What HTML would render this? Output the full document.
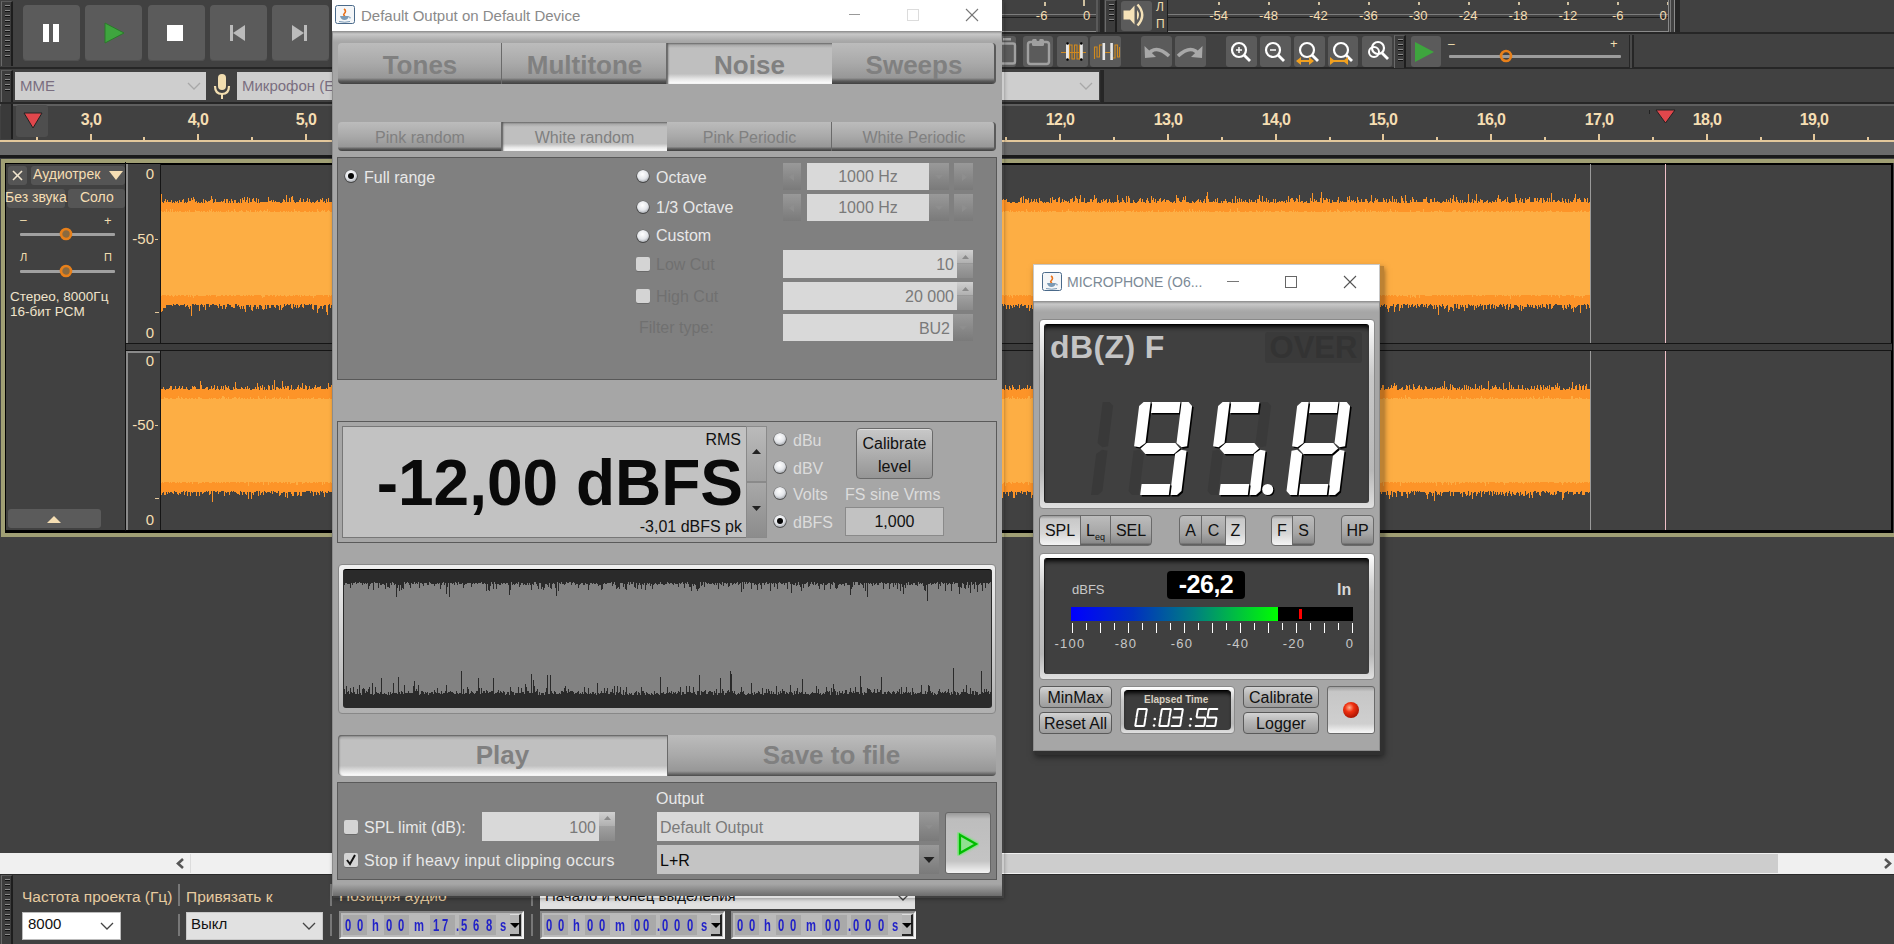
<!DOCTYPE html><html><head><meta charset="utf-8"><style>
html,body{margin:0;padding:0;width:1894px;height:944px;overflow:hidden;background:#414141;font-family:"Liberation Sans", sans-serif;}
div{box-sizing:border-box;}
svg{position:absolute;}
</style></head><body>
<div style="position:absolute;left:0px;top:67px;width:1894px;height:2px;background:#262626;"></div>
<div style="position:absolute;left:0px;top:102px;width:1894px;height:2px;background:#262626;"></div>
<div style="position:absolute;left:1000px;top:32px;width:894px;height:2px;background:#262626;"></div>
<div style="position:absolute;left:1px;top:1px;width:12px;height:65px;background:#3c3c3c;border-left:1px solid #6a6a6a;border-top:1px solid #5a5a5a;border-right:2px solid #1e1e1e;"></div>
<div style="position:absolute;left:5px;top:5px;width:5px;height:1px;background:#8a8a8a;"></div>
<div style="position:absolute;left:5px;top:6px;width:5px;height:1px;background:#111;"></div>
<div style="position:absolute;left:5px;top:10px;width:5px;height:1px;background:#8a8a8a;"></div>
<div style="position:absolute;left:5px;top:11px;width:5px;height:1px;background:#111;"></div>
<div style="position:absolute;left:5px;top:15px;width:5px;height:1px;background:#8a8a8a;"></div>
<div style="position:absolute;left:5px;top:16px;width:5px;height:1px;background:#111;"></div>
<div style="position:absolute;left:5px;top:20px;width:5px;height:1px;background:#8a8a8a;"></div>
<div style="position:absolute;left:5px;top:21px;width:5px;height:1px;background:#111;"></div>
<div style="position:absolute;left:5px;top:25px;width:5px;height:1px;background:#8a8a8a;"></div>
<div style="position:absolute;left:5px;top:26px;width:5px;height:1px;background:#111;"></div>
<div style="position:absolute;left:5px;top:30px;width:5px;height:1px;background:#8a8a8a;"></div>
<div style="position:absolute;left:5px;top:31px;width:5px;height:1px;background:#111;"></div>
<div style="position:absolute;left:5px;top:35px;width:5px;height:1px;background:#8a8a8a;"></div>
<div style="position:absolute;left:5px;top:36px;width:5px;height:1px;background:#111;"></div>
<div style="position:absolute;left:5px;top:40px;width:5px;height:1px;background:#8a8a8a;"></div>
<div style="position:absolute;left:5px;top:41px;width:5px;height:1px;background:#111;"></div>
<div style="position:absolute;left:5px;top:45px;width:5px;height:1px;background:#8a8a8a;"></div>
<div style="position:absolute;left:5px;top:46px;width:5px;height:1px;background:#111;"></div>
<div style="position:absolute;left:5px;top:50px;width:5px;height:1px;background:#8a8a8a;"></div>
<div style="position:absolute;left:5px;top:51px;width:5px;height:1px;background:#111;"></div>
<div style="position:absolute;left:5px;top:55px;width:5px;height:1px;background:#8a8a8a;"></div>
<div style="position:absolute;left:5px;top:56px;width:5px;height:1px;background:#111;"></div>
<div style="position:absolute;left:23.0px;top:5px;width:57px;height:56px;background:#5b5b5b;border-radius:4px;box-shadow:inset 0 -1px 0 #505050;"></div>
<div style="position:absolute;left:85.3px;top:5px;width:57px;height:56px;background:#5b5b5b;border-radius:4px;box-shadow:inset 0 -1px 0 #505050;"></div>
<div style="position:absolute;left:147.6px;top:5px;width:57px;height:56px;background:#5b5b5b;border-radius:4px;box-shadow:inset 0 -1px 0 #505050;"></div>
<div style="position:absolute;left:209.89999999999998px;top:5px;width:57px;height:56px;background:#5b5b5b;border-radius:4px;box-shadow:inset 0 -1px 0 #505050;"></div>
<div style="position:absolute;left:272.2px;top:5px;width:57px;height:56px;background:#5b5b5b;border-radius:4px;box-shadow:inset 0 -1px 0 #505050;"></div>
<div style="position:absolute;left:43px;top:24px;width:6px;height:18px;background:#fff;"></div>
<div style="position:absolute;left:53px;top:24px;width:6px;height:18px;background:#fff;"></div>
<svg style="left:104px;top:22px" width="22" height="22"><polygon points="1,1 20,11 1,21" fill="#3ea53e" stroke="#2a7a2a" stroke-width="1"/></svg>
<div style="position:absolute;left:167px;top:25px;width:16px;height:16px;background:#fff;"></div>
<svg style="left:228px;top:24px" width="20" height="20"><rect x="2" y="1" width="3" height="16" fill="#bbb"/><polygon points="17,1 5,9 17,17" fill="#bbb"/></svg>
<svg style="left:290px;top:24px" width="20" height="20"><rect x="14" y="1" width="3" height="16" fill="#bbb"/><polygon points="2,1 14,9 2,17" fill="#bbb"/></svg>
<div style="position:absolute;left:1px;top:70px;width:12px;height:32px;background:#3c3c3c;border-left:1px solid #6a6a6a;border-top:1px solid #5a5a5a;border-right:2px solid #1e1e1e;"></div>
<div style="position:absolute;left:5px;top:74px;width:5px;height:1px;background:#8a8a8a;"></div>
<div style="position:absolute;left:5px;top:75px;width:5px;height:1px;background:#111;"></div>
<div style="position:absolute;left:5px;top:79px;width:5px;height:1px;background:#8a8a8a;"></div>
<div style="position:absolute;left:5px;top:80px;width:5px;height:1px;background:#111;"></div>
<div style="position:absolute;left:5px;top:84px;width:5px;height:1px;background:#8a8a8a;"></div>
<div style="position:absolute;left:5px;top:85px;width:5px;height:1px;background:#111;"></div>
<div style="position:absolute;left:5px;top:89px;width:5px;height:1px;background:#8a8a8a;"></div>
<div style="position:absolute;left:5px;top:90px;width:5px;height:1px;background:#111;"></div>
<div style="position:absolute;left:15px;top:72px;width:191px;height:28px;background:#cecece;"></div>
<div style="position:absolute;left:20px;top:77px;white-space:nowrap;font-size:15px;color:#7a6e80;">MME</div>
<svg style="left:187px;top:82px" width="14" height="9"><polyline points="1,1 7,7 13,1" fill="none" stroke="#a8a8a8" stroke-width="1.3"/></svg>
<svg style="left:212px;top:73px" width="20" height="28"><rect x="6" y="1" width="8" height="16" rx="4" fill="#f2deb0"/><path d="M3,13 Q3,21 10,21 Q17,21 17,13" fill="none" stroke="#f2deb0" stroke-width="2.2"/><rect x="9" y="21" width="2" height="5" fill="#f2deb0"/></svg>
<div style="position:absolute;left:237px;top:72px;width:862px;height:28px;background:#cecece;"></div>
<div style="position:absolute;left:242px;top:77px;white-space:nowrap;font-size:15px;color:#7a6e80;">Микрофон (E</div>
<svg style="left:1079px;top:82px" width="14" height="9"><polyline points="1,1 7,7 13,1" fill="none" stroke="#a8a8a8" stroke-width="1.3"/></svg>
<div style="position:absolute;left:1100px;top:70px;width:4px;height:33px;background:#262626;border-left:1px solid #2a2a2a;"></div>
<div style="position:absolute;left:1002px;top:0px;width:98px;height:32px;background:#414141;"></div>
<div style="position:absolute;left:1002px;top:14px;width:96px;height:1px;background:#7c7c7c;"></div>
<div style="position:absolute;left:1002px;top:17px;width:96px;height:1px;background:#1e1e1e;"></div>
<div style="position:absolute;left:1002px;top:31px;width:96px;height:1px;background:#8a8a8a;"></div>
<div style="position:absolute;left:1031.6px;top:8px;white-space:nowrap;font-size:13px;color:#f5deb3;width:20px;text-align:center;">-6</div>
<div style="position:absolute;left:1076.7px;top:8px;white-space:nowrap;font-size:13px;color:#f5deb3;width:20px;text-align:center;">0</div>
<div style="position:absolute;left:1083px;top:0px;width:2px;height:6px;background:#cfc0a0;"></div>
<div style="position:absolute;left:1044px;top:2px;width:2px;height:4px;background:#cfc0a0;"></div>
<div style="position:absolute;left:1096px;top:0px;width:2px;height:32px;background:#5a5a5a;"></div>
<div style="position:absolute;left:1100px;top:0px;width:4px;height:32px;background:#262626;"></div>
<div style="position:absolute;left:1105px;top:0px;width:12px;height:32px;background:#3c3c3c;border-left:1px solid #6a6a6a;border-top:1px solid #5a5a5a;border-right:2px solid #1e1e1e;"></div>
<div style="position:absolute;left:1109px;top:4px;width:5px;height:1px;background:#8a8a8a;"></div>
<div style="position:absolute;left:1109px;top:5px;width:5px;height:1px;background:#111;"></div>
<div style="position:absolute;left:1109px;top:9px;width:5px;height:1px;background:#8a8a8a;"></div>
<div style="position:absolute;left:1109px;top:10px;width:5px;height:1px;background:#111;"></div>
<div style="position:absolute;left:1109px;top:14px;width:5px;height:1px;background:#8a8a8a;"></div>
<div style="position:absolute;left:1109px;top:15px;width:5px;height:1px;background:#111;"></div>
<div style="position:absolute;left:1109px;top:19px;width:5px;height:1px;background:#8a8a8a;"></div>
<div style="position:absolute;left:1109px;top:20px;width:5px;height:1px;background:#111;"></div>
<div style="position:absolute;left:1121px;top:1px;width:31px;height:30px;background:#5b5b5b;border-radius:3px;"></div>
<svg style="left:1121px;top:2px" width="30" height="28"><polygon points="2.5,8.5 9,8.5 13.5,3.5 13.5,22.5 9,17.5 2.5,17.5" fill="#f5e2b8"/><path d="M16,8 Q20,13 16,18 Z" fill="#f5e2b8"/><path d="M16.5,2.5 Q26,13 16.5,23.5" fill="none" stroke="#f5e2b8" stroke-width="2.4"/></svg>
<div style="position:absolute;left:1156px;top:0px;white-space:nowrap;font-size:12px;color:#f2deb0;">Л</div>
<div style="position:absolute;left:1156px;top:17px;white-space:nowrap;font-size:12px;color:#f2deb0;">П</div>
<div style="position:absolute;left:1167px;top:0px;width:1px;height:32px;background:#1e1e1e;"></div>
<div style="position:absolute;left:1168px;top:14px;width:500px;height:1px;background:#7c7c7c;"></div>
<div style="position:absolute;left:1168px;top:17px;width:500px;height:1px;background:#1e1e1e;"></div>
<div style="position:absolute;left:1168px;top:31px;width:501px;height:1px;background:#8a8a8a;"></div>
<div style="position:absolute;left:1204.6px;top:8px;white-space:nowrap;font-size:13px;color:#f5deb3;width:28px;text-align:center;">-54</div>
<div style="position:absolute;left:1254.5px;top:8px;white-space:nowrap;font-size:13px;color:#f5deb3;width:28px;text-align:center;">-48</div>
<div style="position:absolute;left:1304.3999999999999px;top:8px;white-space:nowrap;font-size:13px;color:#f5deb3;width:28px;text-align:center;">-42</div>
<div style="position:absolute;left:1354.3px;top:8px;white-space:nowrap;font-size:13px;color:#f5deb3;width:28px;text-align:center;">-36</div>
<div style="position:absolute;left:1404.1999999999998px;top:8px;white-space:nowrap;font-size:13px;color:#f5deb3;width:28px;text-align:center;">-30</div>
<div style="position:absolute;left:1454.1px;top:8px;white-space:nowrap;font-size:13px;color:#f5deb3;width:28px;text-align:center;">-24</div>
<div style="position:absolute;left:1504.0px;top:8px;white-space:nowrap;font-size:13px;color:#f5deb3;width:28px;text-align:center;">-18</div>
<div style="position:absolute;left:1553.8999999999999px;top:8px;white-space:nowrap;font-size:13px;color:#f5deb3;width:28px;text-align:center;">-12</div>
<div style="position:absolute;left:1603.8px;top:8px;white-space:nowrap;font-size:13px;color:#f5deb3;width:28px;text-align:center;">-6</div>
<div style="position:absolute;left:1649px;top:8px;white-space:nowrap;font-size:13px;color:#f5deb3;width:28px;text-align:center;">0</div>
<div style="position:absolute;left:1218px;top:2px;width:2px;height:3px;background:#cfc0a0;"></div>
<div style="position:absolute;left:1268px;top:2px;width:2px;height:3px;background:#cfc0a0;"></div>
<div style="position:absolute;left:1318px;top:2px;width:2px;height:3px;background:#cfc0a0;"></div>
<div style="position:absolute;left:1368px;top:2px;width:2px;height:3px;background:#cfc0a0;"></div>
<div style="position:absolute;left:1418px;top:2px;width:2px;height:3px;background:#cfc0a0;"></div>
<div style="position:absolute;left:1468px;top:2px;width:2px;height:3px;background:#cfc0a0;"></div>
<div style="position:absolute;left:1518px;top:2px;width:2px;height:3px;background:#cfc0a0;"></div>
<div style="position:absolute;left:1567px;top:2px;width:2px;height:3px;background:#cfc0a0;"></div>
<div style="position:absolute;left:1617px;top:2px;width:2px;height:3px;background:#cfc0a0;"></div>
<div style="position:absolute;left:1667px;top:2px;width:2px;height:3px;background:#cfc0a0;"></div>
<div style="position:absolute;left:1668px;top:0px;width:1px;height:32px;background:#8a8a8a;"></div>
<div style="position:absolute;left:1670px;top:0px;width:1px;height:32px;background:#7a7a7a;"></div>
<div style="position:absolute;left:1674px;top:0px;width:1px;height:32px;background:#8a8a8a;"></div>
<div style="position:absolute;left:1675px;top:0px;width:5px;height:33px;background:#262626;"></div>
<div style="position:absolute;left:1022.6px;top:36px;width:30.5px;height:31px;background:#5b5b5b;border-radius:3px;"></div>
<div style="position:absolute;left:1057px;top:36px;width:30.5px;height:31px;background:#5b5b5b;border-radius:3px;"></div>
<div style="position:absolute;left:1090.3px;top:36px;width:30.5px;height:31px;background:#5b5b5b;border-radius:3px;"></div>
<div style="position:absolute;left:1141.4px;top:36px;width:30.5px;height:31px;background:#5b5b5b;border-radius:3px;"></div>
<div style="position:absolute;left:1175.3px;top:36px;width:30.5px;height:31px;background:#5b5b5b;border-radius:3px;"></div>
<div style="position:absolute;left:1226px;top:36px;width:30.5px;height:31px;background:#5b5b5b;border-radius:3px;"></div>
<div style="position:absolute;left:1260px;top:36px;width:30.5px;height:31px;background:#5b5b5b;border-radius:3px;"></div>
<div style="position:absolute;left:1294px;top:36px;width:30.5px;height:31px;background:#5b5b5b;border-radius:3px;"></div>
<div style="position:absolute;left:1327.9px;top:36px;width:30.5px;height:31px;background:#5b5b5b;border-radius:3px;"></div>
<div style="position:absolute;left:1361.6px;top:36px;width:30.5px;height:31px;background:#5b5b5b;border-radius:3px;"></div>
<div style="position:absolute;left:1410.5px;top:36px;width:30.5px;height:31px;background:#5b5b5b;border-radius:3px;"></div>
<div style="position:absolute;left:1002px;top:36px;width:14px;height:31px;background:#5b5b5b;border-radius:0 3px 3px 0;"></div>
<svg style="left:1002px;top:36px" width="17" height="31"><rect x="-5" y="7.5" width="18" height="20" rx="2" fill="none" stroke="#a0a0a0" stroke-width="2.4"/><rect x="1" y="2" width="8" height="2.5" fill="#a0a0a0"/></svg>
<svg style="left:1023px;top:36px" width="30" height="31"><rect x="5" y="6" width="21" height="22" rx="2.5" fill="none" stroke="#a0a0a0" stroke-width="2.4"/><rect x="9" y="3" width="12" height="7" rx="1.5" fill="#a0a0a0"/><circle cx="15" cy="3.5" r="1.6" fill="#5b5b5b"/></svg>
<svg style="left:1057px;top:36px" width="30" height="31"><line x1="4" y1="16.5" x2="29" y2="16.5" stroke="#d08a20" stroke-width="1"/><rect x="9" y="7.5" width="3.3" height="16" fill="#e6e6e6"/><rect x="22.8" y="7.5" width="3" height="16" fill="#e6e6e6"/><path d="M12.5,23 V9 H15 V23 H17.5 V9 H20 V23 H22.5 V9" fill="none" stroke="#d08a20" stroke-width="1.1"/><circle cx="10.5" cy="7.5" r="1.3" fill="#000"/><circle cx="24.3" cy="7.5" r="1.3" fill="#000"/><circle cx="10.5" cy="23.5" r="1.3" fill="#000"/><circle cx="24.3" cy="23.5" r="1.3" fill="#000"/></svg>
<svg style="left:1090px;top:36px" width="31" height="31"><path d="M4.5,23 V11 H7 V21 H9.5 V9 H12" fill="none" stroke="#d08a20" stroke-width="1.1"/><rect x="12.5" y="7" width="2.6" height="17" fill="#e6e6e6"/><rect x="20.3" y="7" width="2.6" height="17" fill="#e6e6e6"/><line x1="15" y1="16.5" x2="20.3" y2="16.5" stroke="#d08a20" stroke-width="1"/><path d="M23,22 H25 V9 H27.5 V21 H29.5 V11" fill="none" stroke="#d08a20" stroke-width="1.1"/></svg>
<svg style="left:1142px;top:36px" width="30" height="31"><path d="M5,20 Q13,7 27,20" fill="none" stroke="#a8a8a8" stroke-width="3.6"/><polygon points="2.5,10 3,22 14,21" fill="#a8a8a8"/></svg>
<svg style="left:1175px;top:36px" width="30" height="31"><path d="M25,20 Q17,7 3,20" fill="none" stroke="#a8a8a8" stroke-width="3.6"/><polygon points="27.5,10 27,22 16,21" fill="#a8a8a8"/></svg>
<svg style="left:1226px;top:36px" width="31" height="31"><circle cx="13" cy="14" r="7" fill="none" stroke="#fff" stroke-width="2.2"/><line x1="18" y1="19" x2="24" y2="25" stroke="#fff" stroke-width="2.8"/><line x1="10" y1="14" x2="16" y2="14" stroke="#fff" stroke-width="1.5"/><line x1="13" y1="11" x2="13" y2="17" stroke="#fff" stroke-width="1.5"/></svg>
<svg style="left:1260px;top:36px" width="31" height="31"><circle cx="13" cy="14" r="7" fill="none" stroke="#fff" stroke-width="2.2"/><line x1="18" y1="19" x2="24" y2="25" stroke="#fff" stroke-width="2.8"/><line x1="10" y1="14" x2="16" y2="14" stroke="#fff" stroke-width="1.5"/></svg>
<svg style="left:1294px;top:36px" width="31" height="31"><circle cx="13" cy="14" r="7" fill="none" stroke="#fff" stroke-width="2.2"/><line x1="18" y1="19" x2="24" y2="25" stroke="#fff" stroke-width="2.8"/><line x1="3" y1="25" x2="19" y2="25" stroke="#f0a020" stroke-width="2"/><polygon points="2,25 7,21 7,29" fill="#f0a020"/><polygon points="20,25 15,21 15,29" fill="#f0a020"/></svg>
<svg style="left:1328px;top:36px" width="31" height="31"><circle cx="13" cy="14" r="7" fill="none" stroke="#fff" stroke-width="2.2"/><line x1="18" y1="19" x2="24" y2="25" stroke="#fff" stroke-width="2.8"/><line x1="3" y1="25" x2="19" y2="25" stroke="#f0a020" stroke-width="2"/><polygon points="2,21 7,25 2,29" fill="#f0a020"/><polygon points="20,21 15,25 20,29" fill="#f0a020"/></svg>
<svg style="left:1362px;top:36px" width="31" height="31"><circle cx="12" cy="16" r="5" fill="none" stroke="#fff" stroke-width="2"/><circle cx="16" cy="12" r="6" fill="none" stroke="#fff" stroke-width="2.2"/><line x1="20" y1="17" x2="26" y2="23" stroke="#fff" stroke-width="2.8"/></svg>
<div style="position:absolute;left:1394px;top:35px;width:12px;height:33px;background:#3c3c3c;border-left:1px solid #6a6a6a;border-top:1px solid #5a5a5a;border-right:2px solid #1e1e1e;"></div>
<div style="position:absolute;left:1398px;top:39px;width:5px;height:1px;background:#8a8a8a;"></div>
<div style="position:absolute;left:1398px;top:40px;width:5px;height:1px;background:#111;"></div>
<div style="position:absolute;left:1398px;top:44px;width:5px;height:1px;background:#8a8a8a;"></div>
<div style="position:absolute;left:1398px;top:45px;width:5px;height:1px;background:#111;"></div>
<div style="position:absolute;left:1398px;top:49px;width:5px;height:1px;background:#8a8a8a;"></div>
<div style="position:absolute;left:1398px;top:50px;width:5px;height:1px;background:#111;"></div>
<div style="position:absolute;left:1398px;top:54px;width:5px;height:1px;background:#8a8a8a;"></div>
<div style="position:absolute;left:1398px;top:55px;width:5px;height:1px;background:#111;"></div>
<div style="position:absolute;left:1398px;top:59px;width:5px;height:1px;background:#8a8a8a;"></div>
<div style="position:absolute;left:1398px;top:60px;width:5px;height:1px;background:#111;"></div>
<svg style="left:1414px;top:41px" width="22" height="22"><polygon points="1,1 20,11 1,21" fill="#3ea53e"/></svg>
<div style="position:absolute;left:1448px;top:37px;white-space:nowrap;font-size:12px;color:#f2deb0;">–</div>
<div style="position:absolute;left:1610px;top:36px;white-space:nowrap;font-size:13px;color:#f2deb0;">+</div>
<div style="position:absolute;left:1449px;top:55px;width:172px;height:3px;background:#9c9c9c;border-radius:1px;"></div>
<svg style="left:1499px;top:49px" width="14" height="14"><circle cx="7" cy="7" r="5" fill="none" stroke="#e8801a" stroke-width="2.6"/></svg>
<div style="position:absolute;left:1629px;top:35px;width:1px;height:33px;background:#262626;"></div>
<div style="position:absolute;left:1630px;top:35px;width:2px;height:33px;background:#4a4a4a;"></div>
<div style="position:absolute;left:1632px;top:35px;width:2px;height:33px;background:#262626;"></div>
<div style="position:absolute;left:0px;top:104px;width:1894px;height:2px;background:#5f5f5f;"></div>
<div style="position:absolute;left:0px;top:106px;width:1894px;height:35px;background:#414141;"></div>
<div style="position:absolute;left:1px;top:104px;width:12px;height:35px;background:#3a3a3a;border-right:2px solid #1e1e1e;"></div>
<div style="position:absolute;left:16px;top:105px;width:32px;height:32px;background:#4e4e4e;border-radius:3px;"></div>
<svg style="left:22px;top:111px" width="22" height="20"><polygon points="2,2 20,2 11,17" fill="#e0474c" stroke="#222" stroke-width="1"/></svg>
<div style="position:absolute;left:0px;top:140px;width:1894px;height:2px;background:#e4c89c;"></div>
<div style="position:absolute;left:0px;top:142px;width:1894px;height:13px;background:#6a6a6a;"></div>
<div style="position:absolute;left:0px;top:155px;width:1894px;height:3px;background:#1a1a1a;"></div>
<div style="position:absolute;left:36px;top:137px;width:2px;height:3px;background:#e4c89c;"></div>
<div style="position:absolute;left:90px;top:134px;width:2px;height:6px;background:#e4c89c;"></div>
<div style="position:absolute;left:71px;top:111px;white-space:nowrap;font-size:16px;font-weight:bold;color:#f5deb3;width:40px;text-align:center;letter-spacing:-0.6px;">3,0</div>
<div style="position:absolute;left:143px;top:137px;width:2px;height:3px;background:#e4c89c;"></div>
<div style="position:absolute;left:197px;top:134px;width:2px;height:6px;background:#e4c89c;"></div>
<div style="position:absolute;left:178px;top:111px;white-space:nowrap;font-size:16px;font-weight:bold;color:#f5deb3;width:40px;text-align:center;letter-spacing:-0.6px;">4,0</div>
<div style="position:absolute;left:251px;top:137px;width:2px;height:3px;background:#e4c89c;"></div>
<div style="position:absolute;left:305px;top:134px;width:2px;height:6px;background:#e4c89c;"></div>
<div style="position:absolute;left:286px;top:111px;white-space:nowrap;font-size:16px;font-weight:bold;color:#f5deb3;width:40px;text-align:center;letter-spacing:-0.6px;">5,0</div>
<div style="position:absolute;left:359px;top:137px;width:2px;height:3px;background:#e4c89c;"></div>
<div style="position:absolute;left:413px;top:134px;width:2px;height:6px;background:#e4c89c;"></div>
<div style="position:absolute;left:394px;top:111px;white-space:nowrap;font-size:16px;font-weight:bold;color:#f5deb3;width:40px;text-align:center;letter-spacing:-0.6px;">6,0</div>
<div style="position:absolute;left:467px;top:137px;width:2px;height:3px;background:#e4c89c;"></div>
<div style="position:absolute;left:521px;top:134px;width:2px;height:6px;background:#e4c89c;"></div>
<div style="position:absolute;left:502px;top:111px;white-space:nowrap;font-size:16px;font-weight:bold;color:#f5deb3;width:40px;text-align:center;letter-spacing:-0.6px;">7,0</div>
<div style="position:absolute;left:574px;top:137px;width:2px;height:3px;background:#e4c89c;"></div>
<div style="position:absolute;left:628px;top:134px;width:2px;height:6px;background:#e4c89c;"></div>
<div style="position:absolute;left:609px;top:111px;white-space:nowrap;font-size:16px;font-weight:bold;color:#f5deb3;width:40px;text-align:center;letter-spacing:-0.6px;">8,0</div>
<div style="position:absolute;left:682px;top:137px;width:2px;height:3px;background:#e4c89c;"></div>
<div style="position:absolute;left:736px;top:134px;width:2px;height:6px;background:#e4c89c;"></div>
<div style="position:absolute;left:717px;top:111px;white-space:nowrap;font-size:16px;font-weight:bold;color:#f5deb3;width:40px;text-align:center;letter-spacing:-0.6px;">9,0</div>
<div style="position:absolute;left:790px;top:137px;width:2px;height:3px;background:#e4c89c;"></div>
<div style="position:absolute;left:844px;top:134px;width:2px;height:6px;background:#e4c89c;"></div>
<div style="position:absolute;left:825px;top:111px;white-space:nowrap;font-size:16px;font-weight:bold;color:#f5deb3;width:40px;text-align:center;letter-spacing:-0.6px;">10,0</div>
<div style="position:absolute;left:898px;top:137px;width:2px;height:3px;background:#e4c89c;"></div>
<div style="position:absolute;left:952px;top:134px;width:2px;height:6px;background:#e4c89c;"></div>
<div style="position:absolute;left:933px;top:111px;white-space:nowrap;font-size:16px;font-weight:bold;color:#f5deb3;width:40px;text-align:center;letter-spacing:-0.6px;">11,0</div>
<div style="position:absolute;left:1005px;top:137px;width:2px;height:3px;background:#e4c89c;"></div>
<div style="position:absolute;left:1059px;top:134px;width:2px;height:6px;background:#e4c89c;"></div>
<div style="position:absolute;left:1040px;top:111px;white-space:nowrap;font-size:16px;font-weight:bold;color:#f5deb3;width:40px;text-align:center;letter-spacing:-0.6px;">12,0</div>
<div style="position:absolute;left:1113px;top:137px;width:2px;height:3px;background:#e4c89c;"></div>
<div style="position:absolute;left:1167px;top:134px;width:2px;height:6px;background:#e4c89c;"></div>
<div style="position:absolute;left:1148px;top:111px;white-space:nowrap;font-size:16px;font-weight:bold;color:#f5deb3;width:40px;text-align:center;letter-spacing:-0.6px;">13,0</div>
<div style="position:absolute;left:1221px;top:137px;width:2px;height:3px;background:#e4c89c;"></div>
<div style="position:absolute;left:1275px;top:134px;width:2px;height:6px;background:#e4c89c;"></div>
<div style="position:absolute;left:1256px;top:111px;white-space:nowrap;font-size:16px;font-weight:bold;color:#f5deb3;width:40px;text-align:center;letter-spacing:-0.6px;">14,0</div>
<div style="position:absolute;left:1329px;top:137px;width:2px;height:3px;background:#e4c89c;"></div>
<div style="position:absolute;left:1382px;top:134px;width:2px;height:6px;background:#e4c89c;"></div>
<div style="position:absolute;left:1363px;top:111px;white-space:nowrap;font-size:16px;font-weight:bold;color:#f5deb3;width:40px;text-align:center;letter-spacing:-0.6px;">15,0</div>
<div style="position:absolute;left:1436px;top:137px;width:2px;height:3px;background:#e4c89c;"></div>
<div style="position:absolute;left:1490px;top:134px;width:2px;height:6px;background:#e4c89c;"></div>
<div style="position:absolute;left:1471px;top:111px;white-space:nowrap;font-size:16px;font-weight:bold;color:#f5deb3;width:40px;text-align:center;letter-spacing:-0.6px;">16,0</div>
<div style="position:absolute;left:1544px;top:137px;width:2px;height:3px;background:#e4c89c;"></div>
<div style="position:absolute;left:1598px;top:134px;width:2px;height:6px;background:#e4c89c;"></div>
<div style="position:absolute;left:1579px;top:111px;white-space:nowrap;font-size:16px;font-weight:bold;color:#f5deb3;width:40px;text-align:center;letter-spacing:-0.6px;">17,0</div>
<div style="position:absolute;left:1652px;top:137px;width:2px;height:3px;background:#e4c89c;"></div>
<div style="position:absolute;left:1706px;top:134px;width:2px;height:6px;background:#e4c89c;"></div>
<div style="position:absolute;left:1687px;top:111px;white-space:nowrap;font-size:16px;font-weight:bold;color:#f5deb3;width:40px;text-align:center;letter-spacing:-0.6px;">18,0</div>
<div style="position:absolute;left:1760px;top:137px;width:2px;height:3px;background:#e4c89c;"></div>
<div style="position:absolute;left:1813px;top:134px;width:2px;height:6px;background:#e4c89c;"></div>
<div style="position:absolute;left:1794px;top:111px;white-space:nowrap;font-size:16px;font-weight:bold;color:#f5deb3;width:40px;text-align:center;letter-spacing:-0.6px;">19,0</div>
<div style="position:absolute;left:1867px;top:137px;width:2px;height:3px;background:#e4c89c;"></div>
<svg style="left:1654px;top:109px" width="24" height="18"><polygon points="2,1 21,1 11.5,14" fill="#e0474c" stroke="#222" stroke-width="1"/></svg>
<div style="position:absolute;left:1649px;top:110px;width:1px;height:4px;background:#222;"></div>
<div style="position:absolute;left:0px;top:158px;width:1894px;height:377px;background:#414141;"></div>
<div style="position:absolute;left:1px;top:159px;width:1893px;height:378px;border:4px solid #a09f74;border-right:none;"></div>
<div style="position:absolute;left:5px;top:163px;width:1888px;height:370px;background:#414141;border-top:2px solid #000;border-bottom:3px solid #000;border-right:2px solid #000;border-left:1px solid #000;"></div>
<div style="position:absolute;left:6px;top:164px;width:119px;height:366px;background:#414141;"></div>
<div style="position:absolute;left:8px;top:166px;width:19px;height:19px;background:#555;border-radius:3px;"></div>
<svg style="left:11px;top:169px" width="13" height="13"><line x1="2" y1="2" x2="11" y2="11" stroke="#f2e6cf" stroke-width="1.6"/><line x1="11" y1="2" x2="2" y2="11" stroke="#f2e6cf" stroke-width="1.6"/></svg>
<div style="position:absolute;left:31px;top:166px;width:94px;height:19px;background:#555;border-radius:3px;"></div>
<div style="position:absolute;left:33px;top:166px;white-space:nowrap;font-size:14px;color:#f5deb3;">Аудиотрек</div>
<svg style="left:108px;top:170px" width="16" height="12"><polygon points="1,1 15,1 8,10" fill="#f5deb3"/></svg>
<div style="position:absolute;left:7px;top:189px;width:58px;height:19px;background:#555;border-radius:3px;"></div>
<div style="position:absolute;left:5px;top:189px;white-space:nowrap;font-size:14px;color:#f5deb3;">Без звука</div>
<div style="position:absolute;left:68px;top:189px;width:57px;height:19px;background:#555;border-radius:3px;"></div>
<div style="position:absolute;left:80px;top:189px;white-space:nowrap;font-size:14px;color:#f5deb3;">Соло</div>
<div style="position:absolute;left:20px;top:213px;white-space:nowrap;font-size:12px;color:#f2deb0;">–</div>
<div style="position:absolute;left:104px;top:213px;white-space:nowrap;font-size:13px;color:#f2deb0;">+</div>
<div style="position:absolute;left:20px;top:233px;width:95px;height:3px;background:#a0a0a0;border-radius:1px;"></div>
<svg style="left:59px;top:227px" width="14" height="14"><circle cx="7" cy="7" r="5" fill="#8a6a40" stroke="#e8801a" stroke-width="2.6"/></svg>
<div style="position:absolute;left:20px;top:251px;white-space:nowrap;font-size:11px;color:#f2deb0;">Л</div>
<div style="position:absolute;left:104px;top:251px;white-space:nowrap;font-size:11px;color:#f2deb0;">П</div>
<div style="position:absolute;left:20px;top:270px;width:95px;height:3px;background:#a0a0a0;border-radius:1px;"></div>
<svg style="left:59px;top:264px" width="14" height="14"><circle cx="7" cy="7" r="5" fill="#8a6a40" stroke="#e8801a" stroke-width="2.6"/></svg>
<div style="position:absolute;left:10px;top:289px;white-space:nowrap;font-size:13.5px;color:#f0e4cc;line-height:15px;">Стерео, 8000Гц</div>
<div style="position:absolute;left:10px;top:304px;white-space:nowrap;font-size:13.5px;color:#f0e4cc;line-height:15px;">16-бит PCM</div>
<div style="position:absolute;left:8px;top:509px;width:93px;height:19px;background:#5b5b5b;border-radius:3px;"></div>
<svg style="left:46px;top:514px" width="16" height="10"><polygon points="1,9 15,9 8,2" fill="#f5deb3"/></svg>
<div style="position:absolute;left:125px;top:162px;width:1px;height:369px;background:#111;"></div>
<div style="position:absolute;left:126px;top:164px;width:34px;height:179px;background:#414141;border-left:2px solid #8a8a8a;"></div>
<div style="position:absolute;left:160px;top:164px;width:1px;height:179px;background:#151515;"></div>
<div style="position:absolute;left:126px;top:165px;white-space:nowrap;font-size:15px;color:#f5deb3;width:28px;text-align:right;">0</div>
<div style="position:absolute;left:126px;top:230px;white-space:nowrap;font-size:15px;color:#f5deb3;width:28px;text-align:right;">-50</div>
<div style="position:absolute;left:155px;top:239px;width:3px;height:1px;background:#e4c89c;"></div>
<div style="position:absolute;left:155px;top:312px;width:4px;height:1px;background:#e4c89c;"></div>
<div style="position:absolute;left:126px;top:324px;white-space:nowrap;font-size:15px;color:#f5deb3;width:28px;text-align:right;">0</div>
<div style="position:absolute;left:126px;top:343px;width:1766px;height:8px;background:#3c3c3c;border-top:1px solid #151515;border-bottom:1px solid #151515;"></div>
<div style="position:absolute;left:126px;top:351px;width:34px;height:179px;background:#414141;border-left:2px solid #8a8a8a;"></div>
<div style="position:absolute;left:160px;top:351px;width:1px;height:179px;background:#151515;"></div>
<div style="position:absolute;left:126px;top:352px;white-space:nowrap;font-size:15px;color:#f5deb3;width:28px;text-align:right;">0</div>
<div style="position:absolute;left:126px;top:416px;white-space:nowrap;font-size:15px;color:#f5deb3;width:28px;text-align:right;">-50</div>
<div style="position:absolute;left:155px;top:425px;width:3px;height:1px;background:#e4c89c;"></div>
<div style="position:absolute;left:155px;top:498px;width:4px;height:1px;background:#e4c89c;"></div>
<div style="position:absolute;left:126px;top:511px;white-space:nowrap;font-size:15px;color:#f5deb3;width:28px;text-align:right;">0</div>
<div style="position:absolute;left:127px;top:351px;width:33px;height:2px;background:#8a8a8a;"></div>
<svg style="left:0;top:0" width="1894" height="944"><path d="M161,194V194h1V202h1V203h1V201h1V199h1V202h1V200h1V202h1V202h1V202h1V200h1V203h1V202h1V203h1V201h1V202h1V201h1V203h1V200h1V202h1V202h1V200h1V199h1V203h1V202h1V203h1V202h1V198h1V201h1V201h1V198h1V200h1V197h1V199h1V202h1V201h1V203h1V202h1V203h1V203h1V202h1V203h1V199h1V203h1V200h1V201h1V202h1V201h1V201h1V200h1V196h1V199h1V203h1V202h1V199h1V202h1V202h1V202h1V202h1V202h1V201h1V202h1V201h1V199h1V203h1V199h1V199h1V203h1V201h1V203h1V199h1V201h1V203h1V200h1V200h1V203h1V203h1V202h1V203h1V199h1V203h1V198h1V200h1V197h1V202h1V200h1V197h1V203h1V198h1V202h1V202h1V199h1V198h1V201h1V202h1V198h1V203h1V199h1V203h1V202h1V202h1V202h1V202h1V202h1V202h1V202h1V202h1V197h1V201h1V201h1V200h1V202h1V200h1V202h1V201h1V202h1V202h1V202h1V202h1V203h1V203h1V202h1V199h1V200h1V202h1V195h1V202h1V202h1V198h1V202h1V197h1V196h1V200h1V202h1V203h1V202h1V202h1V202h1V200h1V198h1V202h1V202h1V199h1V202h1V202h1V201h1V198h1V202h1V199h1V202h1V203h1V202h1V202h1V203h1V202h1V201h1V200h1V202h1V202h1V199h1V200h1V198h1V202h1V201h1V203h1V199h1V202h1V198h1V202h1V202h1V202h1V202h1V195h1V196h1V198h1V202h1V202h1V200h1V198h1V199h1V202h1V198h1V200h1V203h1V199h1V200h1V202h1V203h1V200h1V194h1V202h1V202h1V203h1V198h1V200h1V203h1V201h1V200h1V200h1V199h1V199h1V199h1V203h1V199h1V198h1V203h1V202h1V202h1V199h1V199h1V203h1V202h1V198h1V193h1V202h1V201h1V202h1V203h1V203h1V202h1V202h1V200h1V202h1V202h1V200h1V203h1V199h1V202h1V200h1V201h1V203h1V203h1V198h1V195h1V200h1V201h1V200h1V202h1V202h1V193h1V203h1V200h1V202h1V203h1V203h1V203h1V201h1V198h1V202h1V197h1V201h1V203h1V202h1V192h1V202h1V198h1V201h1V202h1V202h1V202h1V199h1V203h1V200h1V202h1V199h1V202h1V199h1V202h1V200h1V202h1V202h1V199h1V202h1V199h1V202h1V202h1V203h1V201h1V202h1V203h1V202h1V203h1V198h1V199h1V198h1V192h1V198h1V203h1V198h1V203h1V197h1V201h1V197h1V202h1V202h1V202h1V202h1V203h1V200h1V201h1V202h1V199h1V203h1V199h1V202h1V202h1V202h1V200h1V202h1V201h1V200h1V199h1V202h1V203h1V202h1V202h1V202h1V198h1V202h1V201h1V200h1V201h1V203h1V203h1V202h1V203h1V198h1V202h1V197h1V199h1V202h1V202h1V202h1V199h1V202h1V199h1V198h1V202h1V203h1V203h1V202h1V202h1V198h1V202h1V203h1V202h1V202h1V202h1V202h1V199h1V196h1V199h1V203h1V201h1V192h1V201h1V202h1V201h1V203h1V200h1V200h1V192h1V197h1V197h1V200h1V202h1V203h1V202h1V201h1V200h1V202h1V203h1V194h1V198h1V203h1V201h1V202h1V203h1V203h1V199h1V202h1V202h1V203h1V202h1V198h1V202h1V198h1V198h1V199h1V202h1V196h1V201h1V202h1V203h1V198h1V203h1V199h1V202h1V192h1V199h1V201h1V198h1V202h1V201h1V200h1V195h1V202h1V203h1V202h1V195h1V202h1V201h1V202h1V198h1V203h1V199h1V203h1V201h1V200h1V202h1V196h1V202h1V203h1V198h1V203h1V200h1V197h1V203h1V202h1V202h1V202h1V200h1V201h1V202h1V200h1V199h1V202h1V200h1V203h1V201h1V198h1V196h1V199h1V201h1V203h1V203h1V194h1V200h1V198h1V202h1V199h1V203h1V202h1V201h1V199h1V202h1V202h1V203h1V200h1V203h1V203h1V201h1V203h1V201h1V202h1V202h1V199h1V203h1V202h1V202h1V202h1V200h1V200h1V202h1V203h1V202h1V200h1V198h1V202h1V201h1V201h1V203h1V199h1V202h1V201h1V199h1V202h1V202h1V203h1V202h1V199h1V196h1V203h1V203h1V201h1V199h1V202h1V200h1V200h1V201h1V200h1V203h1V202h1V203h1V202h1V199h1V198h1V201h1V202h1V195h1V201h1V202h1V202h1V202h1V203h1V198h1V202h1V202h1V202h1V203h1V202h1V203h1V202h1V202h1V199h1V199h1V203h1V203h1V203h1V202h1V203h1V199h1V203h1V203h1V200h1V202h1V202h1V200h1V196h1V202h1V202h1V202h1V202h1V198h1V200h1V199h1V199h1V202h1V199h1V202h1V201h1V202h1V203h1V198h1V203h1V198h1V199h1V203h1V202h1V198h1V202h1V202h1V202h1V202h1V196h1V200h1V194h1V203h1V203h1V199h1V202h1V203h1V200h1V202h1V203h1V199h1V202h1V203h1V199h1V202h1V200h1V201h1V200h1V203h1V202h1V200h1V202h1V202h1V201h1V202h1V203h1V199h1V202h1V198h1V202h1V203h1V198h1V203h1V198h1V202h1V201h1V203h1V196h1V203h1V202h1V202h1V202h1V202h1V202h1V202h1V202h1V199h1V201h1V200h1V202h1V203h1V200h1V203h1V199h1V203h1V199h1V197h1V202h1V202h1V198h1V202h1V202h1V201h1V198h1V203h1V201h1V203h1V202h1V203h1V203h1V201h1V200h1V200h1V199h1V202h1V202h1V202h1V198h1V196h1V200h1V202h1V200h1V198h1V198h1V203h1V199h1V202h1V202h1V197h1V199h1V201h1V203h1V197h1V202h1V196h1V201h1V200h1V202h1V199h1V201h1V202h1V202h1V203h1V199h1V199h1V200h1V203h1V194h1V201h1V203h1V200h1V199h1V202h1V200h1V199h1V202h1V202h1V197h1V199h1V200h1V202h1V199h1V202h1V200h1V199h1V196h1V198h1V199h1V198h1V203h1V202h1V202h1V203h1V202h1V202h1V200h1V202h1V203h1V200h1V200h1V203h1V202h1V201h1V202h1V198h1V199h1V202h1V200h1V202h1V202h1V203h1V195h1V202h1V199h1V202h1V199h1V202h1V202h1V200h1V202h1V202h1V197h1V203h1V202h1V202h1V200h1V198h1V202h1V199h1V203h1V202h1V197h1V200h1V202h1V199h1V201h1V202h1V202h1V200h1V203h1V201h1V203h1V201h1V202h1V199h1V193h1V198h1V198h1V202h1V199h1V202h1V198h1V203h1V202h1V199h1V199h1V200h1V198h1V203h1V202h1V202h1V202h1V202h1V201h1V203h1V202h1V202h1V202h1V201h1V198h1V202h1V202h1V198h1V201h1V202h1V193h1V202h1V202h1V202h1V199h1V200h1V200h1V202h1V200h1V202h1V202h1V201h1V199h1V200h1V202h1V199h1V203h1V202h1V202h1V199h1V203h1V203h1V203h1V196h1V197h1V203h1V202h1V202h1V202h1V203h1V202h1V202h1V202h1V200h1V202h1V198h1V198h1V199h1V195h1V202h1V202h1V202h1V202h1V201h1V200h1V202h1V202h1V202h1V203h1V202h1V202h1V202h1V203h1V199h1V200h1V200h1V203h1V200h1V199h1V203h1V198h1V200h1V199h1V200h1V200h1V199h1V202h1V202h1V202h1V203h1V203h1V202h1V202h1V202h1V203h1V203h1V203h1V202h1V202h1V198h1V197h1V203h1V196h1V203h1V199h1V199h1V200h1V198h1V203h1V202h1V199h1V202h1V201h1V199h1V202h1V199h1V202h1V203h1V198h1V201h1V201h1V202h1V203h1V202h1V203h1V202h1V202h1V202h1V203h1V198h1V203h1V197h1V200h1V200h1V199h1V202h1V202h1V198h1V197h1V203h1V202h1V199h1V202h1V200h1V201h1V201h1V202h1V201h1V203h1V199h1V199h1V198h1V202h1V201h1V196h1V198h1V199h1V203h1V199h1V195h1V202h1V202h1V202h1V198h1V203h1V203h1V202h1V202h1V202h1V199h1V199h1V202h1V200h1V195h1V199h1V198h1V203h1V202h1V203h1V203h1V200h1V202h1V199h1V201h1V200h1V199h1V203h1V202h1V199h1V202h1V203h1V202h1V203h1V202h1V202h1V202h1V195h1V200h1V203h1V202h1V202h1V198h1V200h1V202h1V203h1V196h1V202h1V196h1V198h1V203h1V203h1V203h1V200h1V202h1V203h1V203h1V202h1V201h1V199h1V198h1V202h1V199h1V202h1V202h1V203h1V200h1V198h1V201h1V203h1V203h1V196h1V200h1V198h1V202h1V199h1V203h1V201h1V201h1V199h1V198h1V202h1V201h1V200h1V199h1V202h1V200h1V200h1V200h1V201h1V202h1V202h1V203h1V202h1V201h1V203h1V195h1V198h1V198h1V201h1V202h1V202h1V200h1V197h1V200h1V196h1V202h1V202h1V202h1V203h1V203h1V203h1V201h1V202h1V203h1V202h1V201h1V200h1V199h1V202h1V200h1V202h1V203h1V201h1V199h1V203h1V196h1V192h1V199h1V202h1V202h1V202h1V202h1V201h1V202h1V199h1V202h1V198h1V203h1V203h1V203h1V201h1V203h1V201h1V201h1V199h1V201h1V203h1V202h1V202h1V202h1V203h1V199h1V203h1V203h1V196h1V203h1V199h1V202h1V198h1V202h1V199h1V202h1V201h1V202h1V200h1V202h1V202h1V203h1V199h1V202h1V200h1V202h1V202h1V202h1V200h1V203h1V199h1V199h1V195h1V201h1V202h1V196h1V202h1V201h1V202h1V198h1V202h1V200h1V203h1V202h1V202h1V202h1V199h1V203h1V199h1V203h1V202h1V202h1V201h1V202h1V201h1V201h1V202h1V201h1V203h1V200h1V202h1V196h1V202h1V199h1V198h1V198h1V200h1V202h1V201h1V198h1V199h1V202h1V195h1V202h1V201h1V201h1V203h1V202h1V202h1V201h1V203h1V203h1V203h1V198h1V201h1V193h1V202h1V199h1V201h1V200h1V202h1V202h1V202h1V198h1V192h1V203h1V198h1V200h1V200h1V198h1V199h1V202h1V199h1V203h1V203h1V200h1V202h1V202h1V202h1V202h1V200h1V197h1V203h1V201h1V202h1V201h1V202h1V202h1V202h1V202h1V197h1V200h1V196h1V202h1V200h1V201h1V200h1V202h1V201h1V203h1V197h1V200h1V202h1V202h1V199h1V202h1V202h1V202h1V199h1V199h1V201h1V203h1V202h1V201h1V195h1V202h1V203h1V201h1V198h1V200h1V199h1V202h1V202h1V202h1V202h1V202h1V198h1V200h1V202h1V199h1V203h1V202h1V199h1V201h1V202h1V196h1V202h1V199h1V202h1V199h1V203h1V202h1V203h1V203h1V196h1V198h1V201h1V203h1V195h1V201h1V203h1V203h1V203h1V200h1V202h1V197h1V199h1V202h1V202h1V200h1V202h1V202h1V202h1V202h1V202h1V202h1V199h1V199h1V199h1V197h1V202h1V203h1V203h1V199h1V199h1V202h1V202h1V198h1V202h1V202h1V201h1V202h1V202h1V203h1V203h1V202h1V201h1V202h1V202h1V199h1V202h1V200h1V202h1V198h1V203h1V199h1V195h1V201h1V202h1V197h1V200h1V202h1V203h1V200h1V203h1V200h1V203h1V202h1V202h1V203h1V202h1V194h1V202h1V203h1V202h1V199h1V203h1V200h1V201h1V194h1V203h1V201h1V202h1V199h1V200h1V200h1V203h1V202h1V202h1V201h1V200h1V203h1V202h1V202h1V203h1V201h1V202h1V202h1V200h1V202h1V198h1V195h1V199h1V199h1V202h1V201h1V201h1V200h1V199h1V202h1V197h1V202h1V203h1V203h1V202h1V202h1V202h1V202h1V194h1V198h1V201h1V203h1V200h1V198h1V202h1V199h1V203h1V203h1V198h1V200h1V199h1V199h1V197h1V202h1V202h1V202h1V202h1V198h1V198h1V201h1V198h1V202h1V200h1V198h1V198h1V203h1V198h1V200h1V202h1V201h1V198h1V202h1V198h1V202h1V193h1V202h1V200h1V200h1V202h1V202h1V201h1V200h1V201h1V202h1V202h1V198h1V201h1V203h1V199h1V202h1V203h1V199h1V203h1V201h1V202h1V202h1V200h1V198h1V194h1V202h1V199h1V199h1V198h1V200h1V202h1V202h1V202h1V198h1V199h1V202h1V198h1V203h1V202h1V308h-1V305h-1V304h-1V309h-1V305h-1V304h-1V305h-1V305h-1V305h-1V313h-1V305h-1V305h-1V306h-1V307h-1V308h-1V307h-1V312h-1V308h-1V309h-1V305h-1V304h-1V307h-1V305h-1V309h-1V308h-1V305h-1V310h-1V308h-1V305h-1V305h-1V305h-1V305h-1V305h-1V304h-1V304h-1V305h-1V306h-1V308h-1V309h-1V304h-1V304h-1V309h-1V305h-1V304h-1V308h-1V307h-1V307h-1V304h-1V308h-1V305h-1V307h-1V305h-1V309h-1V306h-1V305h-1V308h-1V308h-1V305h-1V307h-1V305h-1V307h-1V305h-1V304h-1V307h-1V307h-1V307h-1V309h-1V306h-1V311h-1V305h-1V310h-1V307h-1V306h-1V305h-1V305h-1V305h-1V308h-1V308h-1V309h-1V304h-1V307h-1V310h-1V304h-1V305h-1V309h-1V306h-1V304h-1V307h-1V305h-1V304h-1V305h-1V307h-1V307h-1V306h-1V309h-1V305h-1V308h-1V304h-1V305h-1V309h-1V304h-1V305h-1V305h-1V309h-1V305h-1V305h-1V310h-1V305h-1V306h-1V304h-1V306h-1V307h-1V305h-1V308h-1V306h-1V310h-1V305h-1V306h-1V305h-1V306h-1V305h-1V304h-1V308h-1V308h-1V305h-1V311h-1V307h-1V305h-1V307h-1V305h-1V309h-1V309h-1V304h-1V308h-1V304h-1V304h-1V311h-1V308h-1V307h-1V307h-1V310h-1V312h-1V305h-1V306h-1V308h-1V309h-1V306h-1V304h-1V307h-1V306h-1V305h-1V315h-1V307h-1V305h-1V309h-1V305h-1V309h-1V306h-1V305h-1V304h-1V305h-1V306h-1V308h-1V304h-1V307h-1V305h-1V307h-1V304h-1V304h-1V305h-1V307h-1V306h-1V304h-1V308h-1V305h-1V306h-1V307h-1V304h-1V305h-1V307h-1V305h-1V308h-1V304h-1V305h-1V305h-1V304h-1V304h-1V308h-1V305h-1V308h-1V311h-1V304h-1V304h-1V305h-1V307h-1V312h-1V304h-1V306h-1V306h-1V306h-1V308h-1V312h-1V309h-1V305h-1V307h-1V304h-1V305h-1V306h-1V305h-1V307h-1V309h-1V312h-1V311h-1V308h-1V304h-1V305h-1V307h-1V307h-1V306h-1V311h-1V306h-1V305h-1V305h-1V306h-1V307h-1V308h-1V307h-1V313h-1V305h-1V306h-1V312h-1V305h-1V304h-1V305h-1V305h-1V305h-1V304h-1V305h-1V305h-1V308h-1V306h-1V304h-1V305h-1V307h-1V305h-1V307h-1V305h-1V305h-1V306h-1V304h-1V305h-1V313h-1V308h-1V306h-1V307h-1V307h-1V308h-1V304h-1V313h-1V305h-1V304h-1V305h-1V305h-1V305h-1V307h-1V304h-1V311h-1V304h-1V304h-1V305h-1V305h-1V308h-1V305h-1V304h-1V309h-1V304h-1V307h-1V304h-1V306h-1V306h-1V304h-1V307h-1V305h-1V305h-1V306h-1V305h-1V304h-1V305h-1V308h-1V305h-1V305h-1V309h-1V305h-1V306h-1V307h-1V307h-1V305h-1V305h-1V306h-1V304h-1V305h-1V305h-1V309h-1V307h-1V304h-1V310h-1V306h-1V305h-1V306h-1V305h-1V310h-1V306h-1V305h-1V305h-1V305h-1V309h-1V306h-1V305h-1V304h-1V308h-1V305h-1V307h-1V305h-1V314h-1V308h-1V308h-1V305h-1V305h-1V306h-1V305h-1V304h-1V305h-1V305h-1V308h-1V304h-1V304h-1V304h-1V309h-1V305h-1V305h-1V307h-1V308h-1V304h-1V305h-1V308h-1V305h-1V304h-1V304h-1V308h-1V305h-1V305h-1V304h-1V308h-1V314h-1V304h-1V307h-1V305h-1V312h-1V304h-1V305h-1V307h-1V305h-1V305h-1V308h-1V304h-1V307h-1V305h-1V305h-1V307h-1V309h-1V304h-1V305h-1V305h-1V306h-1V306h-1V308h-1V310h-1V307h-1V307h-1V309h-1V305h-1V304h-1V306h-1V307h-1V305h-1V304h-1V305h-1V309h-1V305h-1V305h-1V304h-1V308h-1V305h-1V307h-1V304h-1V305h-1V305h-1V307h-1V308h-1V305h-1V305h-1V305h-1V306h-1V305h-1V305h-1V305h-1V310h-1V305h-1V306h-1V305h-1V305h-1V307h-1V304h-1V309h-1V307h-1V304h-1V305h-1V312h-1V308h-1V304h-1V304h-1V304h-1V307h-1V306h-1V308h-1V305h-1V305h-1V305h-1V312h-1V308h-1V305h-1V305h-1V304h-1V305h-1V307h-1V305h-1V308h-1V308h-1V307h-1V307h-1V305h-1V309h-1V306h-1V305h-1V306h-1V305h-1V305h-1V304h-1V305h-1V308h-1V305h-1V304h-1V309h-1V308h-1V304h-1V305h-1V304h-1V305h-1V308h-1V309h-1V304h-1V305h-1V305h-1V307h-1V311h-1V314h-1V307h-1V308h-1V305h-1V305h-1V305h-1V307h-1V305h-1V304h-1V305h-1V305h-1V305h-1V311h-1V307h-1V313h-1V308h-1V309h-1V310h-1V307h-1V307h-1V309h-1V308h-1V309h-1V304h-1V305h-1V304h-1V304h-1V307h-1V305h-1V308h-1V306h-1V305h-1V304h-1V306h-1V312h-1V305h-1V304h-1V305h-1V305h-1V305h-1V306h-1V306h-1V304h-1V305h-1V305h-1V305h-1V305h-1V307h-1V305h-1V305h-1V305h-1V305h-1V308h-1V305h-1V308h-1V305h-1V306h-1V306h-1V305h-1V307h-1V305h-1V307h-1V305h-1V306h-1V313h-1V308h-1V307h-1V306h-1V305h-1V307h-1V304h-1V304h-1V305h-1V305h-1V308h-1V308h-1V308h-1V307h-1V307h-1V304h-1V306h-1V305h-1V304h-1V308h-1V304h-1V307h-1V304h-1V308h-1V305h-1V307h-1V304h-1V310h-1V309h-1V305h-1V308h-1V311h-1V305h-1V308h-1V308h-1V305h-1V305h-1V306h-1V306h-1V304h-1V305h-1V308h-1V304h-1V306h-1V305h-1V305h-1V307h-1V305h-1V308h-1V306h-1V305h-1V309h-1V305h-1V305h-1V309h-1V305h-1V304h-1V306h-1V304h-1V309h-1V311h-1V306h-1V305h-1V305h-1V305h-1V307h-1V311h-1V307h-1V310h-1V304h-1V306h-1V305h-1V305h-1V304h-1V305h-1V308h-1V305h-1V307h-1V308h-1V304h-1V309h-1V307h-1V305h-1V305h-1V307h-1V304h-1V310h-1V309h-1V310h-1V309h-1V305h-1V304h-1V305h-1V305h-1V309h-1V304h-1V312h-1V308h-1V307h-1V305h-1V306h-1V305h-1V304h-1V306h-1V305h-1V312h-1V304h-1V304h-1V304h-1V310h-1V309h-1V305h-1V308h-1V307h-1V309h-1V305h-1V304h-1V305h-1V304h-1V305h-1V308h-1V305h-1V307h-1V309h-1V305h-1V306h-1V304h-1V305h-1V305h-1V305h-1V310h-1V305h-1V310h-1V307h-1V305h-1V306h-1V305h-1V305h-1V307h-1V306h-1V305h-1V309h-1V305h-1V304h-1V309h-1V305h-1V305h-1V307h-1V306h-1V304h-1V305h-1V307h-1V304h-1V307h-1V308h-1V307h-1V307h-1V305h-1V304h-1V304h-1V305h-1V305h-1V306h-1V308h-1V304h-1V306h-1V304h-1V305h-1V308h-1V305h-1V305h-1V305h-1V312h-1V307h-1V309h-1V310h-1V304h-1V305h-1V304h-1V309h-1V309h-1V309h-1V305h-1V309h-1V305h-1V305h-1V304h-1V309h-1V305h-1V307h-1V308h-1V305h-1V308h-1V310h-1V305h-1V305h-1V304h-1V306h-1V304h-1V309h-1V305h-1V308h-1V306h-1V305h-1V309h-1V305h-1V309h-1V305h-1V305h-1V306h-1V307h-1V304h-1V306h-1V307h-1V305h-1V306h-1V305h-1V305h-1V307h-1V304h-1V307h-1V305h-1V305h-1V305h-1V305h-1V306h-1V305h-1V307h-1V305h-1V304h-1V304h-1V306h-1V307h-1V304h-1V304h-1V305h-1V304h-1V305h-1V306h-1V304h-1V307h-1V307h-1V304h-1V307h-1V305h-1V305h-1V305h-1V305h-1V307h-1V309h-1V306h-1V310h-1V307h-1V308h-1V306h-1V312h-1V305h-1V305h-1V308h-1V306h-1V308h-1V304h-1V305h-1V304h-1V308h-1V307h-1V309h-1V308h-1V304h-1V308h-1V304h-1V305h-1V305h-1V305h-1V309h-1V304h-1V305h-1V304h-1V304h-1V306h-1V307h-1V304h-1V309h-1V306h-1V304h-1V307h-1V309h-1V307h-1V306h-1V307h-1V308h-1V307h-1V309h-1V307h-1V309h-1V310h-1V306h-1V309h-1V305h-1V305h-1V304h-1V304h-1V305h-1V305h-1V307h-1V305h-1V305h-1V306h-1V307h-1V305h-1V306h-1V308h-1V305h-1V313h-1V309h-1V314h-1V309h-1V306h-1V308h-1V304h-1V308h-1V308h-1V306h-1V307h-1V309h-1V304h-1V304h-1V305h-1V312h-1V304h-1V306h-1V305h-1V307h-1V305h-1V305h-1V305h-1V309h-1V305h-1V304h-1V313h-1V305h-1V304h-1V308h-1V313h-1V304h-1V309h-1V306h-1V305h-1V304h-1V305h-1V305h-1V305h-1V311h-1V306h-1V305h-1V308h-1V307h-1V304h-1V307h-1V309h-1V307h-1V309h-1V305h-1V307h-1V307h-1V305h-1V305h-1V304h-1V306h-1V304h-1V305h-1V304h-1V304h-1V309h-1V305h-1V308h-1V314h-1V307h-1V304h-1V304h-1V305h-1V305h-1V305h-1V305h-1V304h-1V304h-1V305h-1V305h-1V308h-1V305h-1V309h-1V304h-1V305h-1V305h-1V308h-1V307h-1V312h-1V305h-1V306h-1V307h-1V304h-1V305h-1V304h-1V304h-1V305h-1V307h-1V305h-1V307h-1V305h-1V305h-1V307h-1V305h-1V306h-1V308h-1V308h-1V307h-1V305h-1V305h-1V306h-1V307h-1V305h-1V304h-1V306h-1V305h-1V305h-1V309h-1V307h-1V307h-1V304h-1V306h-1V308h-1V308h-1V305h-1V306h-1V305h-1V309h-1V309h-1V304h-1V304h-1V304h-1V308h-1V305h-1V305h-1V304h-1V305h-1V305h-1V306h-1V305h-1V310h-1V309h-1V304h-1V305h-1V307h-1V305h-1V304h-1V305h-1V306h-1V305h-1V308h-1V305h-1V305h-1V304h-1V309h-1V305h-1V313h-1V305h-1V305h-1V305h-1V305h-1V305h-1V305h-1V305h-1V309h-1V304h-1V305h-1V308h-1V305h-1V309h-1V309h-1V305h-1V305h-1V308h-1V305h-1V305h-1V309h-1V305h-1V308h-1V306h-1V310h-1V308h-1V308h-1V307h-1V309h-1V306h-1V305h-1V304h-1V310h-1V305h-1V305h-1V304h-1V304h-1V305h-1V305h-1V305h-1V305h-1V308h-1V309h-1V305h-1V308h-1V305h-1V306h-1V309h-1V304h-1V305h-1V306h-1V307h-1V308h-1V305h-1V307h-1V307h-1V307h-1V305h-1V307h-1V305h-1V307h-1V304h-1V304h-1V309h-1V305h-1V304h-1V309h-1V311h-1V305h-1V305h-1V304h-1V306h-1V307h-1V304h-1V307h-1V304h-1V304h-1V307h-1V313h-1V305h-1V306h-1V305h-1V308h-1V304h-1V306h-1V304h-1V306h-1V308h-1V312h-1V312h-1V304h-1V305h-1V306h-1V306h-1V311h-1V305h-1V307h-1V308h-1V305h-1V308h-1V305h-1V308h-1V309h-1V305h-1V306h-1V308h-1V305h-1V309h-1V306h-1V304h-1V304h-1V306h-1V305h-1V304h-1V304h-1V306h-1V304h-1V304h-1V308h-1V306h-1V305h-1V304h-1V305h-1V309h-1V305h-1V306h-1V309h-1V305h-1V308h-1V309h-1V307h-1V308h-1V309h-1V308h-1V310h-1V306h-1V308h-1V305h-1V310h-1V305h-1V306h-1V308h-1V305h-1V305h-1V308h-1V305h-1V306h-1V305h-1V308h-1V304h-1V310h-1V305h-1V309h-1V306h-1V304h-1V308h-1V308h-1V307h-1V306h-1V307h-1V306h-1V314h-1V304h-1V305h-1V305h-1V305h-1V305h-1V305h-1V307h-1V304h-1V305h-1V305h-1V305h-1V308h-1V305h-1V308h-1V304h-1V305h-1V305h-1V306h-1V308h-1V307h-1V304h-1V309h-1V307h-1V309h-1V305h-1V307h-1V308h-1V310h-1V309h-1V305h-1V308h-1V304h-1V305h-1V308h-1V310h-1V305h-1V307h-1V306h-1V305h-1V311h-1V307h-1V305h-1V306h-1V304h-1V305h-1V311h-1V305h-1V307h-1V304h-1V304h-1V306h-1V305h-1V305h-1V305h-1V306h-1V306h-1V305h-1V305h-1V307h-1V304h-1V305h-1V305h-1V309h-1V305h-1V307h-1V305h-1V305h-1V309h-1V305h-1V307h-1V305h-1V307h-1V305h-1V308h-1V304h-1V309h-1V307h-1V304h-1V307h-1V308h-1V304h-1V313h-1V308h-1V305h-1V305h-1V307h-1V309h-1V308h-1V305h-1V309h-1V304h-1V308h-1V305h-1V305h-1V306h-1V304h-1V306h-1V308h-1V306h-1V304h-1V304h-1V305h-1V310h-1V305h-1V308h-1V304h-1V305h-1V315h-1V312h-1V305h-1V305h-1V306h-1V309h-1V306h-1V306h-1V308h-1V309h-1V313h-1V305h-1V305h-1V305h-1V310h-1V309h-1V304h-1V305h-1V304h-1V305h-1V305h-1V305h-1V305h-1V304h-1V308h-1V307h-1V304h-1V305h-1V307h-1V308h-1V305h-1V308h-1V305h-1V307h-1V304h-1V309h-1V308h-1V304h-1V305h-1V305h-1V304h-1V305h-1V306h-1V304h-1V307h-1V308h-1V310h-1V305h-1V310h-1V306h-1V305h-1V305h-1V308h-1V307h-1V305h-1V305h-1V305h-1V308h-1V308h-1V305h-1V305h-1V309h-1V305h-1V309h-1V310h-1V309h-1V306h-1V305h-1V305h-1V309h-1V307h-1V309h-1V305h-1V305h-1V307h-1V311h-1V310h-1V305h-1V307h-1V305h-1V305h-1V305h-1V312h-1V309h-1V306h-1V309h-1V306h-1V309h-1V307h-1V305h-1V306h-1V304h-1V304h-1V308h-1V308h-1V307h-1V307h-1V305h-1V305h-1V304h-1V304h-1V307h-1V309h-1V305h-1V305h-1V309h-1V306h-1V306h-1V304h-1V308h-1V306h-1V305h-1V305h-1V305h-1V304h-1V304h-1V305h-1V305h-1V307h-1V304h-1V304h-1V304h-1V310h-1V305h-1V307h-1V305h-1V304h-1V305h-1V311h-1V305h-1V305h-1V305h-1V304h-1V305h-1V304h-1V304h-1V316h-1V306h-1V309h-1V307h-1V305h-1V306h-1V307h-1V304h-1V305h-1V305h-1V305h-1V305h-1V306h-1V305h-1V304h-1V304h-1V305h-1V305h-1V304h-1V306h-1V305h-1V305h-1V305h-1V305h-1V305h-1V305h-1V308h-1V308h-1V308h-1V311h-1V312h-1Z" fill="#fd9428" shape-rendering="crispEdges"/><path d="M161,211V211h1V212h1V212h1V211h1V212h1V209h1V212h1V211h1V212h1V209h1V212h1V209h1V212h1V212h1V211h1V212h1V211h1V212h1V211h1V211h1V212h1V212h1V212h1V212h1V211h1V212h1V211h1V212h1V210h1V212h1V212h1V212h1V212h1V212h1V210h1V211h1V211h1V211h1V211h1V212h1V211h1V212h1V211h1V211h1V212h1V212h1V211h1V212h1V210h1V211h1V209h1V212h1V211h1V212h1V212h1V211h1V212h1V211h1V212h1V211h1V212h1V212h1V212h1V212h1V212h1V211h1V212h1V210h1V212h1V212h1V211h1V211h1V212h1V209h1V211h1V212h1V212h1V212h1V211h1V211h1V210h1V211h1V212h1V212h1V212h1V210h1V211h1V211h1V212h1V210h1V212h1V212h1V212h1V212h1V210h1V212h1V211h1V212h1V211h1V210h1V211h1V212h1V211h1V210h1V211h1V211h1V209h1V212h1V211h1V212h1V212h1V212h1V212h1V211h1V212h1V212h1V212h1V212h1V212h1V211h1V212h1V212h1V211h1V211h1V212h1V211h1V212h1V211h1V212h1V212h1V211h1V212h1V212h1V209h1V211h1V211h1V212h1V211h1V211h1V212h1V212h1V212h1V212h1V211h1V211h1V212h1V212h1V212h1V211h1V212h1V212h1V211h1V212h1V212h1V212h1V212h1V209h1V211h1V212h1V212h1V211h1V210h1V211h1V210h1V212h1V212h1V211h1V210h1V211h1V212h1V212h1V211h1V211h1V212h1V212h1V212h1V212h1V212h1V212h1V212h1V208h1V212h1V212h1V211h1V212h1V211h1V212h1V211h1V212h1V212h1V211h1V211h1V212h1V212h1V211h1V211h1V212h1V212h1V212h1V211h1V212h1V211h1V212h1V212h1V209h1V212h1V211h1V212h1V212h1V211h1V212h1V212h1V211h1V211h1V211h1V211h1V212h1V212h1V212h1V212h1V212h1V212h1V212h1V212h1V211h1V212h1V212h1V211h1V212h1V210h1V211h1V211h1V211h1V210h1V211h1V212h1V212h1V211h1V212h1V212h1V209h1V212h1V212h1V212h1V211h1V212h1V211h1V210h1V212h1V211h1V212h1V212h1V212h1V212h1V210h1V212h1V211h1V212h1V212h1V212h1V211h1V212h1V212h1V212h1V210h1V211h1V212h1V212h1V212h1V212h1V211h1V212h1V212h1V210h1V212h1V211h1V211h1V212h1V212h1V212h1V211h1V212h1V212h1V211h1V211h1V212h1V212h1V212h1V212h1V212h1V212h1V212h1V211h1V211h1V211h1V211h1V212h1V212h1V211h1V210h1V212h1V212h1V212h1V210h1V211h1V212h1V212h1V212h1V212h1V211h1V212h1V212h1V212h1V210h1V211h1V212h1V211h1V212h1V212h1V211h1V209h1V211h1V212h1V209h1V212h1V211h1V211h1V211h1V212h1V211h1V209h1V210h1V212h1V212h1V211h1V210h1V208h1V212h1V209h1V209h1V212h1V211h1V212h1V212h1V212h1V212h1V211h1V212h1V212h1V212h1V211h1V211h1V209h1V212h1V212h1V211h1V211h1V212h1V212h1V211h1V212h1V212h1V212h1V212h1V212h1V212h1V211h1V212h1V212h1V212h1V211h1V211h1V211h1V211h1V211h1V212h1V211h1V211h1V210h1V212h1V212h1V212h1V212h1V212h1V209h1V212h1V212h1V211h1V211h1V212h1V212h1V211h1V212h1V208h1V211h1V212h1V212h1V212h1V212h1V212h1V209h1V211h1V212h1V211h1V211h1V210h1V212h1V211h1V212h1V212h1V212h1V212h1V212h1V211h1V211h1V212h1V211h1V212h1V212h1V212h1V211h1V211h1V212h1V209h1V212h1V212h1V208h1V212h1V212h1V211h1V212h1V211h1V212h1V212h1V211h1V212h1V211h1V212h1V209h1V212h1V211h1V211h1V212h1V211h1V211h1V212h1V211h1V210h1V212h1V212h1V210h1V212h1V211h1V212h1V211h1V212h1V211h1V211h1V211h1V212h1V212h1V210h1V211h1V211h1V210h1V212h1V212h1V211h1V212h1V212h1V211h1V212h1V212h1V211h1V211h1V211h1V211h1V212h1V211h1V212h1V211h1V212h1V209h1V211h1V212h1V211h1V212h1V211h1V212h1V211h1V212h1V212h1V212h1V209h1V211h1V211h1V211h1V212h1V212h1V211h1V212h1V212h1V211h1V212h1V211h1V212h1V211h1V212h1V211h1V212h1V212h1V212h1V212h1V212h1V211h1V212h1V212h1V212h1V212h1V211h1V212h1V212h1V211h1V212h1V211h1V212h1V211h1V212h1V211h1V212h1V212h1V211h1V212h1V212h1V212h1V212h1V211h1V208h1V211h1V212h1V212h1V211h1V212h1V211h1V211h1V210h1V212h1V212h1V212h1V212h1V212h1V212h1V212h1V212h1V212h1V212h1V211h1V211h1V212h1V211h1V212h1V209h1V211h1V212h1V209h1V211h1V211h1V211h1V212h1V212h1V212h1V211h1V212h1V212h1V212h1V212h1V212h1V211h1V212h1V211h1V212h1V211h1V211h1V212h1V212h1V212h1V212h1V212h1V212h1V211h1V212h1V211h1V211h1V209h1V211h1V211h1V212h1V212h1V212h1V211h1V211h1V212h1V211h1V209h1V211h1V212h1V212h1V209h1V211h1V212h1V212h1V212h1V212h1V210h1V211h1V212h1V211h1V211h1V212h1V211h1V211h1V211h1V209h1V212h1V211h1V212h1V211h1V212h1V209h1V212h1V211h1V212h1V209h1V212h1V212h1V212h1V212h1V211h1V211h1V211h1V212h1V211h1V212h1V211h1V211h1V211h1V212h1V212h1V212h1V212h1V211h1V212h1V211h1V212h1V210h1V212h1V211h1V212h1V211h1V212h1V211h1V212h1V212h1V211h1V211h1V211h1V211h1V212h1V211h1V212h1V211h1V211h1V212h1V211h1V212h1V210h1V210h1V212h1V211h1V212h1V209h1V211h1V212h1V211h1V212h1V212h1V210h1V211h1V211h1V211h1V211h1V211h1V211h1V212h1V211h1V211h1V212h1V211h1V211h1V211h1V212h1V212h1V212h1V211h1V211h1V212h1V212h1V211h1V212h1V211h1V210h1V212h1V212h1V211h1V212h1V212h1V211h1V212h1V212h1V212h1V211h1V212h1V212h1V212h1V212h1V211h1V211h1V211h1V211h1V212h1V211h1V212h1V212h1V211h1V209h1V212h1V211h1V211h1V212h1V211h1V212h1V211h1V212h1V211h1V212h1V212h1V211h1V211h1V212h1V211h1V212h1V212h1V211h1V212h1V211h1V212h1V212h1V212h1V211h1V211h1V209h1V212h1V212h1V212h1V212h1V210h1V212h1V212h1V211h1V211h1V209h1V212h1V212h1V211h1V211h1V211h1V212h1V212h1V211h1V211h1V211h1V212h1V211h1V212h1V211h1V211h1V212h1V211h1V212h1V211h1V211h1V212h1V212h1V211h1V212h1V211h1V212h1V212h1V211h1V212h1V211h1V212h1V211h1V211h1V212h1V212h1V212h1V212h1V211h1V212h1V211h1V212h1V209h1V212h1V211h1V211h1V211h1V211h1V211h1V210h1V209h1V212h1V210h1V211h1V212h1V212h1V211h1V211h1V212h1V212h1V209h1V212h1V211h1V212h1V212h1V212h1V211h1V212h1V211h1V211h1V212h1V212h1V211h1V212h1V211h1V211h1V211h1V211h1V212h1V210h1V212h1V211h1V212h1V212h1V212h1V211h1V212h1V211h1V211h1V212h1V211h1V211h1V211h1V212h1V212h1V209h1V211h1V212h1V212h1V212h1V211h1V212h1V212h1V210h1V212h1V212h1V212h1V211h1V212h1V210h1V212h1V211h1V212h1V212h1V212h1V212h1V211h1V212h1V211h1V211h1V212h1V211h1V211h1V211h1V211h1V212h1V212h1V212h1V212h1V212h1V212h1V210h1V212h1V212h1V212h1V211h1V211h1V209h1V211h1V211h1V211h1V212h1V211h1V212h1V212h1V212h1V211h1V211h1V212h1V211h1V212h1V211h1V211h1V212h1V211h1V212h1V211h1V212h1V212h1V211h1V212h1V211h1V211h1V211h1V212h1V212h1V211h1V212h1V210h1V212h1V212h1V212h1V211h1V212h1V212h1V211h1V212h1V211h1V212h1V212h1V211h1V212h1V211h1V212h1V210h1V212h1V211h1V211h1V212h1V211h1V211h1V211h1V211h1V212h1V212h1V211h1V211h1V211h1V211h1V211h1V212h1V211h1V210h1V212h1V212h1V211h1V212h1V212h1V212h1V211h1V212h1V211h1V212h1V212h1V212h1V211h1V212h1V211h1V211h1V212h1V211h1V210h1V212h1V212h1V212h1V212h1V212h1V210h1V212h1V212h1V212h1V212h1V212h1V211h1V212h1V211h1V212h1V212h1V211h1V212h1V212h1V212h1V211h1V209h1V212h1V211h1V212h1V212h1V211h1V212h1V211h1V212h1V210h1V211h1V212h1V212h1V211h1V212h1V209h1V211h1V212h1V209h1V211h1V212h1V211h1V212h1V211h1V212h1V210h1V212h1V211h1V212h1V211h1V211h1V212h1V211h1V212h1V211h1V212h1V212h1V212h1V212h1V212h1V212h1V211h1V211h1V211h1V212h1V211h1V211h1V212h1V212h1V211h1V212h1V212h1V212h1V212h1V212h1V211h1V209h1V212h1V212h1V212h1V211h1V212h1V212h1V208h1V211h1V211h1V212h1V212h1V212h1V212h1V212h1V211h1V212h1V212h1V212h1V211h1V211h1V211h1V212h1V212h1V212h1V212h1V210h1V211h1V212h1V211h1V212h1V212h1V212h1V211h1V210h1V212h1V211h1V211h1V212h1V211h1V211h1V212h1V212h1V212h1V212h1V211h1V211h1V211h1V211h1V212h1V212h1V210h1V211h1V211h1V211h1V212h1V212h1V212h1V212h1V211h1V211h1V211h1V212h1V210h1V212h1V211h1V212h1V211h1V212h1V212h1V212h1V212h1V212h1V212h1V211h1V211h1V211h1V212h1V212h1V212h1V212h1V211h1V212h1V212h1V211h1V212h1V212h1V212h1V212h1V212h1V212h1V212h1V211h1V212h1V212h1V212h1V210h1V212h1V212h1V211h1V210h1V212h1V212h1V212h1V211h1V211h1V212h1V209h1V210h1V211h1V212h1V212h1V212h1V211h1V211h1V212h1V211h1V212h1V211h1V211h1V212h1V212h1V211h1V211h1V210h1V211h1V212h1V212h1V211h1V211h1V212h1V212h1V211h1V212h1V212h1V209h1V212h1V212h1V211h1V212h1V210h1V212h1V211h1V211h1V211h1V211h1V212h1V212h1V211h1V212h1V211h1V212h1V211h1V212h1V212h1V212h1V212h1V211h1V212h1V211h1V209h1V211h1V212h1V212h1V212h1V210h1V212h1V211h1V212h1V212h1V212h1V212h1V212h1V212h1V212h1V212h1V212h1V212h1V212h1V212h1V210h1V212h1V212h1V212h1V212h1V212h1V211h1V211h1V211h1V211h1V212h1V212h1V212h1V209h1V212h1V212h1V212h1V212h1V212h1V212h1V212h1V211h1V212h1V212h1V211h1V211h1V211h1V211h1V212h1V210h1V211h1V211h1V212h1V211h1V212h1V212h1V212h1V212h1V212h1V212h1V212h1V212h1V211h1V210h1V210h1V210h1V212h1V212h1V211h1V210h1V211h1V212h1V212h1V212h1V212h1V211h1V211h1V211h1V212h1V211h1V212h1V212h1V212h1V211h1V211h1V212h1V211h1V210h1V212h1V212h1V211h1V211h1V210h1V212h1V212h1V211h1V211h1V212h1V211h1V212h1V212h1V211h1V211h1V212h1V212h1V212h1V211h1V211h1V211h1V212h1V212h1V211h1V212h1V212h1V211h1V211h1V212h1V211h1V211h1V212h1V211h1V210h1V212h1V211h1V212h1V211h1V211h1V211h1V211h1V212h1V211h1V211h1V210h1V212h1V212h1V211h1V211h1V211h1V211h1V211h1V212h1V211h1V211h1V212h1V212h1V212h1V211h1V211h1V212h1V212h1V211h1V212h1V212h1V212h1V211h1V211h1V212h1V211h1V211h1V211h1V210h1V211h1V212h1V212h1V212h1V212h1V211h1V211h1V211h1V212h1V212h1V211h1V212h1V212h1V212h1V212h1V212h1V212h1V212h1V212h1V212h1V212h1V212h1V211h1V211h1V212h1V212h1V212h1V211h1V212h1V211h1V210h1V212h1V212h1V211h1V211h1V212h1V212h1V212h1V211h1V295h-1V295h-1V295h-1V295h-1V295h-1V296h-1V296h-1V298h-1V296h-1V296h-1V297h-1V296h-1V296h-1V296h-1V296h-1V298h-1V295h-1V295h-1V295h-1V296h-1V295h-1V295h-1V295h-1V295h-1V296h-1V296h-1V296h-1V296h-1V295h-1V295h-1V298h-1V296h-1V295h-1V295h-1V296h-1V295h-1V295h-1V295h-1V297h-1V295h-1V295h-1V296h-1V295h-1V295h-1V295h-1V295h-1V295h-1V295h-1V295h-1V296h-1V296h-1V296h-1V295h-1V296h-1V296h-1V295h-1V295h-1V295h-1V296h-1V295h-1V295h-1V295h-1V295h-1V295h-1V295h-1V295h-1V295h-1V295h-1V295h-1V296h-1V297h-1V295h-1V295h-1V296h-1V295h-1V296h-1V295h-1V296h-1V295h-1V299h-1V296h-1V296h-1V295h-1V296h-1V296h-1V296h-1V295h-1V296h-1V295h-1V295h-1V295h-1V295h-1V296h-1V295h-1V297h-1V295h-1V295h-1V295h-1V295h-1V295h-1V295h-1V295h-1V295h-1V295h-1V295h-1V296h-1V295h-1V295h-1V296h-1V296h-1V296h-1V295h-1V296h-1V296h-1V295h-1V295h-1V295h-1V297h-1V295h-1V295h-1V295h-1V295h-1V295h-1V295h-1V295h-1V295h-1V296h-1V295h-1V296h-1V295h-1V295h-1V295h-1V296h-1V295h-1V295h-1V295h-1V297h-1V295h-1V296h-1V295h-1V295h-1V295h-1V296h-1V295h-1V295h-1V296h-1V295h-1V295h-1V295h-1V296h-1V295h-1V295h-1V296h-1V295h-1V295h-1V295h-1V295h-1V295h-1V296h-1V296h-1V296h-1V296h-1V296h-1V296h-1V296h-1V295h-1V295h-1V295h-1V295h-1V295h-1V298h-1V295h-1V295h-1V295h-1V298h-1V297h-1V296h-1V297h-1V295h-1V298h-1V295h-1V295h-1V297h-1V296h-1V296h-1V296h-1V296h-1V295h-1V296h-1V296h-1V295h-1V296h-1V297h-1V296h-1V295h-1V295h-1V296h-1V295h-1V295h-1V296h-1V295h-1V295h-1V296h-1V295h-1V296h-1V295h-1V295h-1V295h-1V296h-1V295h-1V298h-1V296h-1V295h-1V295h-1V298h-1V295h-1V296h-1V296h-1V295h-1V295h-1V296h-1V295h-1V297h-1V295h-1V295h-1V295h-1V295h-1V296h-1V298h-1V296h-1V295h-1V295h-1V296h-1V295h-1V295h-1V296h-1V295h-1V296h-1V295h-1V296h-1V297h-1V295h-1V296h-1V299h-1V296h-1V297h-1V296h-1V296h-1V296h-1V295h-1V296h-1V296h-1V295h-1V295h-1V295h-1V296h-1V295h-1V295h-1V295h-1V295h-1V295h-1V295h-1V295h-1V295h-1V297h-1V296h-1V295h-1V295h-1V295h-1V295h-1V296h-1V295h-1V295h-1V295h-1V295h-1V296h-1V295h-1V296h-1V296h-1V296h-1V298h-1V295h-1V295h-1V295h-1V295h-1V296h-1V296h-1V295h-1V295h-1V296h-1V296h-1V295h-1V295h-1V296h-1V295h-1V295h-1V295h-1V295h-1V295h-1V296h-1V296h-1V297h-1V297h-1V298h-1V295h-1V295h-1V296h-1V295h-1V296h-1V296h-1V297h-1V296h-1V295h-1V298h-1V297h-1V296h-1V295h-1V296h-1V296h-1V296h-1V295h-1V296h-1V295h-1V295h-1V295h-1V296h-1V295h-1V295h-1V296h-1V295h-1V295h-1V298h-1V295h-1V295h-1V296h-1V297h-1V295h-1V295h-1V296h-1V295h-1V295h-1V297h-1V296h-1V295h-1V296h-1V297h-1V296h-1V295h-1V295h-1V295h-1V296h-1V296h-1V295h-1V295h-1V296h-1V295h-1V295h-1V295h-1V295h-1V295h-1V295h-1V295h-1V295h-1V295h-1V295h-1V295h-1V296h-1V295h-1V295h-1V295h-1V297h-1V296h-1V295h-1V296h-1V296h-1V295h-1V295h-1V298h-1V295h-1V295h-1V296h-1V297h-1V296h-1V296h-1V296h-1V295h-1V296h-1V295h-1V296h-1V296h-1V296h-1V296h-1V295h-1V295h-1V295h-1V295h-1V295h-1V296h-1V296h-1V295h-1V297h-1V295h-1V295h-1V295h-1V297h-1V296h-1V295h-1V297h-1V295h-1V295h-1V295h-1V296h-1V295h-1V295h-1V295h-1V296h-1V297h-1V295h-1V296h-1V296h-1V296h-1V296h-1V296h-1V296h-1V295h-1V295h-1V295h-1V296h-1V296h-1V295h-1V295h-1V295h-1V296h-1V295h-1V295h-1V296h-1V295h-1V295h-1V296h-1V295h-1V296h-1V296h-1V295h-1V296h-1V295h-1V295h-1V295h-1V295h-1V295h-1V295h-1V296h-1V296h-1V295h-1V295h-1V295h-1V296h-1V296h-1V295h-1V296h-1V295h-1V296h-1V295h-1V296h-1V296h-1V296h-1V295h-1V296h-1V296h-1V295h-1V295h-1V296h-1V295h-1V296h-1V295h-1V296h-1V296h-1V295h-1V295h-1V297h-1V295h-1V295h-1V295h-1V295h-1V296h-1V295h-1V298h-1V299h-1V295h-1V295h-1V296h-1V298h-1V295h-1V296h-1V297h-1V297h-1V296h-1V298h-1V296h-1V296h-1V295h-1V296h-1V295h-1V295h-1V296h-1V295h-1V295h-1V295h-1V295h-1V296h-1V296h-1V296h-1V295h-1V295h-1V295h-1V297h-1V296h-1V295h-1V295h-1V295h-1V296h-1V295h-1V295h-1V295h-1V296h-1V296h-1V296h-1V295h-1V297h-1V295h-1V297h-1V296h-1V295h-1V295h-1V296h-1V297h-1V296h-1V295h-1V295h-1V296h-1V295h-1V295h-1V295h-1V297h-1V296h-1V296h-1V297h-1V295h-1V295h-1V295h-1V297h-1V295h-1V296h-1V295h-1V295h-1V295h-1V296h-1V295h-1V296h-1V296h-1V295h-1V295h-1V295h-1V296h-1V295h-1V296h-1V295h-1V295h-1V296h-1V295h-1V295h-1V295h-1V296h-1V295h-1V295h-1V296h-1V295h-1V295h-1V298h-1V296h-1V295h-1V297h-1V295h-1V296h-1V295h-1V295h-1V296h-1V295h-1V295h-1V295h-1V296h-1V296h-1V296h-1V296h-1V295h-1V296h-1V295h-1V296h-1V295h-1V295h-1V295h-1V295h-1V295h-1V295h-1V298h-1V295h-1V297h-1V296h-1V297h-1V296h-1V296h-1V295h-1V295h-1V295h-1V295h-1V296h-1V295h-1V296h-1V296h-1V295h-1V295h-1V295h-1V295h-1V295h-1V295h-1V296h-1V296h-1V296h-1V295h-1V295h-1V295h-1V295h-1V296h-1V296h-1V295h-1V296h-1V298h-1V296h-1V295h-1V295h-1V298h-1V295h-1V295h-1V295h-1V296h-1V295h-1V295h-1V296h-1V296h-1V295h-1V296h-1V295h-1V297h-1V295h-1V296h-1V295h-1V295h-1V295h-1V295h-1V295h-1V295h-1V295h-1V299h-1V296h-1V295h-1V296h-1V296h-1V296h-1V295h-1V296h-1V295h-1V295h-1V296h-1V296h-1V297h-1V296h-1V295h-1V295h-1V295h-1V296h-1V296h-1V295h-1V295h-1V296h-1V295h-1V298h-1V295h-1V295h-1V295h-1V295h-1V295h-1V298h-1V295h-1V296h-1V295h-1V295h-1V295h-1V295h-1V296h-1V295h-1V296h-1V295h-1V295h-1V295h-1V296h-1V296h-1V296h-1V295h-1V295h-1V295h-1V295h-1V296h-1V295h-1V296h-1V295h-1V295h-1V295h-1V296h-1V295h-1V295h-1V295h-1V296h-1V295h-1V295h-1V295h-1V296h-1V296h-1V295h-1V295h-1V295h-1V295h-1V296h-1V295h-1V296h-1V296h-1V296h-1V295h-1V296h-1V295h-1V295h-1V295h-1V295h-1V295h-1V295h-1V296h-1V295h-1V295h-1V295h-1V295h-1V295h-1V296h-1V298h-1V296h-1V296h-1V296h-1V299h-1V296h-1V296h-1V296h-1V295h-1V295h-1V295h-1V295h-1V296h-1V295h-1V298h-1V297h-1V296h-1V295h-1V296h-1V296h-1V296h-1V295h-1V295h-1V296h-1V295h-1V297h-1V298h-1V295h-1V295h-1V295h-1V296h-1V295h-1V296h-1V296h-1V298h-1V295h-1V298h-1V295h-1V295h-1V296h-1V295h-1V296h-1V295h-1V295h-1V296h-1V295h-1V295h-1V295h-1V296h-1V295h-1V296h-1V296h-1V295h-1V296h-1V296h-1V295h-1V295h-1V295h-1V298h-1V296h-1V295h-1V295h-1V296h-1V295h-1V295h-1V296h-1V295h-1V297h-1V296h-1V295h-1V296h-1V296h-1V295h-1V295h-1V297h-1V295h-1V295h-1V296h-1V296h-1V296h-1V295h-1V296h-1V295h-1V296h-1V295h-1V297h-1V295h-1V295h-1V296h-1V295h-1V296h-1V296h-1V297h-1V295h-1V295h-1V296h-1V295h-1V296h-1V295h-1V295h-1V295h-1V295h-1V296h-1V295h-1V295h-1V296h-1V296h-1V295h-1V295h-1V295h-1V296h-1V295h-1V295h-1V295h-1V295h-1V295h-1V295h-1V295h-1V296h-1V299h-1V296h-1V295h-1V295h-1V295h-1V298h-1V295h-1V295h-1V296h-1V295h-1V295h-1V295h-1V295h-1V295h-1V295h-1V296h-1V295h-1V297h-1V295h-1V295h-1V296h-1V295h-1V296h-1V295h-1V296h-1V296h-1V295h-1V295h-1V295h-1V296h-1V295h-1V296h-1V296h-1V296h-1V295h-1V295h-1V296h-1V295h-1V296h-1V296h-1V295h-1V295h-1V295h-1V295h-1V295h-1V295h-1V296h-1V296h-1V296h-1V295h-1V296h-1V295h-1V295h-1V295h-1V296h-1V296h-1V295h-1V296h-1V296h-1V295h-1V295h-1V298h-1V295h-1V295h-1V296h-1V295h-1V295h-1V295h-1V296h-1V295h-1V295h-1V295h-1V295h-1V297h-1V295h-1V299h-1V296h-1V295h-1V295h-1V295h-1V296h-1V295h-1V298h-1V296h-1V295h-1V295h-1V295h-1V295h-1V295h-1V295h-1V295h-1V296h-1V295h-1V295h-1V295h-1V295h-1V296h-1V296h-1V295h-1V296h-1V296h-1V295h-1V297h-1V296h-1V295h-1V295h-1V296h-1V295h-1V296h-1V296h-1V295h-1V295h-1V295h-1V295h-1V296h-1V295h-1V295h-1V295h-1V295h-1V295h-1V295h-1V298h-1V295h-1V296h-1V298h-1V295h-1V295h-1V296h-1V295h-1V296h-1V296h-1V295h-1V297h-1V295h-1V296h-1V296h-1V295h-1V295h-1V296h-1V296h-1V298h-1V295h-1V295h-1V295h-1V295h-1V299h-1V295h-1V295h-1V295h-1V295h-1V295h-1V295h-1V295h-1V295h-1V296h-1V296h-1V295h-1V296h-1V295h-1V296h-1V296h-1V296h-1V295h-1V297h-1V295h-1V295h-1V296h-1V295h-1V296h-1V296h-1V295h-1V295h-1V296h-1V295h-1V295h-1V297h-1V296h-1V296h-1V296h-1V295h-1V295h-1V296h-1V296h-1V295h-1V295h-1V295h-1V295h-1V296h-1V295h-1V295h-1V296h-1V296h-1V295h-1V296h-1V296h-1V295h-1V295h-1V297h-1V295h-1V296h-1V295h-1V296h-1V296h-1V295h-1V295h-1V296h-1V295h-1V295h-1V296h-1V295h-1V295h-1V295h-1V296h-1V295h-1V295h-1V295h-1V296h-1V296h-1V296h-1V296h-1V296h-1V295h-1V295h-1V295h-1V295h-1V295h-1V296h-1V295h-1V295h-1V296h-1V296h-1V295h-1V295h-1V295h-1V296h-1V295h-1V295h-1V295h-1V298h-1V295h-1V298h-1V295h-1V296h-1V295h-1V295h-1V296h-1V296h-1V295h-1V296h-1V295h-1V295h-1V295h-1V296h-1V298h-1V296h-1V296h-1V296h-1V295h-1V296h-1V295h-1V297h-1V296h-1V295h-1V296h-1V295h-1V295h-1V295h-1V299h-1V296h-1V295h-1V296h-1V297h-1V295h-1V295h-1V295h-1V295h-1V295h-1V295h-1V296h-1V297h-1V299h-1V295h-1V296h-1V296h-1V295h-1V295h-1V295h-1V295h-1V296h-1V295h-1V296h-1V295h-1V298h-1V295h-1V296h-1V296h-1V295h-1V295h-1V296h-1V295h-1V295h-1V296h-1V296h-1V295h-1V298h-1V295h-1V295h-1V296h-1V295h-1V296h-1V295h-1V295h-1V295h-1V296h-1V295h-1V295h-1V295h-1V295h-1V296h-1V296h-1V295h-1V296h-1V295h-1V295h-1V296h-1V296h-1V295h-1V295h-1V295h-1V297h-1V295h-1V299h-1V296h-1V295h-1V295h-1V296h-1V295h-1V296h-1V295h-1V295h-1V295h-1V295h-1V295h-1V295h-1V295h-1V296h-1V295h-1V297h-1V296h-1V295h-1V295h-1V295h-1V295h-1V296h-1V298h-1V296h-1V296h-1V295h-1V295h-1V295h-1V295h-1V295h-1V295h-1V295h-1V296h-1V295h-1V296h-1V295h-1V295h-1V295h-1V295h-1V297h-1V296h-1V296h-1V295h-1V295h-1V296h-1V295h-1V295h-1V295h-1V296h-1V295h-1V295h-1V295h-1V295h-1V295h-1V295h-1V296h-1V295h-1V295h-1V296h-1V295h-1V297h-1V295h-1V295h-1V295h-1V295h-1V296h-1V295h-1V295h-1V295h-1V295h-1V295h-1V295h-1V295h-1V296h-1V296h-1V298h-1V296h-1V296h-1V296h-1V295h-1V296h-1V296h-1V296h-1V296h-1V295h-1V296h-1V296h-1V295h-1V297h-1V295h-1V296h-1V295h-1V295h-1V295h-1V296h-1V295h-1V296h-1V296h-1V296h-1V295h-1V296h-1V296h-1V297h-1V296h-1V295h-1V296h-1V296h-1V296h-1V295h-1V296h-1V296h-1V295h-1V296h-1V297h-1V295h-1V295h-1V296h-1V295h-1V295h-1V296h-1V296h-1V295h-1V295h-1V295h-1V297h-1V297h-1V298h-1V296h-1V295h-1V295h-1V295h-1V295h-1V295h-1V295h-1V295h-1V296h-1V296h-1V295h-1V296h-1V295h-1V295h-1V296h-1V295h-1V296h-1V296h-1V295h-1V296h-1V296h-1V296h-1V295h-1V295h-1V295h-1V295h-1V296h-1V296h-1V295h-1V296h-1V296h-1V295h-1V295h-1V296h-1V296h-1V295h-1V295h-1V296h-1V296h-1V295h-1V295h-1V296h-1V296h-1V296h-1V296h-1V297h-1V295h-1V295h-1V295h-1V295h-1V295h-1V296h-1V295h-1V296h-1V295h-1V295h-1V296h-1V296h-1V296h-1V296h-1V296h-1V296h-1V296h-1V296h-1V295h-1V295h-1V296h-1V296h-1V298h-1V296h-1V295h-1V297h-1V295h-1V297h-1V295h-1V295h-1V296h-1V296h-1V295h-1V295h-1V295h-1V296h-1V295h-1V295h-1V296h-1V296h-1V295h-1V296h-1V297h-1V296h-1V295h-1V296h-1V296h-1V295h-1V295h-1V296h-1V295h-1V295h-1V295h-1V295h-1V296h-1Z" fill="#fdae44" shape-rendering="crispEdges"/></svg>
<svg style="left:0;top:0" width="1894" height="944"><path d="M161,389V389h1V389h1V387h1V389h1V390h1V389h1V389h1V389h1V388h1V386h1V386h1V390h1V389h1V389h1V386h1V389h1V389h1V388h1V386h1V389h1V388h1V386h1V389h1V389h1V389h1V387h1V389h1V390h1V390h1V389h1V389h1V386h1V387h1V386h1V387h1V389h1V389h1V389h1V389h1V381h1V385h1V389h1V389h1V389h1V388h1V387h1V387h1V390h1V389h1V389h1V386h1V389h1V388h1V385h1V390h1V389h1V386h1V389h1V390h1V389h1V386h1V389h1V386h1V390h1V385h1V387h1V388h1V386h1V389h1V390h1V390h1V390h1V387h1V389h1V382h1V388h1V389h1V389h1V389h1V389h1V387h1V388h1V389h1V389h1V387h1V389h1V386h1V389h1V388h1V390h1V390h1V389h1V389h1V389h1V387h1V389h1V383h1V387h1V390h1V386h1V388h1V385h1V390h1V387h1V390h1V389h1V390h1V385h1V386h1V390h1V390h1V385h1V389h1V380h1V390h1V387h1V387h1V388h1V389h1V388h1V389h1V381h1V387h1V389h1V386h1V388h1V386h1V386h1V390h1V389h1V385h1V390h1V389h1V390h1V389h1V389h1V387h1V385h1V389h1V387h1V388h1V383h1V389h1V389h1V385h1V386h1V390h1V389h1V386h1V389h1V389h1V388h1V389h1V387h1V385h1V388h1V387h1V387h1V387h1V386h1V389h1V389h1V389h1V389h1V389h1V388h1V389h1V383h1V387h1V387h1V385h1V389h1V386h1V385h1V388h1V389h1V386h1V388h1V383h1V389h1V389h1V383h1V389h1V386h1V389h1V389h1V390h1V389h1V385h1V389h1V389h1V388h1V390h1V390h1V390h1V390h1V390h1V390h1V386h1V390h1V389h1V388h1V389h1V389h1V390h1V389h1V389h1V390h1V385h1V382h1V390h1V389h1V387h1V389h1V386h1V387h1V388h1V387h1V389h1V389h1V386h1V390h1V390h1V389h1V387h1V383h1V385h1V390h1V389h1V389h1V383h1V389h1V385h1V390h1V389h1V386h1V389h1V389h1V389h1V384h1V389h1V389h1V388h1V389h1V388h1V380h1V389h1V390h1V387h1V387h1V390h1V389h1V389h1V385h1V389h1V389h1V389h1V385h1V385h1V390h1V388h1V389h1V388h1V385h1V385h1V386h1V378h1V389h1V389h1V389h1V389h1V389h1V389h1V386h1V390h1V389h1V390h1V390h1V386h1V389h1V385h1V385h1V389h1V390h1V387h1V390h1V390h1V384h1V387h1V388h1V390h1V388h1V390h1V388h1V388h1V390h1V386h1V389h1V389h1V387h1V385h1V388h1V388h1V388h1V389h1V389h1V384h1V390h1V389h1V383h1V390h1V383h1V388h1V386h1V389h1V387h1V388h1V388h1V388h1V387h1V389h1V389h1V390h1V389h1V385h1V388h1V389h1V390h1V389h1V389h1V388h1V383h1V388h1V388h1V386h1V390h1V389h1V385h1V389h1V387h1V390h1V387h1V385h1V390h1V386h1V389h1V388h1V389h1V390h1V390h1V387h1V387h1V389h1V390h1V389h1V390h1V389h1V386h1V389h1V389h1V389h1V389h1V389h1V386h1V385h1V387h1V381h1V389h1V390h1V388h1V385h1V389h1V381h1V389h1V386h1V389h1V387h1V384h1V388h1V384h1V390h1V386h1V386h1V390h1V389h1V388h1V389h1V389h1V387h1V386h1V389h1V386h1V389h1V386h1V389h1V390h1V390h1V389h1V389h1V390h1V390h1V390h1V390h1V390h1V389h1V389h1V386h1V387h1V389h1V384h1V389h1V389h1V390h1V389h1V389h1V386h1V390h1V386h1V388h1V389h1V384h1V386h1V383h1V387h1V389h1V389h1V389h1V389h1V389h1V390h1V389h1V388h1V387h1V387h1V387h1V389h1V389h1V389h1V385h1V390h1V390h1V389h1V386h1V386h1V389h1V385h1V389h1V389h1V388h1V390h1V389h1V389h1V390h1V386h1V388h1V389h1V389h1V389h1V389h1V389h1V386h1V390h1V389h1V390h1V386h1V390h1V389h1V390h1V389h1V390h1V387h1V390h1V390h1V390h1V386h1V390h1V388h1V388h1V389h1V385h1V390h1V389h1V389h1V387h1V389h1V388h1V389h1V389h1V389h1V390h1V389h1V388h1V389h1V385h1V389h1V388h1V388h1V386h1V389h1V390h1V390h1V389h1V389h1V389h1V389h1V386h1V389h1V389h1V389h1V386h1V389h1V387h1V387h1V388h1V390h1V382h1V389h1V389h1V381h1V389h1V389h1V389h1V389h1V390h1V389h1V387h1V382h1V389h1V389h1V387h1V389h1V389h1V389h1V382h1V385h1V388h1V386h1V385h1V383h1V382h1V385h1V386h1V389h1V389h1V389h1V389h1V387h1V389h1V389h1V389h1V389h1V388h1V389h1V386h1V389h1V387h1V389h1V389h1V389h1V388h1V385h1V389h1V389h1V386h1V387h1V389h1V389h1V387h1V385h1V386h1V387h1V390h1V386h1V390h1V389h1V386h1V389h1V390h1V382h1V385h1V389h1V389h1V385h1V385h1V385h1V390h1V385h1V388h1V386h1V389h1V389h1V389h1V389h1V388h1V386h1V388h1V387h1V388h1V389h1V390h1V387h1V385h1V389h1V389h1V389h1V388h1V387h1V389h1V384h1V389h1V385h1V389h1V386h1V387h1V385h1V389h1V390h1V387h1V389h1V389h1V390h1V385h1V387h1V389h1V387h1V386h1V389h1V389h1V390h1V390h1V378h1V383h1V387h1V390h1V389h1V389h1V382h1V390h1V389h1V388h1V388h1V388h1V390h1V382h1V386h1V388h1V388h1V389h1V380h1V388h1V388h1V387h1V389h1V387h1V383h1V390h1V387h1V390h1V389h1V390h1V388h1V388h1V385h1V389h1V389h1V386h1V389h1V387h1V390h1V380h1V387h1V390h1V384h1V386h1V390h1V389h1V390h1V388h1V381h1V383h1V389h1V385h1V390h1V389h1V389h1V389h1V390h1V389h1V387h1V390h1V389h1V383h1V387h1V388h1V384h1V385h1V390h1V387h1V389h1V388h1V386h1V389h1V389h1V389h1V389h1V389h1V385h1V387h1V389h1V387h1V390h1V389h1V386h1V389h1V389h1V389h1V386h1V386h1V389h1V389h1V387h1V387h1V389h1V390h1V389h1V389h1V388h1V386h1V389h1V385h1V388h1V389h1V390h1V390h1V389h1V385h1V390h1V389h1V389h1V388h1V381h1V387h1V390h1V385h1V390h1V389h1V385h1V386h1V388h1V390h1V390h1V389h1V388h1V389h1V389h1V386h1V382h1V385h1V386h1V388h1V389h1V387h1V388h1V389h1V389h1V389h1V389h1V382h1V389h1V390h1V385h1V389h1V385h1V383h1V389h1V384h1V389h1V387h1V389h1V390h1V389h1V389h1V390h1V388h1V390h1V385h1V389h1V386h1V390h1V390h1V386h1V390h1V387h1V384h1V387h1V386h1V388h1V389h1V389h1V386h1V390h1V386h1V387h1V389h1V389h1V390h1V386h1V389h1V389h1V384h1V386h1V390h1V390h1V389h1V385h1V386h1V390h1V389h1V389h1V390h1V389h1V385h1V388h1V389h1V386h1V386h1V390h1V389h1V390h1V385h1V388h1V385h1V389h1V387h1V388h1V388h1V387h1V386h1V387h1V390h1V386h1V389h1V389h1V390h1V385h1V389h1V389h1V390h1V386h1V388h1V390h1V385h1V387h1V389h1V389h1V390h1V389h1V389h1V385h1V390h1V389h1V389h1V388h1V389h1V388h1V389h1V385h1V389h1V388h1V386h1V389h1V389h1V390h1V387h1V389h1V390h1V387h1V390h1V390h1V389h1V389h1V390h1V387h1V387h1V389h1V390h1V387h1V389h1V387h1V390h1V389h1V388h1V387h1V388h1V390h1V384h1V390h1V384h1V388h1V389h1V390h1V387h1V389h1V389h1V384h1V385h1V389h1V385h1V389h1V389h1V385h1V385h1V380h1V390h1V389h1V388h1V385h1V390h1V390h1V390h1V389h1V390h1V389h1V390h1V389h1V389h1V389h1V382h1V389h1V390h1V387h1V387h1V389h1V385h1V386h1V387h1V385h1V389h1V385h1V389h1V389h1V389h1V389h1V389h1V390h1V379h1V388h1V389h1V385h1V390h1V388h1V390h1V380h1V389h1V379h1V390h1V385h1V390h1V388h1V388h1V384h1V389h1V389h1V387h1V384h1V389h1V390h1V386h1V389h1V389h1V389h1V389h1V386h1V385h1V389h1V390h1V386h1V388h1V389h1V390h1V389h1V389h1V389h1V384h1V389h1V387h1V386h1V385h1V389h1V389h1V389h1V390h1V389h1V387h1V389h1V389h1V385h1V386h1V386h1V387h1V389h1V387h1V389h1V386h1V385h1V385h1V386h1V390h1V388h1V389h1V389h1V390h1V389h1V389h1V385h1V390h1V389h1V385h1V389h1V380h1V388h1V380h1V390h1V389h1V390h1V389h1V388h1V389h1V390h1V390h1V389h1V390h1V388h1V389h1V389h1V382h1V389h1V390h1V389h1V390h1V384h1V389h1V387h1V390h1V389h1V389h1V387h1V386h1V390h1V386h1V386h1V386h1V387h1V388h1V390h1V390h1V389h1V388h1V386h1V386h1V390h1V389h1V389h1V387h1V389h1V388h1V389h1V385h1V390h1V389h1V387h1V387h1V389h1V387h1V383h1V390h1V385h1V389h1V389h1V387h1V389h1V386h1V390h1V389h1V387h1V381h1V385h1V389h1V389h1V386h1V387h1V386h1V389h1V386h1V389h1V390h1V384h1V389h1V387h1V385h1V389h1V389h1V389h1V389h1V386h1V388h1V389h1V387h1V385h1V386h1V389h1V390h1V390h1V388h1V384h1V384h1V389h1V389h1V390h1V389h1V390h1V389h1V379h1V389h1V385h1V385h1V382h1V386h1V388h1V389h1V389h1V386h1V390h1V389h1V389h1V389h1V389h1V386h1V389h1V385h1V390h1V388h1V389h1V385h1V389h1V386h1V390h1V389h1V386h1V389h1V389h1V390h1V389h1V389h1V386h1V390h1V387h1V385h1V390h1V381h1V390h1V389h1V388h1V387h1V389h1V387h1V389h1V389h1V388h1V384h1V389h1V389h1V389h1V387h1V385h1V389h1V389h1V389h1V389h1V390h1V386h1V389h1V382h1V390h1V383h1V388h1V389h1V385h1V390h1V389h1V389h1V389h1V390h1V390h1V387h1V386h1V390h1V387h1V387h1V389h1V386h1V389h1V389h1V387h1V389h1V389h1V388h1V386h1V386h1V389h1V386h1V385h1V388h1V386h1V389h1V389h1V389h1V390h1V389h1V390h1V388h1V385h1V385h1V390h1V389h1V389h1V389h1V387h1V389h1V388h1V385h1V388h1V386h1V383h1V386h1V385h1V390h1V390h1V389h1V389h1V388h1V387h1V390h1V390h1V389h1V385h1V386h1V390h1V385h1V389h1V389h1V390h1V384h1V387h1V389h1V389h1V388h1V386h1V385h1V389h1V387h1V389h1V390h1V389h1V386h1V387h1V389h1V389h1V389h1V388h1V389h1V387h1V390h1V389h1V387h1V389h1V388h1V388h1V388h1V387h1V389h1V386h1V388h1V381h1V389h1V387h1V389h1V390h1V389h1V384h1V390h1V385h1V387h1V388h1V388h1V390h1V388h1V389h1V387h1V390h1V389h1V388h1V390h1V385h1V390h1V385h1V389h1V386h1V390h1V387h1V389h1V388h1V389h1V389h1V384h1V389h1V388h1V389h1V386h1V390h1V385h1V389h1V388h1V388h1V389h1V389h1V389h1V381h1V390h1V389h1V389h1V386h1V388h1V387h1V385h1V387h1V389h1V389h1V387h1V389h1V389h1V390h1V383h1V389h1V389h1V388h1V390h1V390h1V382h1V389h1V385h1V389h1V387h1V389h1V389h1V389h1V389h1V385h1V389h1V389h1V389h1V385h1V389h1V390h1V388h1V390h1V388h1V389h1V390h1V389h1V386h1V389h1V389h1V386h1V390h1V388h1V385h1V389h1V390h1V385h1V387h1V390h1V385h1V389h1V387h1V388h1V386h1V389h1V385h1V390h1V387h1V387h1V387h1V389h1V385h1V387h1V383h1V388h1V386h1V390h1V390h1V390h1V388h1V389h1V390h1V389h1V389h1V389h1V387h1V390h1V388h1V382h1V389h1V389h1V386h1V385h1V390h1V390h1V384h1V386h1V390h1V386h1V385h1V390h1V386h1V384h1V389h1V389h1V389h1V492h-1V493h-1V492h-1V492h-1V492h-1V495h-1V495h-1V495h-1V491h-1V492h-1V494h-1V494h-1V492h-1V492h-1V494h-1V494h-1V495h-1V492h-1V492h-1V492h-1V492h-1V494h-1V491h-1V492h-1V492h-1V493h-1V498h-1V500h-1V492h-1V492h-1V492h-1V491h-1V491h-1V494h-1V495h-1V492h-1V495h-1V495h-1V494h-1V495h-1V492h-1V493h-1V492h-1V491h-1V493h-1V492h-1V491h-1V491h-1V492h-1V496h-1V495h-1V492h-1V492h-1V493h-1V491h-1V491h-1V492h-1V498h-1V495h-1V492h-1V498h-1V493h-1V494h-1V495h-1V491h-1V496h-1V496h-1V494h-1V495h-1V492h-1V496h-1V493h-1V492h-1V493h-1V495h-1V495h-1V494h-1V492h-1V496h-1V494h-1V491h-1V493h-1V496h-1V492h-1V493h-1V496h-1V494h-1V492h-1V495h-1V492h-1V494h-1V495h-1V492h-1V495h-1V492h-1V494h-1V491h-1V496h-1V492h-1V491h-1V495h-1V491h-1V492h-1V492h-1V492h-1V494h-1V491h-1V492h-1V497h-1V491h-1V493h-1V492h-1V494h-1V496h-1V492h-1V492h-1V493h-1V499h-1V492h-1V495h-1V496h-1V491h-1V495h-1V496h-1V494h-1V492h-1V492h-1V497h-1V493h-1V494h-1V492h-1V492h-1V492h-1V492h-1V492h-1V492h-1V496h-1V492h-1V492h-1V496h-1V491h-1V492h-1V492h-1V492h-1V492h-1V492h-1V492h-1V493h-1V496h-1V492h-1V495h-1V494h-1V495h-1V492h-1V491h-1V501h-1V493h-1V496h-1V493h-1V492h-1V492h-1V494h-1V499h-1V495h-1V493h-1V492h-1V492h-1V492h-1V492h-1V492h-1V491h-1V492h-1V491h-1V492h-1V491h-1V495h-1V491h-1V492h-1V491h-1V493h-1V494h-1V492h-1V498h-1V494h-1V492h-1V492h-1V492h-1V496h-1V496h-1V492h-1V492h-1V491h-1V491h-1V497h-1V493h-1V492h-1V492h-1V497h-1V491h-1V495h-1V499h-1V495h-1V491h-1V495h-1V492h-1V492h-1V492h-1V492h-1V494h-1V492h-1V495h-1V495h-1V497h-1V492h-1V501h-1V491h-1V496h-1V491h-1V492h-1V495h-1V496h-1V492h-1V492h-1V492h-1V492h-1V491h-1V496h-1V499h-1V491h-1V496h-1V492h-1V492h-1V492h-1V492h-1V495h-1V494h-1V496h-1V492h-1V495h-1V491h-1V492h-1V492h-1V493h-1V492h-1V497h-1V494h-1V495h-1V494h-1V494h-1V495h-1V492h-1V492h-1V492h-1V492h-1V494h-1V492h-1V492h-1V492h-1V502h-1V494h-1V499h-1V496h-1V492h-1V492h-1V491h-1V491h-1V496h-1V493h-1V495h-1V497h-1V494h-1V492h-1V495h-1V495h-1V492h-1V495h-1V492h-1V491h-1V494h-1V491h-1V491h-1V495h-1V492h-1V492h-1V492h-1V494h-1V500h-1V495h-1V492h-1V497h-1V494h-1V491h-1V492h-1V492h-1V491h-1V491h-1V492h-1V496h-1V496h-1V492h-1V495h-1V495h-1V497h-1V494h-1V495h-1V492h-1V493h-1V492h-1V491h-1V492h-1V492h-1V492h-1V494h-1V492h-1V497h-1V496h-1V496h-1V498h-1V492h-1V491h-1V491h-1V493h-1V492h-1V491h-1V491h-1V491h-1V492h-1V496h-1V496h-1V492h-1V494h-1V499h-1V491h-1V492h-1V492h-1V495h-1V495h-1V492h-1V491h-1V492h-1V492h-1V491h-1V493h-1V492h-1V492h-1V492h-1V493h-1V493h-1V496h-1V496h-1V493h-1V491h-1V495h-1V495h-1V493h-1V491h-1V493h-1V491h-1V496h-1V496h-1V495h-1V492h-1V494h-1V495h-1V491h-1V492h-1V492h-1V492h-1V496h-1V492h-1V492h-1V495h-1V492h-1V495h-1V492h-1V492h-1V492h-1V491h-1V492h-1V494h-1V492h-1V492h-1V492h-1V493h-1V491h-1V492h-1V493h-1V494h-1V493h-1V494h-1V492h-1V492h-1V496h-1V495h-1V492h-1V492h-1V496h-1V493h-1V493h-1V495h-1V491h-1V502h-1V494h-1V493h-1V492h-1V492h-1V495h-1V492h-1V495h-1V496h-1V495h-1V494h-1V495h-1V492h-1V497h-1V499h-1V495h-1V494h-1V491h-1V493h-1V495h-1V493h-1V493h-1V492h-1V493h-1V499h-1V492h-1V492h-1V496h-1V491h-1V495h-1V493h-1V499h-1V498h-1V492h-1V496h-1V494h-1V491h-1V492h-1V493h-1V496h-1V497h-1V492h-1V495h-1V492h-1V494h-1V495h-1V497h-1V491h-1V492h-1V495h-1V496h-1V494h-1V496h-1V492h-1V496h-1V491h-1V495h-1V498h-1V491h-1V492h-1V496h-1V491h-1V494h-1V492h-1V491h-1V493h-1V497h-1V491h-1V492h-1V491h-1V491h-1V492h-1V491h-1V494h-1V494h-1V494h-1V491h-1V492h-1V494h-1V495h-1V491h-1V493h-1V496h-1V495h-1V492h-1V495h-1V491h-1V498h-1V491h-1V492h-1V492h-1V492h-1V491h-1V493h-1V497h-1V495h-1V495h-1V494h-1V495h-1V499h-1V497h-1V491h-1V492h-1V501h-1V494h-1V492h-1V492h-1V491h-1V492h-1V493h-1V491h-1V491h-1V494h-1V494h-1V491h-1V496h-1V493h-1V498h-1V492h-1V494h-1V492h-1V495h-1V492h-1V491h-1V491h-1V492h-1V495h-1V492h-1V491h-1V491h-1V491h-1V491h-1V493h-1V496h-1V491h-1V496h-1V491h-1V492h-1V496h-1V494h-1V496h-1V491h-1V492h-1V491h-1V492h-1V492h-1V495h-1V495h-1V494h-1V493h-1V493h-1V493h-1V492h-1V492h-1V495h-1V492h-1V495h-1V498h-1V492h-1V492h-1V492h-1V491h-1V495h-1V492h-1V492h-1V492h-1V494h-1V491h-1V493h-1V492h-1V492h-1V492h-1V495h-1V492h-1V498h-1V498h-1V492h-1V491h-1V492h-1V492h-1V496h-1V492h-1V492h-1V494h-1V492h-1V492h-1V498h-1V492h-1V496h-1V495h-1V491h-1V498h-1V493h-1V494h-1V493h-1V502h-1V492h-1V492h-1V493h-1V491h-1V493h-1V495h-1V494h-1V491h-1V495h-1V492h-1V492h-1V491h-1V492h-1V496h-1V491h-1V497h-1V492h-1V492h-1V496h-1V492h-1V497h-1V496h-1V503h-1V492h-1V492h-1V496h-1V492h-1V491h-1V491h-1V492h-1V496h-1V492h-1V492h-1V495h-1V491h-1V492h-1V491h-1V494h-1V493h-1V495h-1V491h-1V499h-1V495h-1V492h-1V493h-1V491h-1V492h-1V492h-1V492h-1V492h-1V493h-1V494h-1V492h-1V492h-1V494h-1V492h-1V496h-1V493h-1V496h-1V492h-1V491h-1V496h-1V496h-1V496h-1V492h-1V492h-1V494h-1V495h-1V492h-1V491h-1V491h-1V496h-1V496h-1V493h-1V494h-1V495h-1V493h-1V495h-1V492h-1V492h-1V494h-1V491h-1V491h-1V491h-1V499h-1V495h-1V494h-1V493h-1V496h-1V493h-1V497h-1V491h-1V491h-1V492h-1V492h-1V493h-1V494h-1V495h-1V494h-1V492h-1V492h-1V492h-1V498h-1V491h-1V494h-1V495h-1V496h-1V492h-1V492h-1V492h-1V492h-1V498h-1V495h-1V492h-1V492h-1V493h-1V492h-1V494h-1V492h-1V491h-1V495h-1V492h-1V495h-1V492h-1V495h-1V497h-1V492h-1V500h-1V495h-1V494h-1V492h-1V493h-1V492h-1V493h-1V493h-1V492h-1V495h-1V491h-1V498h-1V494h-1V494h-1V494h-1V494h-1V491h-1V493h-1V492h-1V492h-1V496h-1V491h-1V492h-1V492h-1V492h-1V494h-1V491h-1V499h-1V491h-1V492h-1V491h-1V496h-1V492h-1V493h-1V493h-1V492h-1V492h-1V492h-1V495h-1V499h-1V492h-1V493h-1V492h-1V492h-1V491h-1V491h-1V491h-1V492h-1V494h-1V492h-1V493h-1V493h-1V494h-1V495h-1V492h-1V491h-1V493h-1V492h-1V491h-1V492h-1V495h-1V495h-1V492h-1V492h-1V492h-1V491h-1V492h-1V492h-1V491h-1V495h-1V492h-1V495h-1V491h-1V492h-1V492h-1V495h-1V496h-1V496h-1V492h-1V493h-1V495h-1V491h-1V496h-1V493h-1V495h-1V494h-1V492h-1V493h-1V492h-1V495h-1V493h-1V492h-1V500h-1V495h-1V493h-1V492h-1V493h-1V492h-1V491h-1V491h-1V492h-1V498h-1V491h-1V494h-1V492h-1V492h-1V496h-1V492h-1V491h-1V495h-1V492h-1V492h-1V496h-1V492h-1V494h-1V491h-1V493h-1V494h-1V493h-1V492h-1V495h-1V496h-1V494h-1V492h-1V493h-1V491h-1V495h-1V491h-1V492h-1V495h-1V492h-1V492h-1V493h-1V492h-1V491h-1V491h-1V492h-1V492h-1V493h-1V492h-1V492h-1V498h-1V492h-1V492h-1V494h-1V491h-1V492h-1V497h-1V492h-1V492h-1V495h-1V493h-1V492h-1V492h-1V491h-1V493h-1V492h-1V494h-1V494h-1V494h-1V492h-1V494h-1V494h-1V493h-1V492h-1V494h-1V493h-1V496h-1V496h-1V491h-1V492h-1V491h-1V491h-1V492h-1V492h-1V498h-1V493h-1V492h-1V491h-1V492h-1V492h-1V492h-1V491h-1V494h-1V494h-1V492h-1V492h-1V495h-1V495h-1V498h-1V494h-1V492h-1V493h-1V492h-1V492h-1V492h-1V491h-1V492h-1V492h-1V492h-1V496h-1V491h-1V495h-1V494h-1V493h-1V496h-1V492h-1V491h-1V492h-1V491h-1V493h-1V492h-1V495h-1V496h-1V493h-1V499h-1V492h-1V493h-1V497h-1V491h-1V492h-1V495h-1V495h-1V495h-1V494h-1V495h-1V491h-1V493h-1V495h-1V495h-1V491h-1V492h-1V493h-1V491h-1V491h-1V500h-1V495h-1V494h-1V494h-1V495h-1V493h-1V496h-1V498h-1V495h-1V492h-1V492h-1V494h-1V492h-1V492h-1V492h-1V494h-1V492h-1V493h-1V501h-1V495h-1V492h-1V492h-1V498h-1V496h-1V491h-1V491h-1V492h-1V494h-1V492h-1V491h-1V492h-1V492h-1V491h-1V491h-1V492h-1V493h-1V492h-1V491h-1V492h-1V492h-1V492h-1V492h-1V491h-1V493h-1V492h-1V493h-1V492h-1V492h-1V492h-1V495h-1V492h-1V494h-1V492h-1V492h-1V491h-1V492h-1V494h-1V495h-1V491h-1V493h-1V495h-1V492h-1V496h-1V493h-1V493h-1V491h-1V497h-1V496h-1V491h-1V495h-1V492h-1V491h-1V492h-1V492h-1V492h-1V496h-1V492h-1V493h-1V492h-1V495h-1V492h-1V492h-1V501h-1V492h-1V492h-1V502h-1V496h-1V492h-1V493h-1V491h-1V498h-1V495h-1V495h-1V495h-1V492h-1V494h-1V500h-1V492h-1V491h-1V492h-1V491h-1V495h-1V492h-1V491h-1V492h-1V492h-1V492h-1V492h-1V501h-1V494h-1V492h-1V493h-1V492h-1V494h-1V492h-1V492h-1V491h-1V493h-1V494h-1V492h-1V496h-1V494h-1V496h-1V494h-1V493h-1V495h-1V492h-1V494h-1V492h-1V492h-1V492h-1V492h-1V498h-1V495h-1V492h-1V495h-1V494h-1V496h-1V492h-1V492h-1V491h-1V492h-1V491h-1V496h-1V493h-1V495h-1V492h-1V493h-1V494h-1V496h-1V498h-1V492h-1V492h-1V496h-1V495h-1V491h-1V492h-1V491h-1V493h-1V498h-1V493h-1V492h-1V491h-1V492h-1V496h-1V492h-1V493h-1V495h-1V499h-1V496h-1V492h-1V494h-1V494h-1V494h-1V492h-1V494h-1V494h-1V495h-1V497h-1V492h-1V495h-1V495h-1V494h-1V494h-1V492h-1V499h-1V492h-1V493h-1V492h-1V494h-1V496h-1V493h-1V492h-1V492h-1V496h-1V492h-1V492h-1V492h-1V492h-1V493h-1V494h-1V496h-1V493h-1V496h-1V493h-1V494h-1V492h-1V495h-1V494h-1V491h-1V497h-1V492h-1V494h-1V492h-1V491h-1V495h-1V495h-1V496h-1V491h-1V492h-1V492h-1V491h-1V496h-1V495h-1V492h-1V493h-1V494h-1V492h-1V492h-1V493h-1V492h-1V500h-1V499h-1V491h-1V492h-1V492h-1V493h-1V492h-1V492h-1V493h-1V491h-1V499h-1V492h-1V496h-1V492h-1V491h-1V492h-1V493h-1V492h-1V492h-1V492h-1V491h-1V497h-1V491h-1V494h-1V494h-1V491h-1V493h-1V491h-1V496h-1V492h-1V494h-1V494h-1V492h-1V496h-1V492h-1V496h-1V495h-1V492h-1V492h-1V492h-1V492h-1V492h-1V492h-1V494h-1V491h-1V491h-1V492h-1V492h-1V493h-1V493h-1V491h-1V492h-1V495h-1V495h-1V491h-1V492h-1V494h-1V493h-1V491h-1V494h-1V491h-1V492h-1V492h-1V496h-1V494h-1V492h-1V492h-1V499h-1V492h-1V492h-1V492h-1V491h-1V493h-1V493h-1V492h-1V497h-1V493h-1V491h-1V492h-1V491h-1V495h-1V493h-1V492h-1V495h-1V492h-1V492h-1V496h-1V492h-1V491h-1V493h-1V491h-1V491h-1V491h-1V491h-1V492h-1V492h-1V492h-1V492h-1V496h-1V496h-1V492h-1V495h-1V496h-1V492h-1V492h-1V492h-1V496h-1V496h-1V494h-1V492h-1V492h-1V492h-1V498h-1V493h-1V497h-1V492h-1V492h-1V493h-1V493h-1V495h-1V496h-1V491h-1V493h-1V493h-1V492h-1V492h-1V491h-1V494h-1V491h-1V493h-1V492h-1V492h-1V492h-1V493h-1V492h-1V491h-1V495h-1V492h-1V493h-1V495h-1V491h-1V496h-1V491h-1V491h-1V492h-1V492h-1V495h-1V493h-1V499h-1V492h-1V492h-1V499h-1V492h-1V495h-1V494h-1V492h-1V492h-1V495h-1V492h-1V491h-1V495h-1V494h-1V494h-1V493h-1V492h-1V492h-1V491h-1V492h-1V491h-1V492h-1V495h-1V492h-1V492h-1V493h-1V492h-1V496h-1V491h-1V491h-1V491h-1V492h-1V492h-1V494h-1V491h-1V492h-1V492h-1V491h-1V491h-1V502h-1V491h-1V494h-1V495h-1V491h-1V492h-1V491h-1V492h-1V492h-1V493h-1V494h-1V492h-1V492h-1V496h-1V492h-1V492h-1V496h-1V492h-1V492h-1V492h-1V493h-1V492h-1V496h-1V492h-1V492h-1V496h-1V491h-1V492h-1V495h-1V491h-1V492h-1V492h-1V494h-1V493h-1V495h-1V494h-1V492h-1V492h-1V491h-1V494h-1V493h-1V492h-1V492h-1V493h-1V492h-1V494h-1V492h-1V495h-1V495h-1V492h-1V493h-1V495h-1Z" fill="#fd9428" shape-rendering="crispEdges"/><path d="M161,399V399h1V399h1V399h1V397h1V398h1V398h1V398h1V399h1V399h1V398h1V398h1V399h1V399h1V399h1V399h1V398h1V398h1V396h1V398h1V399h1V397h1V398h1V399h1V399h1V398h1V398h1V399h1V399h1V398h1V399h1V398h1V398h1V399h1V399h1V398h1V399h1V399h1V397h1V397h1V398h1V398h1V399h1V399h1V399h1V399h1V399h1V399h1V399h1V398h1V399h1V398h1V399h1V398h1V398h1V398h1V399h1V399h1V399h1V398h1V399h1V398h1V396h1V396h1V397h1V399h1V398h1V399h1V397h1V399h1V399h1V399h1V398h1V398h1V397h1V397h1V398h1V399h1V398h1V397h1V399h1V398h1V398h1V399h1V398h1V399h1V399h1V398h1V399h1V399h1V397h1V399h1V399h1V398h1V399h1V399h1V399h1V399h1V396h1V398h1V399h1V399h1V399h1V398h1V399h1V396h1V399h1V399h1V398h1V399h1V399h1V399h1V398h1V398h1V397h1V399h1V398h1V399h1V399h1V398h1V397h1V399h1V398h1V399h1V399h1V398h1V399h1V399h1V396h1V399h1V399h1V399h1V399h1V399h1V399h1V399h1V399h1V398h1V398h1V398h1V399h1V398h1V399h1V399h1V398h1V399h1V398h1V399h1V398h1V399h1V399h1V398h1V398h1V397h1V399h1V399h1V399h1V399h1V398h1V398h1V398h1V399h1V399h1V398h1V399h1V399h1V399h1V399h1V399h1V398h1V399h1V399h1V398h1V396h1V399h1V399h1V399h1V398h1V398h1V399h1V399h1V398h1V397h1V399h1V397h1V399h1V399h1V399h1V399h1V398h1V397h1V399h1V399h1V399h1V398h1V398h1V399h1V399h1V398h1V398h1V397h1V399h1V399h1V399h1V399h1V399h1V399h1V399h1V398h1V399h1V398h1V398h1V398h1V398h1V398h1V399h1V399h1V398h1V399h1V398h1V398h1V399h1V399h1V399h1V399h1V399h1V398h1V399h1V397h1V399h1V398h1V399h1V398h1V399h1V397h1V399h1V399h1V397h1V399h1V399h1V398h1V398h1V397h1V399h1V399h1V397h1V399h1V399h1V399h1V397h1V399h1V399h1V397h1V398h1V398h1V399h1V398h1V398h1V399h1V399h1V399h1V399h1V399h1V396h1V399h1V399h1V399h1V397h1V399h1V399h1V398h1V398h1V398h1V399h1V399h1V398h1V398h1V399h1V399h1V399h1V399h1V396h1V399h1V399h1V398h1V398h1V399h1V399h1V396h1V399h1V399h1V399h1V399h1V399h1V399h1V399h1V398h1V398h1V399h1V399h1V398h1V399h1V399h1V399h1V399h1V398h1V399h1V399h1V399h1V399h1V399h1V398h1V399h1V398h1V399h1V399h1V399h1V399h1V398h1V398h1V397h1V399h1V399h1V398h1V399h1V398h1V396h1V399h1V399h1V397h1V399h1V399h1V399h1V399h1V398h1V399h1V398h1V397h1V398h1V398h1V399h1V399h1V399h1V398h1V399h1V399h1V399h1V399h1V399h1V399h1V399h1V398h1V398h1V398h1V399h1V399h1V397h1V399h1V399h1V399h1V397h1V399h1V399h1V399h1V398h1V399h1V399h1V399h1V399h1V397h1V396h1V399h1V399h1V399h1V399h1V396h1V399h1V398h1V399h1V399h1V398h1V399h1V398h1V399h1V398h1V399h1V398h1V399h1V396h1V398h1V399h1V399h1V399h1V399h1V399h1V398h1V398h1V399h1V399h1V399h1V399h1V399h1V399h1V399h1V399h1V399h1V398h1V396h1V399h1V399h1V399h1V399h1V398h1V398h1V399h1V398h1V398h1V399h1V398h1V399h1V399h1V398h1V399h1V398h1V398h1V399h1V399h1V399h1V399h1V399h1V398h1V399h1V399h1V396h1V398h1V398h1V398h1V399h1V399h1V398h1V399h1V398h1V399h1V398h1V398h1V399h1V398h1V398h1V398h1V397h1V399h1V398h1V399h1V399h1V398h1V399h1V397h1V398h1V399h1V399h1V398h1V398h1V398h1V399h1V399h1V398h1V399h1V399h1V399h1V398h1V398h1V398h1V399h1V398h1V399h1V399h1V397h1V398h1V398h1V399h1V399h1V398h1V398h1V399h1V399h1V399h1V398h1V399h1V398h1V398h1V398h1V399h1V398h1V398h1V398h1V399h1V398h1V398h1V399h1V399h1V399h1V396h1V398h1V398h1V397h1V399h1V399h1V395h1V398h1V398h1V398h1V399h1V398h1V397h1V398h1V399h1V399h1V399h1V399h1V399h1V398h1V398h1V398h1V399h1V398h1V399h1V399h1V399h1V398h1V397h1V399h1V398h1V398h1V399h1V398h1V399h1V398h1V398h1V399h1V397h1V399h1V397h1V397h1V399h1V398h1V398h1V398h1V399h1V398h1V398h1V397h1V397h1V398h1V398h1V399h1V398h1V398h1V399h1V398h1V399h1V399h1V399h1V399h1V399h1V399h1V398h1V399h1V399h1V398h1V399h1V398h1V398h1V396h1V399h1V398h1V399h1V399h1V399h1V399h1V399h1V399h1V398h1V398h1V399h1V398h1V399h1V396h1V399h1V399h1V399h1V398h1V399h1V398h1V397h1V399h1V399h1V399h1V399h1V398h1V399h1V399h1V398h1V399h1V399h1V399h1V398h1V397h1V399h1V399h1V398h1V398h1V398h1V398h1V399h1V398h1V399h1V398h1V398h1V399h1V398h1V398h1V399h1V398h1V398h1V399h1V398h1V399h1V399h1V398h1V398h1V399h1V399h1V396h1V399h1V398h1V398h1V399h1V398h1V398h1V398h1V399h1V398h1V399h1V399h1V399h1V399h1V399h1V399h1V399h1V398h1V398h1V396h1V399h1V399h1V399h1V399h1V398h1V399h1V398h1V398h1V398h1V399h1V399h1V399h1V399h1V398h1V399h1V399h1V398h1V397h1V399h1V399h1V399h1V398h1V399h1V398h1V399h1V398h1V399h1V398h1V399h1V399h1V398h1V398h1V399h1V399h1V399h1V398h1V398h1V399h1V398h1V399h1V399h1V397h1V399h1V398h1V399h1V398h1V399h1V399h1V395h1V399h1V398h1V396h1V399h1V399h1V399h1V398h1V399h1V398h1V399h1V399h1V399h1V399h1V399h1V398h1V399h1V398h1V399h1V398h1V399h1V399h1V398h1V396h1V398h1V399h1V399h1V399h1V398h1V399h1V397h1V399h1V399h1V399h1V398h1V399h1V399h1V399h1V397h1V398h1V399h1V398h1V398h1V398h1V399h1V399h1V399h1V399h1V398h1V399h1V399h1V399h1V398h1V399h1V398h1V398h1V398h1V399h1V399h1V398h1V399h1V396h1V398h1V398h1V398h1V398h1V398h1V399h1V399h1V399h1V399h1V398h1V399h1V398h1V397h1V399h1V399h1V399h1V399h1V398h1V399h1V398h1V398h1V399h1V398h1V398h1V397h1V398h1V399h1V398h1V399h1V398h1V399h1V399h1V398h1V398h1V398h1V398h1V398h1V399h1V399h1V398h1V399h1V397h1V398h1V399h1V399h1V398h1V399h1V398h1V398h1V399h1V398h1V398h1V399h1V398h1V399h1V399h1V398h1V399h1V399h1V399h1V398h1V399h1V399h1V398h1V398h1V398h1V398h1V399h1V399h1V398h1V398h1V399h1V398h1V399h1V398h1V398h1V399h1V398h1V397h1V399h1V399h1V399h1V399h1V398h1V398h1V398h1V397h1V399h1V398h1V399h1V396h1V398h1V398h1V399h1V399h1V397h1V399h1V398h1V399h1V399h1V398h1V399h1V399h1V398h1V399h1V398h1V396h1V396h1V399h1V398h1V398h1V398h1V399h1V398h1V399h1V399h1V399h1V399h1V399h1V399h1V399h1V399h1V399h1V399h1V399h1V399h1V398h1V399h1V399h1V399h1V399h1V398h1V399h1V399h1V398h1V398h1V399h1V399h1V397h1V399h1V398h1V399h1V399h1V399h1V398h1V399h1V397h1V399h1V396h1V398h1V399h1V399h1V399h1V398h1V399h1V399h1V399h1V398h1V396h1V398h1V398h1V399h1V399h1V398h1V399h1V399h1V399h1V399h1V399h1V399h1V398h1V399h1V399h1V399h1V398h1V398h1V399h1V398h1V398h1V398h1V398h1V398h1V398h1V398h1V398h1V398h1V399h1V399h1V398h1V399h1V398h1V397h1V399h1V399h1V399h1V399h1V398h1V399h1V398h1V396h1V399h1V399h1V398h1V398h1V399h1V399h1V399h1V398h1V399h1V398h1V397h1V398h1V399h1V399h1V399h1V398h1V399h1V396h1V399h1V399h1V399h1V399h1V398h1V399h1V399h1V399h1V399h1V398h1V399h1V396h1V397h1V399h1V397h1V399h1V399h1V397h1V398h1V399h1V399h1V399h1V399h1V399h1V397h1V398h1V399h1V398h1V398h1V399h1V398h1V398h1V398h1V399h1V399h1V398h1V398h1V396h1V399h1V398h1V399h1V398h1V399h1V398h1V398h1V399h1V399h1V398h1V398h1V399h1V398h1V399h1V399h1V399h1V399h1V399h1V398h1V399h1V399h1V399h1V398h1V398h1V398h1V397h1V399h1V399h1V398h1V399h1V399h1V399h1V398h1V398h1V398h1V399h1V398h1V399h1V398h1V398h1V399h1V398h1V398h1V399h1V399h1V399h1V399h1V399h1V399h1V399h1V398h1V399h1V399h1V399h1V399h1V398h1V397h1V399h1V398h1V399h1V399h1V398h1V398h1V399h1V399h1V399h1V399h1V399h1V398h1V398h1V398h1V399h1V398h1V399h1V399h1V399h1V396h1V398h1V399h1V397h1V399h1V398h1V399h1V399h1V399h1V398h1V398h1V398h1V399h1V399h1V398h1V399h1V399h1V399h1V399h1V399h1V399h1V396h1V399h1V399h1V398h1V398h1V397h1V399h1V398h1V398h1V398h1V399h1V396h1V399h1V399h1V398h1V398h1V398h1V399h1V398h1V398h1V399h1V399h1V399h1V399h1V398h1V398h1V399h1V398h1V399h1V399h1V399h1V398h1V398h1V399h1V398h1V399h1V399h1V399h1V399h1V398h1V399h1V398h1V399h1V399h1V398h1V398h1V399h1V398h1V398h1V399h1V398h1V395h1V399h1V399h1V399h1V399h1V397h1V399h1V398h1V399h1V399h1V399h1V399h1V398h1V399h1V398h1V398h1V399h1V398h1V397h1V399h1V399h1V399h1V399h1V396h1V399h1V397h1V399h1V399h1V398h1V399h1V399h1V399h1V399h1V397h1V399h1V398h1V399h1V396h1V399h1V399h1V399h1V399h1V398h1V398h1V399h1V397h1V398h1V398h1V399h1V397h1V399h1V399h1V398h1V399h1V399h1V399h1V399h1V398h1V398h1V399h1V398h1V398h1V399h1V399h1V399h1V398h1V399h1V398h1V398h1V398h1V398h1V398h1V399h1V398h1V399h1V397h1V399h1V398h1V399h1V395h1V398h1V399h1V397h1V397h1V398h1V399h1V399h1V399h1V399h1V399h1V399h1V398h1V399h1V399h1V399h1V399h1V398h1V399h1V398h1V398h1V398h1V398h1V399h1V398h1V398h1V398h1V398h1V399h1V398h1V399h1V399h1V398h1V398h1V399h1V398h1V398h1V398h1V396h1V399h1V398h1V399h1V398h1V396h1V399h1V398h1V399h1V399h1V399h1V399h1V399h1V398h1V398h1V399h1V399h1V399h1V396h1V399h1V399h1V399h1V399h1V397h1V398h1V398h1V399h1V398h1V399h1V399h1V399h1V398h1V399h1V398h1V398h1V398h1V399h1V398h1V396h1V398h1V399h1V398h1V398h1V399h1V399h1V399h1V398h1V397h1V399h1V397h1V399h1V399h1V398h1V398h1V398h1V399h1V399h1V399h1V399h1V399h1V398h1V399h1V399h1V399h1V399h1V398h1V399h1V399h1V398h1V398h1V399h1V399h1V398h1V399h1V398h1V399h1V399h1V398h1V399h1V398h1V399h1V398h1V399h1V397h1V399h1V399h1V398h1V397h1V398h1V399h1V396h1V398h1V399h1V399h1V399h1V398h1V397h1V399h1V399h1V399h1V396h1V399h1V398h1V398h1V398h1V396h1V398h1V399h1V398h1V399h1V399h1V398h1V399h1V398h1V398h1V398h1V399h1V398h1V399h1V399h1V399h1V399h1V399h1V399h1V399h1V399h1V399h1V399h1V396h1V396h1V399h1V399h1V398h1V398h1V398h1V399h1V397h1V398h1V398h1V399h1V399h1V399h1V399h1V398h1V399h1V399h1V399h1V482h-1V483h-1V482h-1V482h-1V482h-1V482h-1V483h-1V482h-1V483h-1V483h-1V482h-1V483h-1V483h-1V484h-1V482h-1V483h-1V482h-1V482h-1V483h-1V483h-1V482h-1V482h-1V483h-1V483h-1V482h-1V482h-1V483h-1V485h-1V483h-1V482h-1V482h-1V483h-1V483h-1V483h-1V483h-1V483h-1V482h-1V482h-1V482h-1V482h-1V482h-1V483h-1V482h-1V482h-1V482h-1V482h-1V482h-1V482h-1V482h-1V482h-1V483h-1V482h-1V482h-1V482h-1V482h-1V483h-1V482h-1V482h-1V483h-1V482h-1V483h-1V482h-1V483h-1V482h-1V482h-1V483h-1V484h-1V483h-1V482h-1V483h-1V483h-1V483h-1V482h-1V482h-1V482h-1V483h-1V482h-1V483h-1V482h-1V482h-1V482h-1V483h-1V483h-1V483h-1V483h-1V485h-1V483h-1V482h-1V482h-1V482h-1V483h-1V483h-1V482h-1V483h-1V483h-1V482h-1V482h-1V482h-1V482h-1V482h-1V482h-1V484h-1V482h-1V482h-1V486h-1V483h-1V482h-1V482h-1V483h-1V483h-1V482h-1V482h-1V482h-1V483h-1V483h-1V482h-1V483h-1V482h-1V483h-1V482h-1V482h-1V483h-1V482h-1V482h-1V482h-1V483h-1V483h-1V482h-1V483h-1V483h-1V484h-1V482h-1V482h-1V482h-1V485h-1V482h-1V483h-1V483h-1V485h-1V483h-1V482h-1V485h-1V482h-1V483h-1V482h-1V482h-1V483h-1V485h-1V483h-1V482h-1V482h-1V482h-1V482h-1V486h-1V483h-1V482h-1V483h-1V483h-1V482h-1V483h-1V482h-1V483h-1V482h-1V483h-1V483h-1V482h-1V482h-1V483h-1V482h-1V483h-1V483h-1V482h-1V483h-1V482h-1V483h-1V483h-1V482h-1V483h-1V482h-1V482h-1V483h-1V482h-1V483h-1V483h-1V482h-1V483h-1V483h-1V483h-1V482h-1V486h-1V482h-1V482h-1V482h-1V483h-1V482h-1V482h-1V483h-1V482h-1V482h-1V482h-1V483h-1V482h-1V482h-1V482h-1V482h-1V482h-1V486h-1V482h-1V483h-1V483h-1V482h-1V482h-1V482h-1V482h-1V483h-1V482h-1V484h-1V483h-1V483h-1V482h-1V482h-1V482h-1V482h-1V482h-1V483h-1V483h-1V483h-1V482h-1V485h-1V482h-1V482h-1V482h-1V482h-1V485h-1V482h-1V483h-1V483h-1V483h-1V483h-1V483h-1V483h-1V483h-1V483h-1V483h-1V484h-1V485h-1V482h-1V483h-1V482h-1V482h-1V484h-1V482h-1V483h-1V482h-1V482h-1V482h-1V483h-1V482h-1V482h-1V482h-1V482h-1V483h-1V483h-1V483h-1V482h-1V482h-1V483h-1V485h-1V482h-1V482h-1V482h-1V484h-1V482h-1V483h-1V483h-1V483h-1V482h-1V482h-1V482h-1V482h-1V482h-1V482h-1V483h-1V482h-1V483h-1V482h-1V483h-1V483h-1V482h-1V483h-1V482h-1V482h-1V482h-1V483h-1V482h-1V483h-1V482h-1V483h-1V483h-1V482h-1V482h-1V484h-1V482h-1V482h-1V483h-1V483h-1V482h-1V482h-1V482h-1V483h-1V483h-1V482h-1V483h-1V483h-1V482h-1V482h-1V482h-1V482h-1V482h-1V482h-1V483h-1V483h-1V483h-1V483h-1V483h-1V482h-1V482h-1V483h-1V483h-1V482h-1V482h-1V483h-1V483h-1V482h-1V482h-1V482h-1V482h-1V483h-1V482h-1V483h-1V483h-1V482h-1V483h-1V482h-1V482h-1V483h-1V485h-1V485h-1V482h-1V482h-1V483h-1V482h-1V482h-1V483h-1V482h-1V483h-1V482h-1V483h-1V482h-1V482h-1V482h-1V483h-1V482h-1V482h-1V483h-1V482h-1V482h-1V483h-1V482h-1V485h-1V483h-1V483h-1V483h-1V483h-1V483h-1V482h-1V483h-1V483h-1V482h-1V483h-1V482h-1V482h-1V483h-1V483h-1V484h-1V482h-1V482h-1V482h-1V482h-1V482h-1V482h-1V482h-1V482h-1V483h-1V483h-1V483h-1V482h-1V483h-1V482h-1V482h-1V482h-1V482h-1V482h-1V482h-1V483h-1V482h-1V483h-1V483h-1V482h-1V483h-1V482h-1V482h-1V483h-1V483h-1V484h-1V483h-1V482h-1V485h-1V482h-1V483h-1V482h-1V482h-1V483h-1V483h-1V483h-1V483h-1V482h-1V482h-1V482h-1V483h-1V482h-1V482h-1V482h-1V482h-1V482h-1V483h-1V482h-1V482h-1V482h-1V483h-1V482h-1V483h-1V485h-1V482h-1V482h-1V482h-1V484h-1V482h-1V482h-1V483h-1V482h-1V482h-1V482h-1V482h-1V483h-1V483h-1V483h-1V482h-1V482h-1V482h-1V483h-1V483h-1V483h-1V483h-1V483h-1V482h-1V482h-1V482h-1V483h-1V482h-1V484h-1V482h-1V483h-1V485h-1V482h-1V483h-1V482h-1V482h-1V483h-1V483h-1V483h-1V482h-1V483h-1V483h-1V484h-1V484h-1V483h-1V483h-1V482h-1V482h-1V482h-1V483h-1V483h-1V482h-1V483h-1V482h-1V482h-1V482h-1V485h-1V482h-1V482h-1V483h-1V482h-1V483h-1V482h-1V483h-1V482h-1V483h-1V482h-1V482h-1V482h-1V482h-1V483h-1V486h-1V482h-1V482h-1V482h-1V482h-1V483h-1V482h-1V482h-1V483h-1V482h-1V482h-1V483h-1V483h-1V482h-1V482h-1V483h-1V482h-1V482h-1V482h-1V482h-1V482h-1V482h-1V482h-1V482h-1V483h-1V482h-1V482h-1V482h-1V485h-1V482h-1V483h-1V484h-1V484h-1V483h-1V482h-1V485h-1V482h-1V483h-1V482h-1V482h-1V482h-1V482h-1V483h-1V483h-1V483h-1V483h-1V483h-1V482h-1V485h-1V482h-1V482h-1V482h-1V483h-1V484h-1V483h-1V482h-1V483h-1V483h-1V483h-1V482h-1V482h-1V483h-1V483h-1V483h-1V482h-1V484h-1V483h-1V482h-1V482h-1V483h-1V483h-1V486h-1V482h-1V483h-1V484h-1V482h-1V483h-1V482h-1V482h-1V482h-1V483h-1V483h-1V482h-1V482h-1V483h-1V482h-1V482h-1V482h-1V483h-1V483h-1V482h-1V483h-1V482h-1V484h-1V482h-1V485h-1V482h-1V483h-1V483h-1V482h-1V483h-1V483h-1V482h-1V483h-1V482h-1V482h-1V482h-1V483h-1V483h-1V483h-1V485h-1V482h-1V482h-1V483h-1V483h-1V483h-1V482h-1V484h-1V482h-1V482h-1V483h-1V483h-1V482h-1V482h-1V482h-1V483h-1V482h-1V483h-1V484h-1V483h-1V482h-1V482h-1V483h-1V483h-1V482h-1V483h-1V482h-1V483h-1V482h-1V483h-1V482h-1V483h-1V482h-1V482h-1V482h-1V483h-1V482h-1V483h-1V482h-1V482h-1V482h-1V482h-1V482h-1V482h-1V482h-1V482h-1V482h-1V483h-1V482h-1V482h-1V485h-1V484h-1V482h-1V482h-1V483h-1V482h-1V483h-1V482h-1V482h-1V482h-1V482h-1V482h-1V482h-1V483h-1V483h-1V483h-1V483h-1V482h-1V483h-1V486h-1V482h-1V482h-1V483h-1V483h-1V482h-1V483h-1V483h-1V482h-1V483h-1V482h-1V482h-1V482h-1V483h-1V482h-1V483h-1V482h-1V482h-1V482h-1V482h-1V483h-1V482h-1V483h-1V482h-1V482h-1V482h-1V482h-1V483h-1V482h-1V482h-1V482h-1V483h-1V482h-1V482h-1V483h-1V482h-1V483h-1V484h-1V482h-1V482h-1V483h-1V483h-1V482h-1V482h-1V482h-1V483h-1V482h-1V482h-1V482h-1V482h-1V482h-1V483h-1V482h-1V483h-1V482h-1V483h-1V483h-1V483h-1V483h-1V482h-1V482h-1V482h-1V484h-1V482h-1V482h-1V483h-1V483h-1V482h-1V482h-1V482h-1V482h-1V482h-1V483h-1V482h-1V485h-1V483h-1V482h-1V482h-1V482h-1V483h-1V482h-1V482h-1V482h-1V483h-1V484h-1V483h-1V483h-1V485h-1V483h-1V483h-1V482h-1V483h-1V482h-1V483h-1V483h-1V483h-1V483h-1V482h-1V482h-1V482h-1V482h-1V482h-1V483h-1V483h-1V483h-1V482h-1V483h-1V482h-1V483h-1V482h-1V482h-1V482h-1V483h-1V482h-1V482h-1V483h-1V482h-1V483h-1V482h-1V485h-1V483h-1V482h-1V483h-1V482h-1V482h-1V482h-1V482h-1V483h-1V482h-1V483h-1V482h-1V482h-1V482h-1V482h-1V482h-1V483h-1V483h-1V482h-1V482h-1V482h-1V482h-1V485h-1V482h-1V482h-1V482h-1V485h-1V483h-1V482h-1V483h-1V482h-1V482h-1V483h-1V482h-1V483h-1V486h-1V483h-1V482h-1V483h-1V484h-1V482h-1V483h-1V482h-1V482h-1V483h-1V482h-1V482h-1V482h-1V483h-1V482h-1V483h-1V483h-1V482h-1V482h-1V482h-1V482h-1V482h-1V483h-1V482h-1V483h-1V484h-1V482h-1V482h-1V483h-1V483h-1V483h-1V482h-1V482h-1V482h-1V482h-1V483h-1V482h-1V483h-1V483h-1V482h-1V483h-1V482h-1V483h-1V482h-1V484h-1V484h-1V483h-1V482h-1V482h-1V482h-1V482h-1V482h-1V482h-1V483h-1V482h-1V484h-1V482h-1V482h-1V482h-1V483h-1V483h-1V482h-1V482h-1V482h-1V483h-1V483h-1V482h-1V482h-1V484h-1V483h-1V484h-1V483h-1V482h-1V482h-1V483h-1V482h-1V482h-1V482h-1V483h-1V482h-1V483h-1V482h-1V482h-1V483h-1V482h-1V482h-1V483h-1V482h-1V482h-1V483h-1V482h-1V482h-1V482h-1V482h-1V483h-1V483h-1V483h-1V482h-1V483h-1V482h-1V483h-1V482h-1V483h-1V482h-1V482h-1V482h-1V482h-1V482h-1V482h-1V483h-1V482h-1V482h-1V483h-1V482h-1V482h-1V482h-1V482h-1V482h-1V483h-1V482h-1V483h-1V483h-1V485h-1V482h-1V483h-1V482h-1V483h-1V482h-1V483h-1V482h-1V483h-1V482h-1V482h-1V482h-1V483h-1V483h-1V483h-1V482h-1V482h-1V483h-1V483h-1V482h-1V482h-1V482h-1V483h-1V483h-1V482h-1V483h-1V483h-1V482h-1V482h-1V483h-1V484h-1V482h-1V483h-1V482h-1V483h-1V485h-1V482h-1V482h-1V482h-1V482h-1V482h-1V483h-1V482h-1V482h-1V482h-1V483h-1V482h-1V482h-1V482h-1V482h-1V484h-1V485h-1V483h-1V485h-1V482h-1V482h-1V482h-1V484h-1V482h-1V482h-1V482h-1V482h-1V482h-1V482h-1V482h-1V482h-1V482h-1V483h-1V482h-1V482h-1V484h-1V482h-1V485h-1V483h-1V482h-1V482h-1V485h-1V482h-1V482h-1V483h-1V482h-1V483h-1V483h-1V482h-1V482h-1V484h-1V485h-1V484h-1V482h-1V482h-1V483h-1V482h-1V483h-1V482h-1V486h-1V482h-1V483h-1V484h-1V485h-1V483h-1V483h-1V482h-1V482h-1V482h-1V482h-1V483h-1V482h-1V483h-1V482h-1V483h-1V482h-1V483h-1V483h-1V482h-1V484h-1V482h-1V484h-1V482h-1V482h-1V482h-1V483h-1V483h-1V482h-1V482h-1V482h-1V482h-1V482h-1V483h-1V482h-1V484h-1V482h-1V482h-1V483h-1V482h-1V482h-1V485h-1V483h-1V484h-1V484h-1V483h-1V482h-1V483h-1V485h-1V485h-1V482h-1V482h-1V483h-1V482h-1V482h-1V483h-1V484h-1V483h-1V482h-1V482h-1V482h-1V483h-1V483h-1V482h-1V483h-1V483h-1V483h-1V482h-1V483h-1V482h-1V482h-1V482h-1V482h-1V484h-1V482h-1V483h-1V483h-1V482h-1V483h-1V482h-1V482h-1V483h-1V482h-1V482h-1V482h-1V482h-1V483h-1V484h-1V482h-1V482h-1V482h-1V483h-1V483h-1V482h-1V482h-1V482h-1V482h-1V483h-1V483h-1V483h-1V483h-1V483h-1V482h-1V482h-1V483h-1V482h-1V483h-1V483h-1V483h-1V482h-1V482h-1V483h-1V482h-1V483h-1V484h-1V483h-1V482h-1V482h-1V482h-1V483h-1V482h-1V483h-1V482h-1V482h-1V482h-1V483h-1V483h-1V482h-1V483h-1V483h-1V482h-1V482h-1V483h-1V484h-1V482h-1V483h-1V482h-1V485h-1V482h-1V483h-1V482h-1V482h-1V483h-1V483h-1V483h-1V482h-1V482h-1V482h-1V482h-1V483h-1V484h-1V485h-1V482h-1V483h-1V482h-1V482h-1V482h-1V482h-1V482h-1V482h-1V482h-1V482h-1V482h-1V483h-1V483h-1V483h-1V483h-1V482h-1V482h-1V483h-1V482h-1V482h-1V482h-1V482h-1V483h-1V483h-1V485h-1V482h-1V482h-1V483h-1V482h-1V483h-1V482h-1V482h-1V485h-1V482h-1V482h-1V482h-1V485h-1V484h-1V483h-1V482h-1V483h-1V482h-1V483h-1V485h-1V483h-1V482h-1V483h-1V483h-1V482h-1V482h-1V482h-1V484h-1V482h-1V485h-1V482h-1V482h-1V482h-1V482h-1V483h-1V482h-1V483h-1V482h-1V482h-1V483h-1V483h-1V483h-1V482h-1V483h-1V483h-1V482h-1V482h-1V483h-1V483h-1V484h-1V482h-1V482h-1V482h-1V482h-1V485h-1V485h-1V482h-1V483h-1V483h-1V483h-1V483h-1V484h-1V482h-1V482h-1V484h-1V482h-1V482h-1V483h-1V482h-1V483h-1V483h-1V482h-1V482h-1V483h-1V483h-1V482h-1V482h-1V482h-1V483h-1V482h-1V482h-1V483h-1V482h-1V485h-1V482h-1V482h-1V482h-1V482h-1V485h-1V482h-1V482h-1V482h-1V483h-1V482h-1V482h-1V483h-1V483h-1V482h-1V483h-1V482h-1V482h-1V482h-1V482h-1V486h-1V482h-1V482h-1V483h-1V483h-1V482h-1V482h-1V482h-1V482h-1V483h-1V482h-1V482h-1V483h-1V482h-1V482h-1V482h-1V482h-1V482h-1V482h-1V483h-1V482h-1V482h-1V482h-1V483h-1V482h-1V482h-1V483h-1V482h-1V483h-1V483h-1V482h-1V483h-1V482h-1V483h-1V482h-1V482h-1V482h-1V483h-1V483h-1V483h-1V482h-1V482h-1V482h-1V482h-1V483h-1V482h-1V482h-1V483h-1V483h-1V483h-1V484h-1V482h-1V482h-1V482h-1V482h-1V482h-1V484h-1V482h-1V482h-1V483h-1V482h-1V483h-1V483h-1V482h-1V482h-1V482h-1V482h-1V483h-1V483h-1V482h-1V483h-1V482h-1V483h-1V483h-1V482h-1V482h-1V482h-1V483h-1V482h-1V483h-1V482h-1V482h-1V482h-1V482h-1V482h-1V483h-1V482h-1V483h-1Z" fill="#fdae44" shape-rendering="crispEdges"/></svg>
<div style="position:absolute;left:1590px;top:164px;width:1px;height:179px;background:#9a9a9a;"></div>
<div style="position:absolute;left:1590px;top:351px;width:1px;height:179px;background:#9a9a9a;"></div>
<div style="position:absolute;left:1665px;top:164px;width:1px;height:179px;background:#f0c0c8;"></div>
<div style="position:absolute;left:1665px;top:351px;width:1px;height:179px;background:#f0c0c8;"></div>
<div style="position:absolute;left:0px;top:853px;width:1894px;height:21px;background:#f0f0f0;"></div>
<svg style="left:174px;top:857px" width="12" height="13"><polyline points="9,2 4,6.5 9,11" fill="none" stroke="#555" stroke-width="2.6"/></svg>
<div style="position:absolute;left:190px;top:854px;width:1px;height:19px;background:#dcdcdc;"></div>
<div style="position:absolute;left:336px;top:854px;width:1442px;height:19px;background:#cdcdcd;"></div>
<svg style="left:1882px;top:857px" width="12" height="13"><polyline points="3,2 8,6.5 3,11" fill="none" stroke="#555" stroke-width="2.6"/></svg>
<div style="position:absolute;left:0px;top:874px;width:1894px;height:1px;background:#2a2a2a;"></div>
<div style="position:absolute;left:1px;top:875px;width:12px;height:69px;background:#3c3c3c;border-left:1px solid #6a6a6a;border-top:1px solid #5a5a5a;border-right:2px solid #1e1e1e;"></div>
<div style="position:absolute;left:5px;top:879px;width:5px;height:1px;background:#8a8a8a;"></div>
<div style="position:absolute;left:5px;top:880px;width:5px;height:1px;background:#111;"></div>
<div style="position:absolute;left:5px;top:884px;width:5px;height:1px;background:#8a8a8a;"></div>
<div style="position:absolute;left:5px;top:885px;width:5px;height:1px;background:#111;"></div>
<div style="position:absolute;left:5px;top:889px;width:5px;height:1px;background:#8a8a8a;"></div>
<div style="position:absolute;left:5px;top:890px;width:5px;height:1px;background:#111;"></div>
<div style="position:absolute;left:5px;top:894px;width:5px;height:1px;background:#8a8a8a;"></div>
<div style="position:absolute;left:5px;top:895px;width:5px;height:1px;background:#111;"></div>
<div style="position:absolute;left:5px;top:899px;width:5px;height:1px;background:#8a8a8a;"></div>
<div style="position:absolute;left:5px;top:900px;width:5px;height:1px;background:#111;"></div>
<div style="position:absolute;left:5px;top:904px;width:5px;height:1px;background:#8a8a8a;"></div>
<div style="position:absolute;left:5px;top:905px;width:5px;height:1px;background:#111;"></div>
<div style="position:absolute;left:5px;top:909px;width:5px;height:1px;background:#8a8a8a;"></div>
<div style="position:absolute;left:5px;top:910px;width:5px;height:1px;background:#111;"></div>
<div style="position:absolute;left:5px;top:914px;width:5px;height:1px;background:#8a8a8a;"></div>
<div style="position:absolute;left:5px;top:915px;width:5px;height:1px;background:#111;"></div>
<div style="position:absolute;left:5px;top:919px;width:5px;height:1px;background:#8a8a8a;"></div>
<div style="position:absolute;left:5px;top:920px;width:5px;height:1px;background:#111;"></div>
<div style="position:absolute;left:5px;top:924px;width:5px;height:1px;background:#8a8a8a;"></div>
<div style="position:absolute;left:5px;top:925px;width:5px;height:1px;background:#111;"></div>
<div style="position:absolute;left:5px;top:929px;width:5px;height:1px;background:#8a8a8a;"></div>
<div style="position:absolute;left:5px;top:930px;width:5px;height:1px;background:#111;"></div>
<div style="position:absolute;left:5px;top:934px;width:5px;height:1px;background:#8a8a8a;"></div>
<div style="position:absolute;left:5px;top:935px;width:5px;height:1px;background:#111;"></div>
<div style="position:absolute;left:22px;top:888px;white-space:nowrap;font-size:15.5px;color:#e6cba0;">Частота проекта (Гц)</div>
<div style="position:absolute;left:178px;top:884px;width:2px;height:22px;background:#777;"></div>
<div style="position:absolute;left:178px;top:914px;width:2px;height:22px;background:#777;"></div>
<div style="position:absolute;left:186px;top:888px;white-space:nowrap;font-size:15.5px;color:#e6cba0;">Привязать к</div>
<div style="position:absolute;left:22px;top:912px;width:99px;height:28px;background:#fff;border:1px solid #bbb;"></div>
<div style="position:absolute;left:28px;top:915px;white-space:nowrap;font-size:15px;color:#111;">8000</div>
<svg style="left:100px;top:922px" width="14" height="9"><polyline points="1,1 7,7 13,1" fill="none" stroke="#444" stroke-width="1.3"/></svg>
<div style="position:absolute;left:186px;top:912px;width:137px;height:28px;background:#e1e1e1;border:1px solid #c8c8c8;"></div>
<div style="position:absolute;left:191px;top:915px;white-space:nowrap;font-size:15px;color:#111;">Выкл</div>
<svg style="left:302px;top:922px" width="14" height="9"><polyline points="1,1 7,7 13,1" fill="none" stroke="#444" stroke-width="1.3"/></svg>
<div style="position:absolute;left:330px;top:884px;width:2px;height:22px;background:#777;"></div>
<div style="position:absolute;left:330px;top:914px;width:2px;height:22px;background:#777;"></div>
<div style="position:absolute;left:339px;top:887px;white-space:nowrap;font-size:15.5px;color:#e6cba0;">Позиция аудио</div>
<div style="position:absolute;left:531px;top:884px;width:2px;height:22px;background:#777;"></div>
<div style="position:absolute;left:531px;top:914px;width:2px;height:22px;background:#777;"></div>
<div style="position:absolute;left:540px;top:883px;width:375px;height:26px;background:#e1e1e1;"></div>
<div style="position:absolute;left:545px;top:887px;white-space:nowrap;font-size:15px;color:#111;">Начало и конец выделения</div>
<svg style="left:896px;top:893px" width="14" height="9"><polyline points="1,1 7,7 13,1" fill="none" stroke="#444" stroke-width="1.3"/></svg>
<div style="position:absolute;left:339px;top:911px;width:185px;height:28px;background:#bababa;border:2px solid #f4f4f4;border-top-color:#8a8a8a;border-left-color:#8a8a8a;"></div>
<div style="position:absolute;left:343px;top:915px;width:24px;height:20px;background:#a9a9a9;"></div>
<div style="position:absolute;left:384px;top:915px;width:25px;height:20px;background:#a9a9a9;"></div>
<div style="position:absolute;left:430px;top:915px;width:25px;height:20px;background:#a9a9a9;"></div>
<div style="position:absolute;left:459px;top:915px;width:37px;height:20px;background:#a9a9a9;"></div>
<div style="position:absolute;left:344.5px;top:916px;white-space:nowrap;font-size:17px;font-weight:bold;color:#2222c8;transform:scaleX(0.66);transform-origin:0 0;">0</div>
<div style="position:absolute;left:356.5px;top:916px;white-space:nowrap;font-size:17px;font-weight:bold;color:#2222c8;transform:scaleX(0.66);transform-origin:0 0;">0</div>
<div style="position:absolute;left:371.5px;top:916px;white-space:nowrap;font-size:17px;font-weight:bold;color:#2222c8;transform:scaleX(0.66);transform-origin:0 0;">h</div>
<div style="position:absolute;left:385.5px;top:916px;white-space:nowrap;font-size:17px;font-weight:bold;color:#2222c8;transform:scaleX(0.66);transform-origin:0 0;">0</div>
<div style="position:absolute;left:397.5px;top:916px;white-space:nowrap;font-size:17px;font-weight:bold;color:#2222c8;transform:scaleX(0.66);transform-origin:0 0;">0</div>
<div style="position:absolute;left:413.5px;top:916px;white-space:nowrap;font-size:17px;font-weight:bold;color:#2222c8;transform:scaleX(0.66);transform-origin:0 0;">m</div>
<div style="position:absolute;left:432.5px;top:916px;white-space:nowrap;font-size:17px;font-weight:bold;color:#2222c8;transform:scaleX(0.66);transform-origin:0 0;">1</div>
<div style="position:absolute;left:441.5px;top:916px;white-space:nowrap;font-size:17px;font-weight:bold;color:#2222c8;transform:scaleX(0.66);transform-origin:0 0;">7</div>
<div style="position:absolute;left:455.5px;top:916px;white-space:nowrap;font-size:17px;font-weight:bold;color:#2222c8;transform:scaleX(0.66);transform-origin:0 0;">.</div>
<div style="position:absolute;left:460.5px;top:916px;white-space:nowrap;font-size:17px;font-weight:bold;color:#2222c8;transform:scaleX(0.66);transform-origin:0 0;">5</div>
<div style="position:absolute;left:472.5px;top:916px;white-space:nowrap;font-size:17px;font-weight:bold;color:#2222c8;transform:scaleX(0.66);transform-origin:0 0;">6</div>
<div style="position:absolute;left:485.5px;top:916px;white-space:nowrap;font-size:17px;font-weight:bold;color:#2222c8;transform:scaleX(0.66);transform-origin:0 0;">8</div>
<div style="position:absolute;left:499.5px;top:916px;white-space:nowrap;font-size:17px;font-weight:bold;color:#2222c8;transform:scaleX(0.66);transform-origin:0 0;">s</div>
<div style="position:absolute;left:510px;top:914px;width:11px;height:22px;background:#b4b4b4;border-right:2px solid #222;border-bottom:2px solid #222;border-top:1px solid #ddd;"></div>
<svg style="left:510px;top:922px" width="10" height="7"><polygon points="0,1 10,1 5,6" fill="#000"/></svg>
<div style="position:absolute;left:540px;top:911px;width:185px;height:28px;background:#bababa;border:2px solid #f4f4f4;border-top-color:#8a8a8a;border-left-color:#8a8a8a;"></div>
<div style="position:absolute;left:544px;top:915px;width:24px;height:20px;background:#a9a9a9;"></div>
<div style="position:absolute;left:585px;top:915px;width:25px;height:20px;background:#a9a9a9;"></div>
<div style="position:absolute;left:631px;top:915px;width:25px;height:20px;background:#a9a9a9;"></div>
<div style="position:absolute;left:660px;top:915px;width:37px;height:20px;background:#a9a9a9;"></div>
<div style="position:absolute;left:545.5px;top:916px;white-space:nowrap;font-size:17px;font-weight:bold;color:#2222c8;transform:scaleX(0.66);transform-origin:0 0;">0</div>
<div style="position:absolute;left:557.5px;top:916px;white-space:nowrap;font-size:17px;font-weight:bold;color:#2222c8;transform:scaleX(0.66);transform-origin:0 0;">0</div>
<div style="position:absolute;left:572.5px;top:916px;white-space:nowrap;font-size:17px;font-weight:bold;color:#2222c8;transform:scaleX(0.66);transform-origin:0 0;">h</div>
<div style="position:absolute;left:586.5px;top:916px;white-space:nowrap;font-size:17px;font-weight:bold;color:#2222c8;transform:scaleX(0.66);transform-origin:0 0;">0</div>
<div style="position:absolute;left:598.5px;top:916px;white-space:nowrap;font-size:17px;font-weight:bold;color:#2222c8;transform:scaleX(0.66);transform-origin:0 0;">0</div>
<div style="position:absolute;left:614.5px;top:916px;white-space:nowrap;font-size:17px;font-weight:bold;color:#2222c8;transform:scaleX(0.66);transform-origin:0 0;">m</div>
<div style="position:absolute;left:633.5px;top:916px;white-space:nowrap;font-size:17px;font-weight:bold;color:#2222c8;transform:scaleX(0.66);transform-origin:0 0;">0</div>
<div style="position:absolute;left:642.5px;top:916px;white-space:nowrap;font-size:17px;font-weight:bold;color:#2222c8;transform:scaleX(0.66);transform-origin:0 0;">0</div>
<div style="position:absolute;left:656.5px;top:916px;white-space:nowrap;font-size:17px;font-weight:bold;color:#2222c8;transform:scaleX(0.66);transform-origin:0 0;">.</div>
<div style="position:absolute;left:661.5px;top:916px;white-space:nowrap;font-size:17px;font-weight:bold;color:#2222c8;transform:scaleX(0.66);transform-origin:0 0;">0</div>
<div style="position:absolute;left:673.5px;top:916px;white-space:nowrap;font-size:17px;font-weight:bold;color:#2222c8;transform:scaleX(0.66);transform-origin:0 0;">0</div>
<div style="position:absolute;left:686.5px;top:916px;white-space:nowrap;font-size:17px;font-weight:bold;color:#2222c8;transform:scaleX(0.66);transform-origin:0 0;">0</div>
<div style="position:absolute;left:700.5px;top:916px;white-space:nowrap;font-size:17px;font-weight:bold;color:#2222c8;transform:scaleX(0.66);transform-origin:0 0;">s</div>
<div style="position:absolute;left:711px;top:914px;width:11px;height:22px;background:#b4b4b4;border-right:2px solid #222;border-bottom:2px solid #222;border-top:1px solid #ddd;"></div>
<svg style="left:711px;top:922px" width="10" height="7"><polygon points="0,1 10,1 5,6" fill="#000"/></svg>
<div style="position:absolute;left:731px;top:911px;width:185px;height:28px;background:#bababa;border:2px solid #f4f4f4;border-top-color:#8a8a8a;border-left-color:#8a8a8a;"></div>
<div style="position:absolute;left:735px;top:915px;width:24px;height:20px;background:#a9a9a9;"></div>
<div style="position:absolute;left:776px;top:915px;width:25px;height:20px;background:#a9a9a9;"></div>
<div style="position:absolute;left:822px;top:915px;width:25px;height:20px;background:#a9a9a9;"></div>
<div style="position:absolute;left:851px;top:915px;width:37px;height:20px;background:#a9a9a9;"></div>
<div style="position:absolute;left:736.5px;top:916px;white-space:nowrap;font-size:17px;font-weight:bold;color:#2222c8;transform:scaleX(0.66);transform-origin:0 0;">0</div>
<div style="position:absolute;left:748.5px;top:916px;white-space:nowrap;font-size:17px;font-weight:bold;color:#2222c8;transform:scaleX(0.66);transform-origin:0 0;">0</div>
<div style="position:absolute;left:763.5px;top:916px;white-space:nowrap;font-size:17px;font-weight:bold;color:#2222c8;transform:scaleX(0.66);transform-origin:0 0;">h</div>
<div style="position:absolute;left:777.5px;top:916px;white-space:nowrap;font-size:17px;font-weight:bold;color:#2222c8;transform:scaleX(0.66);transform-origin:0 0;">0</div>
<div style="position:absolute;left:789.5px;top:916px;white-space:nowrap;font-size:17px;font-weight:bold;color:#2222c8;transform:scaleX(0.66);transform-origin:0 0;">0</div>
<div style="position:absolute;left:805.5px;top:916px;white-space:nowrap;font-size:17px;font-weight:bold;color:#2222c8;transform:scaleX(0.66);transform-origin:0 0;">m</div>
<div style="position:absolute;left:824.5px;top:916px;white-space:nowrap;font-size:17px;font-weight:bold;color:#2222c8;transform:scaleX(0.66);transform-origin:0 0;">0</div>
<div style="position:absolute;left:833.5px;top:916px;white-space:nowrap;font-size:17px;font-weight:bold;color:#2222c8;transform:scaleX(0.66);transform-origin:0 0;">0</div>
<div style="position:absolute;left:847.5px;top:916px;white-space:nowrap;font-size:17px;font-weight:bold;color:#2222c8;transform:scaleX(0.66);transform-origin:0 0;">.</div>
<div style="position:absolute;left:852.5px;top:916px;white-space:nowrap;font-size:17px;font-weight:bold;color:#2222c8;transform:scaleX(0.66);transform-origin:0 0;">0</div>
<div style="position:absolute;left:864.5px;top:916px;white-space:nowrap;font-size:17px;font-weight:bold;color:#2222c8;transform:scaleX(0.66);transform-origin:0 0;">0</div>
<div style="position:absolute;left:877.5px;top:916px;white-space:nowrap;font-size:17px;font-weight:bold;color:#2222c8;transform:scaleX(0.66);transform-origin:0 0;">0</div>
<div style="position:absolute;left:891.5px;top:916px;white-space:nowrap;font-size:17px;font-weight:bold;color:#2222c8;transform:scaleX(0.66);transform-origin:0 0;">s</div>
<div style="position:absolute;left:902px;top:914px;width:11px;height:22px;background:#b4b4b4;border-right:2px solid #222;border-bottom:2px solid #222;border-top:1px solid #ddd;"></div>
<svg style="left:902px;top:922px" width="10" height="7"><polygon points="0,1 10,1 5,6" fill="#000"/></svg>
<div style="position:absolute;left:333px;top:1px;width:671px;height:897px;box-shadow:0 1px 4px rgba(0,0,0,0.35);"></div>
<div style="position:absolute;left:332px;top:0px;width:670px;height:896px;background:linear-gradient(#a6a6a6 0px,#a6a6a6 884px,#6c6c6c 896px);border-left:1px solid #8c8c8c;"></div>
<div style="position:absolute;left:332px;top:0px;width:670px;height:31px;background:#fff;"></div>
<svg style="left:335px;top:5px" width="20" height="19"><rect x="0.5" y="0.5" width="19" height="18" rx="2" fill="#f4f6f8" stroke="#4a6a8a" stroke-width="1"/><path d="M9,4 Q12,6 9,9 Q8,10 10,11" fill="none" stroke="#e8701a" stroke-width="1.6"/><path d="M5,11 H14 Q13,15 9.5,15 Q6,15 5,11 Z" fill="#7b9ab5"/><path d="M14,12 Q16,12 15,13.5" fill="none" stroke="#7b9ab5" stroke-width="1"/><path d="M4,16.5 Q10,18 15,16.5" fill="none" stroke="#7b9ab5" stroke-width="1"/></svg>
<div style="position:absolute;left:361px;top:7px;white-space:nowrap;font-size:15px;color:#8a8a8a;">Default Output on Default Device</div>
<div style="position:absolute;left:849px;top:14px;width:11px;height:1px;background:#999;"></div>
<div style="position:absolute;left:907px;top:9px;width:12px;height:12px;border:1px solid #dcdcdc;"></div>
<svg style="left:965px;top:8px" width="14" height="14"><line x1="1" y1="1" x2="13" y2="13" stroke="#777" stroke-width="1.1"/><line x1="13" y1="1" x2="1" y2="13" stroke="#777" stroke-width="1.1"/></svg>
<div style="position:absolute;left:333px;top:31px;width:668px;height:11px;background:linear-gradient(#8a8a8a 0px,#c8c8c8 3px,#a8a8a8 10px);"></div>
<div style="position:absolute;left:338px;top:43px;width:164px;height:41px;background:linear-gradient(#bcbcbc 0%,#a9a9a9 50%,#979797 85%,#5a5a5a 93%,#404040 100%);border-right:1px solid #6a6a6a;border-radius:4px 0 0 4px;"></div>
<div style="position:absolute;left:338px;top:49.92px;white-space:nowrap;width:164px;text-align:center;font-size:26px;font-weight:bold;color:#808080;">Tones</div>
<div style="position:absolute;left:502px;top:43px;width:165px;height:41px;background:linear-gradient(#bcbcbc 0%,#a9a9a9 50%,#979797 85%,#5a5a5a 93%,#404040 100%);border-right:1px solid #6a6a6a;border-radius:0 0 0 0;"></div>
<div style="position:absolute;left:502px;top:49.92px;white-space:nowrap;width:165px;text-align:center;font-size:26px;font-weight:bold;color:#808080;">Multitone</div>
<div style="position:absolute;left:667px;top:43px;width:165px;height:41px;background:linear-gradient(#6a6a6a 0px,#a8a8a8 2px,#bfbfbf 5px,#bfbfbf 75%,#e8e8e8 88%,#ffffff 100%);box-shadow:inset 2px 0 2px -1px #555;border-radius:0 0 0 0;"></div>
<div style="position:absolute;left:667px;top:49.92px;white-space:nowrap;width:165px;text-align:center;font-size:26px;font-weight:bold;color:#808080;">Noise</div>
<div style="position:absolute;left:832px;top:43px;width:164px;height:41px;background:linear-gradient(#bcbcbc 0%,#a9a9a9 50%,#979797 85%,#5a5a5a 93%,#404040 100%);border-right:2px solid #5a5a5a;border-radius:0 4px 4px 0;"></div>
<div style="position:absolute;left:832px;top:49.92px;white-space:nowrap;width:164px;text-align:center;font-size:26px;font-weight:bold;color:#808080;">Sweeps</div>
<div style="position:absolute;left:338px;top:122px;width:164px;height:29px;background:linear-gradient(#bcbcbc 0%,#a9a9a9 50%,#979797 85%,#5a5a5a 93%,#404040 100%);border-right:1px solid #6a6a6a;border-radius:4px 0 0 4px;"></div>
<div style="position:absolute;left:338px;top:128.72px;white-space:nowrap;width:164px;text-align:center;font-size:16px;font-weight:normal;color:#808080;">Pink random</div>
<div style="position:absolute;left:502px;top:122px;width:165px;height:29px;background:linear-gradient(#6a6a6a 0px,#a8a8a8 2px,#bfbfbf 5px,#bfbfbf 75%,#e8e8e8 88%,#ffffff 100%);box-shadow:inset 2px 0 2px -1px #555;border-radius:0 0 0 0;"></div>
<div style="position:absolute;left:502px;top:128.72px;white-space:nowrap;width:165px;text-align:center;font-size:16px;font-weight:normal;color:#808080;">White random</div>
<div style="position:absolute;left:667px;top:122px;width:165px;height:29px;background:linear-gradient(#bcbcbc 0%,#a9a9a9 50%,#979797 85%,#5a5a5a 93%,#404040 100%);border-right:1px solid #6a6a6a;border-radius:0 0 0 0;"></div>
<div style="position:absolute;left:667px;top:128.72px;white-space:nowrap;width:165px;text-align:center;font-size:16px;font-weight:normal;color:#808080;">Pink Periodic</div>
<div style="position:absolute;left:832px;top:122px;width:164px;height:29px;background:linear-gradient(#bcbcbc 0%,#a9a9a9 50%,#979797 85%,#5a5a5a 93%,#404040 100%);border-right:2px solid #5a5a5a;border-radius:0 4px 4px 0;"></div>
<div style="position:absolute;left:832px;top:128.72px;white-space:nowrap;width:164px;text-align:center;font-size:16px;font-weight:normal;color:#808080;">White Periodic</div>
<div style="position:absolute;left:337px;top:157px;width:660px;height:223px;background:#808080;border:1px solid #585858;"></div>
<svg style="left:344px;top:169px" width="15" height="15"><defs><radialGradient id="rg351176" cx="0.45" cy="0.35" r="0.7"><stop offset="0" stop-color="#ffffff"/><stop offset="0.6" stop-color="#e4e6ea"/><stop offset="1" stop-color="#a0a4aa"/></radialGradient></defs><circle cx="7" cy="7.4" r="6.6" fill="#2a2a2a" opacity="0.7"/><circle cx="7" cy="7" r="6" fill="url(#rg351176)"/><circle cx="7" cy="7" r="3" fill="#050505"/></svg>
<div style="position:absolute;left:364px;top:168.5px;white-space:nowrap;font-size:16px;color:#e8e8e8;">Full range</div>
<svg style="left:636px;top:169px" width="15" height="15"><defs><radialGradient id="rg643176" cx="0.45" cy="0.35" r="0.7"><stop offset="0" stop-color="#ffffff"/><stop offset="0.6" stop-color="#e4e6ea"/><stop offset="1" stop-color="#a0a4aa"/></radialGradient></defs><circle cx="7" cy="7.4" r="6.6" fill="#2a2a2a" opacity="0.7"/><circle cx="7" cy="7" r="6" fill="url(#rg643176)"/></svg>
<div style="position:absolute;left:656px;top:168.5px;white-space:nowrap;font-size:16px;color:#e8e8e8;">Octave</div>
<svg style="left:636px;top:200px" width="15" height="15"><defs><radialGradient id="rg643207" cx="0.45" cy="0.35" r="0.7"><stop offset="0" stop-color="#ffffff"/><stop offset="0.6" stop-color="#e4e6ea"/><stop offset="1" stop-color="#a0a4aa"/></radialGradient></defs><circle cx="7" cy="7.4" r="6.6" fill="#2a2a2a" opacity="0.7"/><circle cx="7" cy="7" r="6" fill="url(#rg643207)"/></svg>
<div style="position:absolute;left:656px;top:199px;white-space:nowrap;font-size:16px;color:#e8e8e8;">1/3 Octave</div>
<svg style="left:636px;top:229px" width="15" height="15"><defs><radialGradient id="rg643236" cx="0.45" cy="0.35" r="0.7"><stop offset="0" stop-color="#ffffff"/><stop offset="0.6" stop-color="#e4e6ea"/><stop offset="1" stop-color="#a0a4aa"/></radialGradient></defs><circle cx="7" cy="7.4" r="6.6" fill="#2a2a2a" opacity="0.7"/><circle cx="7" cy="7" r="6" fill="url(#rg643236)"/></svg>
<div style="position:absolute;left:656px;top:227px;white-space:nowrap;font-size:16px;color:#e8e8e8;">Custom</div>
<div style="position:absolute;left:636px;top:257px;width:14px;height:14px;background:#d4d4d4;border-radius:2px;box-shadow:0 1px 0 #6a6a6a;"></div>
<div style="position:absolute;left:656px;top:256px;white-space:nowrap;font-size:16px;color:#707070;">Low Cut</div>
<div style="position:absolute;left:636px;top:289px;width:14px;height:14px;background:#d4d4d4;border-radius:2px;box-shadow:0 1px 0 #6a6a6a;"></div>
<div style="position:absolute;left:656px;top:288px;white-space:nowrap;font-size:16px;color:#707070;">High Cut</div>
<div style="position:absolute;left:639px;top:319px;white-space:nowrap;font-size:16px;color:#707070;">Filter type:</div>
<div style="position:absolute;left:783px;top:163px;width:18px;height:27px;background:linear-gradient(#999,#7a7a7a);"></div>
<svg style="left:788px;top:172px" width="8" height="10"><polygon points="6,1 1,5 6,9" fill="#8e8e8e"/></svg>
<div style="position:absolute;left:807px;top:163px;width:122px;height:27px;background:#d9d9d9;"></div>
<div style="position:absolute;left:807px;top:168px;white-space:nowrap;width:122px;text-align:center;font-size:16px;color:#7a7a7a;">1000 Hz</div>
<div style="position:absolute;left:929px;top:163px;width:20px;height:27px;background:linear-gradient(#999,#7a7a7a);"></div>
<svg style="left:934px;top:174px" width="10" height="6"><polygon points="1,1 9,1 5,5" fill="#8e8e8e"/></svg>
<div style="position:absolute;left:954px;top:163px;width:19px;height:27px;background:linear-gradient(#999,#7a7a7a);"></div>
<svg style="left:961px;top:172px" width="8" height="10"><polygon points="1,1 6,5 1,9" fill="#8e8e8e"/></svg>
<div style="position:absolute;left:783px;top:194px;width:18px;height:27px;background:linear-gradient(#999,#7a7a7a);"></div>
<svg style="left:788px;top:203px" width="8" height="10"><polygon points="6,1 1,5 6,9" fill="#8e8e8e"/></svg>
<div style="position:absolute;left:807px;top:194px;width:122px;height:27px;background:#d9d9d9;"></div>
<div style="position:absolute;left:807px;top:199px;white-space:nowrap;width:122px;text-align:center;font-size:16px;color:#7a7a7a;">1000 Hz</div>
<div style="position:absolute;left:929px;top:194px;width:20px;height:27px;background:linear-gradient(#999,#7a7a7a);"></div>
<svg style="left:934px;top:205px" width="10" height="6"><polygon points="1,1 9,1 5,5" fill="#8e8e8e"/></svg>
<div style="position:absolute;left:954px;top:194px;width:19px;height:27px;background:linear-gradient(#999,#7a7a7a);"></div>
<svg style="left:961px;top:203px" width="8" height="10"><polygon points="1,1 6,5 1,9" fill="#8e8e8e"/></svg>
<div style="position:absolute;left:783px;top:250px;width:174px;height:28px;background:#d9d9d9;"></div>
<div style="position:absolute;left:783px;top:256px;white-space:nowrap;width:171px;text-align:right;font-size:16px;color:#7a7a7a;">10</div>
<div style="position:absolute;left:957px;top:250px;width:16px;height:14px;background:linear-gradient(#d0d0d0,#b0b0b0);border-bottom:1px solid #999;"></div>
<div style="position:absolute;left:957px;top:264px;width:16px;height:14px;background:linear-gradient(#a0a0a0,#8a8a8a);"></div>
<svg style="left:961px;top:254px" width="9" height="6"><polygon points="1,5 8,5 4.5,1" fill="#8a8a8a"/></svg>
<div style="position:absolute;left:783px;top:282px;width:174px;height:28px;background:#d9d9d9;"></div>
<div style="position:absolute;left:783px;top:288px;white-space:nowrap;width:171px;text-align:right;font-size:16px;color:#7a7a7a;">20 000</div>
<div style="position:absolute;left:957px;top:282px;width:16px;height:14px;background:linear-gradient(#d0d0d0,#b0b0b0);border-bottom:1px solid #999;"></div>
<div style="position:absolute;left:957px;top:296px;width:16px;height:14px;background:linear-gradient(#a0a0a0,#8a8a8a);"></div>
<svg style="left:961px;top:286px" width="9" height="6"><polygon points="1,5 8,5 4.5,1" fill="#8a8a8a"/></svg>
<div style="position:absolute;left:783px;top:314px;width:170px;height:27px;background:#d9d9d9;"></div>
<div style="position:absolute;left:783px;top:320px;white-space:nowrap;width:167px;text-align:right;font-size:16px;color:#7a7a7a;">BU2</div>
<div style="position:absolute;left:953px;top:314px;width:20px;height:27px;background:linear-gradient(#999,#7a7a7a);"></div>
<svg style="left:958px;top:325px" width="10" height="6"><polygon points="1,1 9,1 5,5" fill="#8e8e8e"/></svg>
<div style="position:absolute;left:337px;top:421px;width:660px;height:122px;border:1px solid #5a5a5a;"></div>
<div style="position:absolute;left:342px;top:426px;width:405px;height:112px;background:#c2c2c2;border:1px solid #777;border-right:none;"></div>
<div style="position:absolute;left:560px;top:431px;white-space:nowrap;width:181px;text-align:right;font-size:16px;color:#111;">RMS</div>
<div style="position:absolute;left:300px;top:446px;white-space:nowrap;width:443px;text-align:right;font-size:64px;font-weight:bold;color:#0a0a0a;letter-spacing:0px;">-12,00 dBFS</div>
<div style="position:absolute;left:560px;top:518px;white-space:nowrap;width:182px;text-align:right;font-size:16px;color:#111;">-3,01 dBFS pk</div>
<div style="position:absolute;left:746px;top:426px;width:21px;height:56px;background:linear-gradient(#bababa,#a0a0a0);border:1px solid #8a8a8a;"></div>
<div style="position:absolute;left:746px;top:482px;width:21px;height:56px;background:linear-gradient(#a8a8a8,#8c8c8c);border:1px solid #8a8a8a;"></div>
<svg style="left:751px;top:448px" width="11" height="7"><polygon points="1,6 10,6 5.5,1" fill="#222"/></svg>
<svg style="left:751px;top:505px" width="11" height="7"><polygon points="1,1 10,1 5.5,6" fill="#222"/></svg>
<svg style="left:773px;top:432px" width="15" height="15"><defs><radialGradient id="rg780439" cx="0.45" cy="0.35" r="0.7"><stop offset="0" stop-color="#ffffff"/><stop offset="0.6" stop-color="#e4e6ea"/><stop offset="1" stop-color="#a0a4aa"/></radialGradient></defs><circle cx="7" cy="7.4" r="6.6" fill="#2a2a2a" opacity="0.7"/><circle cx="7" cy="7" r="6" fill="url(#rg780439)"/></svg>
<div style="position:absolute;left:793px;top:432px;white-space:nowrap;font-size:16px;color:#dcdcdc;">dBu</div>
<svg style="left:773px;top:460px" width="15" height="15"><defs><radialGradient id="rg780467" cx="0.45" cy="0.35" r="0.7"><stop offset="0" stop-color="#ffffff"/><stop offset="0.6" stop-color="#e4e6ea"/><stop offset="1" stop-color="#a0a4aa"/></radialGradient></defs><circle cx="7" cy="7.4" r="6.6" fill="#2a2a2a" opacity="0.7"/><circle cx="7" cy="7" r="6" fill="url(#rg780467)"/></svg>
<div style="position:absolute;left:793px;top:460px;white-space:nowrap;font-size:16px;color:#dcdcdc;">dBV</div>
<svg style="left:773px;top:486px" width="15" height="15"><defs><radialGradient id="rg780493" cx="0.45" cy="0.35" r="0.7"><stop offset="0" stop-color="#ffffff"/><stop offset="0.6" stop-color="#e4e6ea"/><stop offset="1" stop-color="#a0a4aa"/></radialGradient></defs><circle cx="7" cy="7.4" r="6.6" fill="#2a2a2a" opacity="0.7"/><circle cx="7" cy="7" r="6" fill="url(#rg780493)"/></svg>
<div style="position:absolute;left:793px;top:486px;white-space:nowrap;font-size:16px;color:#dcdcdc;">Volts</div>
<svg style="left:773px;top:514px" width="15" height="15"><defs><radialGradient id="rg780521" cx="0.45" cy="0.35" r="0.7"><stop offset="0" stop-color="#ffffff"/><stop offset="0.6" stop-color="#e4e6ea"/><stop offset="1" stop-color="#a0a4aa"/></radialGradient></defs><circle cx="7" cy="7.4" r="6.6" fill="#2a2a2a" opacity="0.7"/><circle cx="7" cy="7" r="6" fill="url(#rg780521)"/><circle cx="7" cy="7" r="3" fill="#050505"/></svg>
<div style="position:absolute;left:793px;top:514px;white-space:nowrap;font-size:16px;color:#dcdcdc;">dBFS</div>
<div style="position:absolute;left:856px;top:428px;width:77px;height:51px;background:linear-gradient(#c8c8c8,#959595);border:1px solid #6a6a6a;border-radius:4px;box-shadow:inset 0 1px 0 #ddd;"></div>
<div style="position:absolute;left:856px;top:432px;white-space:nowrap;width:77px;text-align:center;font-size:16px;line-height:23px;color:#111;">Calibrate<br>level</div>
<div style="position:absolute;left:845px;top:486px;white-space:nowrap;font-size:16px;color:#dcdcdc;">FS sine Vrms</div>
<div style="position:absolute;left:845px;top:507px;width:99px;height:29px;background:#c2c2c2;border:1px solid #8a8a8a;"></div>
<div style="position:absolute;left:845px;top:513px;white-space:nowrap;width:99px;text-align:center;font-size:16px;color:#111;">1,000</div>
<div style="position:absolute;left:338px;top:564px;width:658px;height:150px;background:linear-gradient(#f0f0f0,#b0b0b0);border-radius:4px;border:1px solid #888;"></div>
<div style="position:absolute;left:343px;top:569px;width:649px;height:139px;background:#2a2a2a;border-radius:3px;border-top:1px solid #000;"></div>
<svg style="left:0;top:0" width="1894" height="944"><path d="M344,585V585h1V583h1V583h1V584h1V584h1V584h1V588h1V583h1V585h1V583h1V583h1V582h1V584h1V583h1V583h1V582h1V583h1V583h1V585h1V583h1V584h1V583h1V584h1V583h1V589h1V586h1V584h1V583h1V583h1V590h1V582h1V583h1V583h1V583h1V588h1V583h1V585h1V585h1V584h1V584h1V585h1V589h1V583h1V587h1V587h1V588h1V583h1V585h1V582h1V583h1V585h1V584h1V597h1V588h1V585h1V591h1V585h1V590h1V588h1V589h1V582h1V584h1V583h1V582h1V583h1V585h1V588h1V583h1V584h1V584h1V582h1V584h1V583h1V584h1V582h1V588h1V583h1V583h1V584h1V586h1V583h1V583h1V583h1V585h1V585h1V582h1V583h1V584h1V584h1V584h1V586h1V584h1V584h1V583h1V584h1V583h1V589h1V585h1V583h1V582h1V585h1V583h1V594h1V587h1V583h1V597h1V583h1V583h1V584h1V583h1V585h1V582h1V583h1V585h1V582h1V584h1V584h1V584h1V583h1V588h1V585h1V584h1V584h1V583h1V583h1V583h1V583h1V587h1V584h1V583h1V584h1V583h1V583h1V584h1V583h1V583h1V583h1V582h1V584h1V584h1V583h1V584h1V591h1V584h1V590h1V591h1V586h1V582h1V584h1V589h1V582h1V584h1V589h1V584h1V584h1V585h1V585h1V583h1V584h1V583h1V583h1V584h1V583h1V583h1V585h1V595h1V590h1V582h1V585h1V584h1V585h1V584h1V583h1V584h1V582h1V587h1V585h1V583h1V583h1V585h1V584h1V585h1V585h1V583h1V585h1V583h1V585h1V590h1V584h1V585h1V582h1V582h1V584h1V586h1V589h1V583h1V583h1V589h1V587h1V590h1V588h1V584h1V584h1V585h1V587h1V583h1V588h1V589h1V584h1V583h1V584h1V588h1V596h1V582h1V591h1V583h1V584h1V582h1V584h1V584h1V585h1V584h1V582h1V583h1V583h1V582h1V582h1V585h1V583h1V582h1V583h1V585h1V584h1V584h1V588h1V585h1V584h1V583h1V583h1V585h1V585h1V583h1V584h1V584h1V590h1V585h1V583h1V583h1V584h1V583h1V584h1V584h1V583h1V584h1V586h1V585h1V585h1V590h1V589h1V584h1V583h1V584h1V584h1V583h1V583h1V583h1V583h1V582h1V586h1V584h1V582h1V585h1V589h1V588h1V587h1V589h1V583h1V583h1V583h1V587h1V584h1V589h1V590h1V584h1V582h1V585h1V582h1V584h1V584h1V582h1V587h1V588h1V583h1V589h1V585h1V583h1V585h1V589h1V584h1V585h1V583h1V590h1V585h1V583h1V584h1V583h1V586h1V584h1V589h1V585h1V584h1V583h1V584h1V585h1V584h1V584h1V582h1V584h1V584h1V585h1V585h1V584h1V584h1V582h1V583h1V584h1V583h1V583h1V584h1V585h1V583h1V584h1V584h1V584h1V587h1V583h1V584h1V583h1V582h1V584h1V588h1V583h1V584h1V582h1V584h1V587h1V587h1V591h1V584h1V586h1V584h1V585h1V589h1V591h1V589h1V588h1V582h1V586h1V585h1V582h1V587h1V582h1V583h1V584h1V583h1V584h1V584h1V584h1V583h1V584h1V585h1V583h1V585h1V583h1V589h1V583h1V584h1V585h1V582h1V586h1V583h1V583h1V584h1V583h1V587h1V586h1V583h1V583h1V585h1V584h1V583h1V584h1V583h1V582h1V585h1V584h1V583h1V592h1V582h1V589h1V582h1V584h1V582h1V584h1V583h1V582h1V583h1V589h1V583h1V583h1V585h1V584h1V585h1V590h1V584h1V583h1V585h1V589h1V583h1V583h1V585h1V583h1V582h1V584h1V584h1V583h1V591h1V583h1V584h1V583h1V587h1V583h1V584h1V589h1V583h1V582h1V583h1V584h1V584h1V583h1V585h1V583h1V583h1V589h1V582h1V582h1V584h1V593h1V584h1V585h1V585h1V583h1V586h1V585h1V582h1V585h1V587h1V591h1V584h1V588h1V584h1V584h1V583h1V582h1V587h1V586h1V584h1V582h1V584h1V585h1V582h1V585h1V584h1V583h1V586h1V589h1V584h1V584h1V585h1V583h1V590h1V585h1V585h1V584h1V583h1V583h1V589h1V584h1V585h1V582h1V583h1V588h1V589h1V588h1V585h1V584h1V584h1V585h1V584h1V584h1V586h1V583h1V583h1V585h1V585h1V585h1V595h1V589h1V587h1V582h1V585h1V582h1V582h1V582h1V585h1V585h1V583h1V584h1V585h1V588h1V583h1V591h1V583h1V597h1V583h1V584h1V583h1V584h1V586h1V583h1V585h1V584h1V583h1V585h1V585h1V583h1V583h1V582h1V583h1V589h1V583h1V584h1V584h1V583h1V583h1V589h1V584h1V583h1V583h1V587h1V583h1V585h1V583h1V589h1V583h1V584h1V591h1V584h1V587h1V594h1V585h1V588h1V583h1V585h1V582h1V585h1V585h1V584h1V585h1V583h1V583h1V585h1V585h1V586h1V582h1V584h1V583h1V584h1V583h1V586h1V590h1V591h1V585h1V601h1V584h1V584h1V583h1V585h1V584h1V584h1V583h1V584h1V583h1V582h1V589h1V584h1V586h1V582h1V583h1V584h1V583h1V591h1V583h1V585h1V584h1V583h1V584h1V591h1V584h1V582h1V584h1V583h1V583h1V583h1V587h1V594h1V587h1V588h1V583h1V584h1V588h1V589h1V585h1V582h1V588h1V585h1V593h1V582h1V585h1V584h1V589h1V582h1V585h1V592h1V585h1V584h1V583h1V585h1V591h1V583h1V583h1V588h1V583h1V583h1V584h1V583h1V582h1V692h-1V694h-1V691h-1V692h-1V689h-1V692h-1V689h-1V693h-1V692h-1V671h-1V694h-1V694h-1V695h-1V692h-1V692h-1V691h-1V695h-1V691h-1V691h-1V694h-1V688h-1V694h-1V694h-1V693h-1V685h-1V692h-1V692h-1V689h-1V692h-1V692h-1V694h-1V695h-1V693h-1V692h-1V695h-1V692h-1V691h-1V668h-1V694h-1V692h-1V695h-1V693h-1V689h-1V692h-1V693h-1V691h-1V692h-1V693h-1V692h-1V693h-1V692h-1V689h-1V691h-1V694h-1V695h-1V694h-1V693h-1V695h-1V692h-1V693h-1V691h-1V686h-1V685h-1V692h-1V694h-1V691h-1V694h-1V694h-1V694h-1V685h-1V692h-1V693h-1V693h-1V693h-1V694h-1V693h-1V694h-1V692h-1V688h-1V695h-1V692h-1V693h-1V692h-1V693h-1V687h-1V692h-1V693h-1V692h-1V694h-1V687h-1V694h-1V689h-1V692h-1V691h-1V693h-1V694h-1V692h-1V691h-1V692h-1V694h-1V693h-1V692h-1V691h-1V692h-1V694h-1V692h-1V692h-1V694h-1V694h-1V677h-1V690h-1V692h-1V692h-1V689h-1V693h-1V693h-1V689h-1V692h-1V693h-1V692h-1V690h-1V689h-1V689h-1V688h-1V693h-1V693h-1V692h-1V695h-1V693h-1V687h-1V676h-1V694h-1V692h-1V692h-1V692h-1V687h-1V693h-1V691h-1V693h-1V692h-1V688h-1V692h-1V694h-1V694h-1V690h-1V690h-1V693h-1V694h-1V691h-1V693h-1V693h-1V691h-1V695h-1V692h-1V695h-1V691h-1V689h-1V684h-1V692h-1V688h-1V695h-1V691h-1V692h-1V691h-1V687h-1V692h-1V694h-1V693h-1V694h-1V695h-1V693h-1V694h-1V689h-1V693h-1V686h-1V693h-1V693h-1V693h-1V692h-1V693h-1V694h-1V695h-1V694h-1V694h-1V694h-1V692h-1V694h-1V694h-1V679h-1V692h-1V693h-1V692h-1V694h-1V688h-1V691h-1V694h-1V691h-1V695h-1V693h-1V692h-1V685h-1V692h-1V694h-1V693h-1V692h-1V694h-1V691h-1V691h-1V689h-1V693h-1V691h-1V694h-1V692h-1V695h-1V686h-1V694h-1V694h-1V692h-1V694h-1V691h-1V694h-1V691h-1V689h-1V693h-1V689h-1V693h-1V693h-1V695h-1V688h-1V694h-1V694h-1V692h-1V691h-1V693h-1V693h-1V694h-1V692h-1V695h-1V693h-1V683h-1V694h-1V694h-1V693h-1V694h-1V695h-1V695h-1V694h-1V691h-1V692h-1V687h-1V692h-1V694h-1V693h-1V694h-1V695h-1V694h-1V691h-1V693h-1V691h-1V674h-1V671h-1V692h-1V690h-1V691h-1V693h-1V693h-1V695h-1V691h-1V689h-1V693h-1V678h-1V693h-1V693h-1V695h-1V689h-1V693h-1V691h-1V695h-1V692h-1V692h-1V691h-1V691h-1V692h-1V694h-1V694h-1V690h-1V691h-1V692h-1V692h-1V691h-1V695h-1V675h-1V691h-1V691h-1V695h-1V694h-1V692h-1V687h-1V693h-1V693h-1V692h-1V686h-1V692h-1V692h-1V686h-1V694h-1V694h-1V692h-1V692h-1V695h-1V687h-1V692h-1V691h-1V693h-1V694h-1V692h-1V693h-1V692h-1V694h-1V691h-1V693h-1V692h-1V693h-1V687h-1V693h-1V694h-1V694h-1V692h-1V693h-1V693h-1V677h-1V695h-1V694h-1V693h-1V693h-1V694h-1V691h-1V695h-1V694h-1V693h-1V695h-1V694h-1V694h-1V693h-1V692h-1V695h-1V693h-1V691h-1V691h-1V687h-1V695h-1V693h-1V692h-1V695h-1V691h-1V692h-1V693h-1V695h-1V695h-1V693h-1V694h-1V693h-1V695h-1V694h-1V687h-1V692h-1V695h-1V690h-1V695h-1V694h-1V687h-1V692h-1V693h-1V686h-1V692h-1V695h-1V686h-1V693h-1V689h-1V692h-1V692h-1V694h-1V694h-1V688h-1V691h-1V693h-1V688h-1V693h-1V693h-1V691h-1V693h-1V694h-1V693h-1V683h-1V695h-1V693h-1V694h-1V692h-1V692h-1V694h-1V693h-1V694h-1V688h-1V694h-1V693h-1V692h-1V687h-1V694h-1V692h-1V694h-1V693h-1V694h-1V691h-1V692h-1V693h-1V693h-1V694h-1V692h-1V691h-1V691h-1V691h-1V692h-1V689h-1V693h-1V691h-1V686h-1V688h-1V692h-1V691h-1V691h-1V694h-1V693h-1V694h-1V694h-1V694h-1V692h-1V691h-1V694h-1V693h-1V691h-1V675h-1V694h-1V694h-1V675h-1V688h-1V692h-1V695h-1V693h-1V693h-1V693h-1V695h-1V692h-1V695h-1V689h-1V691h-1V692h-1V686h-1V680h-1V693h-1V674h-1V693h-1V693h-1V691h-1V691h-1V687h-1V684h-1V694h-1V692h-1V692h-1V688h-1V693h-1V693h-1V687h-1V693h-1V693h-1V693h-1V695h-1V692h-1V692h-1V691h-1V687h-1V695h-1V692h-1V692h-1V694h-1V695h-1V692h-1V691h-1V693h-1V692h-1V691h-1V693h-1V690h-1V692h-1V693h-1V693h-1V694h-1V678h-1V691h-1V691h-1V692h-1V692h-1V693h-1V691h-1V690h-1V693h-1V691h-1V691h-1V693h-1V688h-1V694h-1V688h-1V678h-1V691h-1V691h-1V693h-1V694h-1V693h-1V692h-1V691h-1V693h-1V694h-1V689h-1V687h-1V693h-1V693h-1V694h-1V689h-1V694h-1V671h-1V693h-1V693h-1V694h-1V693h-1V691h-1V694h-1V694h-1V693h-1V692h-1V692h-1V691h-1V692h-1V692h-1V693h-1V685h-1V691h-1V693h-1V693h-1V694h-1V691h-1V694h-1V693h-1V693h-1V688h-1V693h-1V692h-1V690h-1V694h-1V692h-1V692h-1V693h-1V693h-1V695h-1V692h-1V693h-1V692h-1V694h-1V692h-1V691h-1V691h-1V694h-1V695h-1V685h-1V691h-1V689h-1V691h-1V681h-1V686h-1V693h-1V693h-1V693h-1V693h-1V691h-1V693h-1V693h-1V693h-1V685h-1V694h-1V692h-1V691h-1V694h-1V692h-1V677h-1V694h-1V693h-1V693h-1V693h-1V683h-1V693h-1V694h-1V692h-1V695h-1V692h-1V695h-1V694h-1V694h-1V693h-1V694h-1V694h-1V678h-1V692h-1V694h-1V693h-1V693h-1V692h-1V687h-1V694h-1V695h-1V683h-1V694h-1V694h-1V687h-1V689h-1V692h-1V691h-1V693h-1V689h-1V688h-1V689h-1V695h-1V693h-1V685h-1V694h-1V689h-1V694h-1V694h-1V692h-1V687h-1V693h-1V692h-1V688h-1V694h-1V691h-1V692h-1V686h-1V694h-1V689h-1Z" fill="#828282" shape-rendering="crispEdges"/></svg>
<div style="position:absolute;left:338px;top:735px;width:329px;height:41px;background:linear-gradient(#5a5a5a 0px,#a8a8a8 2px,#c0c0c0 5px,#c0c0c0 75%,#e8e8e8 90%,#fff 100%);border-radius:4px 0 0 4px;box-shadow:inset 2px 0 2px -1px #555;"></div>
<div style="position:absolute;left:338px;top:740px;white-space:nowrap;width:329px;text-align:center;font-size:26px;font-weight:bold;color:#808080;">Play</div>
<div style="position:absolute;left:667px;top:735px;width:329px;height:41px;background:linear-gradient(#bcbcbc 0%,#a9a9a9 50%,#979797 88%,#4a4a4a 100%);border-radius:0 4px 4px 0;border-left:1px solid #6a6a6a;"></div>
<div style="position:absolute;left:667px;top:740px;white-space:nowrap;width:329px;text-align:center;font-size:26px;font-weight:bold;color:#808080;">Save to file</div>
<div style="position:absolute;left:337px;top:782px;width:660px;height:98px;background:#808080;border:1px solid #5a5a5a;"></div>
<div style="position:absolute;left:656px;top:789.5px;white-space:nowrap;font-size:16px;color:#e8e8e8;">Output</div>
<div style="position:absolute;left:344px;top:820px;width:14px;height:14px;background:#d4d4d4;border-radius:2px;box-shadow:0 1px 0 #6a6a6a;"></div>
<div style="position:absolute;left:364px;top:818.5px;white-space:nowrap;font-size:16px;color:#e8e8e8;">SPL limit (dB):</div>
<div style="position:absolute;left:482px;top:812px;width:117px;height:29px;background:#d9d9d9;"></div>
<div style="position:absolute;left:482px;top:819px;white-space:nowrap;width:114px;text-align:right;font-size:16px;color:#7a7a7a;">100</div>
<div style="position:absolute;left:599px;top:812px;width:16px;height:14px;background:linear-gradient(#d0d0d0,#b0b0b0);"></div>
<div style="position:absolute;left:599px;top:826px;width:16px;height:15px;background:linear-gradient(#a0a0a0,#8a8a8a);"></div>
<svg style="left:603px;top:815px" width="9" height="6"><polygon points="1,5 8,5 4.5,1" fill="#8a8a8a"/></svg>
<div style="position:absolute;left:344px;top:853px;width:14px;height:14px;background:#d4d4d4;border-radius:2px;box-shadow:0 1px 0 #6a6a6a;"></div>
<svg style="left:344px;top:853px" width="14" height="14"><polyline points="3,7 6,11 11,2" fill="none" stroke="#111" stroke-width="2"/></svg>
<div style="position:absolute;left:364px;top:851.5px;white-space:nowrap;font-size:16px;color:#e8e8e8;letter-spacing:0.25px;">Stop if heavy input clipping occurs</div>
<div style="position:absolute;left:657px;top:812px;width:262px;height:29px;background:#d9d9d9;"></div>
<div style="position:absolute;left:660px;top:819px;white-space:nowrap;font-size:16px;color:#7a7a7a;">Default Output</div>
<div style="position:absolute;left:919px;top:812px;width:20px;height:29px;background:linear-gradient(#999,#7a7a7a);"></div>
<svg style="left:924px;top:824px" width="10" height="6"><polygon points="1,1 9,1 5,5" fill="#8e8e8e"/></svg>
<div style="position:absolute;left:657px;top:845px;width:262px;height:29px;background:#c4c4c4;"></div>
<div style="position:absolute;left:660px;top:851.5px;white-space:nowrap;font-size:16px;color:#0a0a0a;">L+R</div>
<div style="position:absolute;left:919px;top:845px;width:20px;height:29px;background:linear-gradient(#999,#7a7a7a);"></div>
<svg style="left:923px;top:856px" width="12" height="8"><polygon points="0.5,1 11.5,1 6,7" fill="#222"/></svg>
<div style="position:absolute;left:945px;top:812px;width:46px;height:62px;background:linear-gradient(#999 0%,#bdbdbd 10%,#c4c4c4 80%,#f4f4f4 100%);border-radius:3px;border:1px solid #666;"></div>
<svg style="left:954px;top:830px" width="28" height="28"><defs><filter id="gl"><feGaussianBlur stdDeviation="1.2"/></filter></defs><polygon points="5,4 23,14 5,24" fill="none" stroke="#4f4" stroke-width="3" filter="url(#gl)" opacity="0.8"/><polygon points="6,5 22,14 6,23" fill="#8fe08f" stroke="#0b0" stroke-width="2.2"/></svg>
<div style="position:absolute;left:1035px;top:266px;width:349px;height:489px;box-shadow:0 2px 6px rgba(0,0,0,0.5);background:rgba(0,0,0,0.25);"></div>
<div style="position:absolute;left:1033px;top:264px;width:347px;height:487px;background:#a6a6a6;border:1px solid #8c8c8c;border-top:none;"></div>
<div style="position:absolute;left:1033px;top:264px;width:347px;height:37px;background:#fff;border:1px solid #c8c8c8;border-bottom:none;"></div>
<svg style="left:1042px;top:272px" width="20" height="19"><rect x="0.5" y="0.5" width="19" height="18" rx="2" fill="#f4f6f8" stroke="#4a6a8a" stroke-width="1"/><path d="M9,4 Q12,6 9,9 Q8,10 10,11" fill="none" stroke="#e8701a" stroke-width="1.6"/><path d="M5,11 H14 Q13,15 9.5,15 Q6,15 5,11 Z" fill="#7b9ab5"/><path d="M14,12 Q16,12 15,13.5" fill="none" stroke="#7b9ab5" stroke-width="1"/><path d="M4,16.5 Q10,18 15,16.5" fill="none" stroke="#7b9ab5" stroke-width="1"/></svg>
<div style="position:absolute;left:1067px;top:274px;white-space:nowrap;font-size:14px;color:#7c8a96;">MICROPHONE (O6...</div>
<div style="position:absolute;left:1227px;top:281px;width:12px;height:1px;background:#777;"></div>
<div style="position:absolute;left:1285px;top:276px;width:12px;height:12px;border:1px solid #666;"></div>
<svg style="left:1343px;top:275px" width="14" height="14"><line x1="1" y1="1" x2="13" y2="13" stroke="#555" stroke-width="1.1"/><line x1="13" y1="1" x2="1" y2="13" stroke="#555" stroke-width="1.1"/></svg>
<div style="position:absolute;left:1034px;top:301px;width:345px;height:11px;background:linear-gradient(#8a8a8a 0px,#c8c8c8 3px,#a8a8a8 10px);"></div>
<div style="position:absolute;left:1039px;top:319px;width:336px;height:190px;background:linear-gradient(#ffffff,#c8c8c8 30%,#b8b8b8 80%,#e0e0e0);border-radius:4px;border:1px solid #8a8a8a;"></div>
<div style="position:absolute;left:1044px;top:324px;width:325px;height:179px;background:#404040;border-top:1px solid #000;border-left:1px solid #222;border-radius:3px;box-shadow:inset 0 5px 5px -3px #000;"></div>
<div style="position:absolute;left:1050px;top:329px;white-space:nowrap;font-size:32px;font-weight:bold;color:#c4c4c4;letter-spacing:0.4px;">dB(Z) F</div>
<div style="position:absolute;left:1265px;top:332px;width:97px;height:31px;background:#3a3a3a;border-radius:3px;"></div>
<div style="position:absolute;left:1265px;top:330px;white-space:nowrap;width:97px;text-align:center;font-size:31px;font-weight:bold;color:#333;">OVER</div>
<svg style="left:0;top:0" width="1894" height="944"><polygon points="1102.6,402.0 1109.6,402.0 1113.1,406.0 1108.1,446.3 1102.5,447.3 1097.5,443.0" fill="#393939"/><polygon points="1096.1,454.0 1102.2,449.7 1107.5,450.7 1102.5,491.0 1098.0,495.0 1091.0,495.0" fill="#393939"/><polygon points="1133.5,450.7 1139.2,449.7 1144.1,454.0 1139.0,495.0 1132.0,495.0 1128.5,491.0" fill="#3a3a3a"/><polygon points="1260.6,402.0 1267.6,402.0 1271.1,406.0 1266.1,446.3 1260.5,447.3 1255.5,443.0" fill="#3a3a3a"/><polygon points="1212.5,450.7 1218.2,449.7 1223.1,454.0 1218.0,495.0 1211.0,495.0 1207.5,491.0" fill="#3a3a3a"/><polygon points="1151.8,402.0 1180.4,402.0 1179.0,413.0 1150.5,413.0" fill="#000" transform="translate(1.5,1.5)"/><polygon points="1151.8,402.0 1180.4,402.0 1179.0,413.0 1150.5,413.0" fill="#fff"/><polygon points="1181.6,402.0 1188.6,402.0 1192.1,406.0 1187.1,446.3 1181.5,447.3 1176.5,443.0" fill="#000" transform="translate(1.5,1.5)"/><polygon points="1181.6,402.0 1188.6,402.0 1192.1,406.0 1187.1,446.3 1181.5,447.3 1176.5,443.0" fill="#fff"/><polygon points="1143.6,402.0 1150.6,402.0 1145.5,443.0 1139.5,447.3 1134.1,446.3 1139.1,406.0" fill="#000" transform="translate(1.5,1.5)"/><polygon points="1143.6,402.0 1150.6,402.0 1145.5,443.0 1139.5,447.3 1134.1,446.3 1139.1,406.0" fill="#fff"/><polygon points="1140.5,448.5 1146.7,443.0 1175.3,443.0 1180.1,448.5 1173.9,454.0 1145.3,454.0" fill="#000" transform="translate(1.5,1.5)"/><polygon points="1140.5,448.5 1146.7,443.0 1175.3,443.0 1180.1,448.5 1173.9,454.0 1145.3,454.0" fill="#fff"/><polygon points="1175.1,454.0 1181.2,449.7 1186.5,450.7 1181.5,491.0 1177.0,495.0 1170.0,495.0" fill="#000" transform="translate(1.5,1.5)"/><polygon points="1175.1,454.0 1181.2,449.7 1186.5,450.7 1181.5,491.0 1177.0,495.0 1170.0,495.0" fill="#fff"/><polygon points="1141.6,484.0 1170.2,484.0 1168.8,495.0 1140.2,495.0" fill="#000" transform="translate(1.5,1.5)"/><polygon points="1141.6,484.0 1170.2,484.0 1168.8,495.0 1140.2,495.0" fill="#fff"/><polygon points="1230.8,402.0 1259.4,402.0 1258.0,413.0 1229.5,413.0" fill="#000" transform="translate(1.5,1.5)"/><polygon points="1230.8,402.0 1259.4,402.0 1258.0,413.0 1229.5,413.0" fill="#fff"/><polygon points="1222.6,402.0 1229.6,402.0 1224.5,443.0 1218.5,447.3 1213.1,446.3 1218.1,406.0" fill="#000" transform="translate(1.5,1.5)"/><polygon points="1222.6,402.0 1229.6,402.0 1224.5,443.0 1218.5,447.3 1213.1,446.3 1218.1,406.0" fill="#fff"/><polygon points="1219.5,448.5 1225.7,443.0 1254.3,443.0 1259.1,448.5 1252.9,454.0 1224.3,454.0" fill="#000" transform="translate(1.5,1.5)"/><polygon points="1219.5,448.5 1225.7,443.0 1254.3,443.0 1259.1,448.5 1252.9,454.0 1224.3,454.0" fill="#fff"/><polygon points="1254.1,454.0 1260.2,449.7 1265.5,450.7 1260.5,491.0 1256.0,495.0 1249.0,495.0" fill="#000" transform="translate(1.5,1.5)"/><polygon points="1254.1,454.0 1260.2,449.7 1265.5,450.7 1260.5,491.0 1256.0,495.0 1249.0,495.0" fill="#fff"/><polygon points="1220.6,484.0 1249.2,484.0 1247.8,495.0 1219.2,495.0" fill="#000" transform="translate(1.5,1.5)"/><polygon points="1220.6,484.0 1249.2,484.0 1247.8,495.0 1219.2,495.0" fill="#fff"/><polygon points="1309.8,402.0 1338.4,402.0 1337.0,413.0 1308.5,413.0" fill="#000" transform="translate(1.5,1.5)"/><polygon points="1309.8,402.0 1338.4,402.0 1337.0,413.0 1308.5,413.0" fill="#fff"/><polygon points="1339.6,402.0 1346.6,402.0 1350.1,406.0 1345.1,446.3 1339.5,447.3 1334.5,443.0" fill="#000" transform="translate(1.5,1.5)"/><polygon points="1339.6,402.0 1346.6,402.0 1350.1,406.0 1345.1,446.3 1339.5,447.3 1334.5,443.0" fill="#fff"/><polygon points="1333.1,454.0 1339.2,449.7 1344.5,450.7 1339.5,491.0 1335.0,495.0 1328.0,495.0" fill="#000" transform="translate(1.5,1.5)"/><polygon points="1333.1,454.0 1339.2,449.7 1344.5,450.7 1339.5,491.0 1335.0,495.0 1328.0,495.0" fill="#fff"/><polygon points="1299.6,484.0 1328.2,484.0 1326.8,495.0 1298.2,495.0" fill="#000" transform="translate(1.5,1.5)"/><polygon points="1299.6,484.0 1328.2,484.0 1326.8,495.0 1298.2,495.0" fill="#fff"/><polygon points="1291.5,450.7 1297.2,449.7 1302.1,454.0 1297.0,495.0 1290.0,495.0 1286.5,491.0" fill="#000" transform="translate(1.5,1.5)"/><polygon points="1291.5,450.7 1297.2,449.7 1302.1,454.0 1297.0,495.0 1290.0,495.0 1286.5,491.0" fill="#fff"/><polygon points="1301.6,402.0 1308.6,402.0 1303.5,443.0 1297.5,447.3 1292.1,446.3 1297.1,406.0" fill="#000" transform="translate(1.5,1.5)"/><polygon points="1301.6,402.0 1308.6,402.0 1303.5,443.0 1297.5,447.3 1292.1,446.3 1297.1,406.0" fill="#fff"/><polygon points="1298.5,448.5 1304.7,443.0 1333.3,443.0 1338.1,448.5 1331.9,454.0 1303.3,454.0" fill="#000" transform="translate(1.5,1.5)"/><polygon points="1298.5,448.5 1304.7,443.0 1333.3,443.0 1338.1,448.5 1331.9,454.0 1303.3,454.0" fill="#fff"/><circle cx="1269" cy="490.5" r="5.5" fill="#000"/><circle cx="1267.7" cy="489.5" r="5.5" fill="#fff"/></svg>
<div style="position:absolute;left:1039px;top:515px;width:42px;height:31px;background:linear-gradient(#9a9a9a 0px,#c8c8c8 3px,#d6d6d6 60%,#f4f4f4 100%);border:1px solid #6a6a6a;border-radius:4px 0 0 4px;"></div>
<div style="position:absolute;left:1039px;top:522px;white-space:nowrap;width:42px;text-align:center;font-size:16px;color:#111;">SPL</div>
<div style="position:absolute;left:1080px;top:515px;width:31px;height:31px;background:linear-gradient(#bcbcbc 0%,#a6a6a6 60%,#8a8a8a 92%,#555 100%);border:1px solid #6a6a6a;"></div>
<div style="position:absolute;left:1080px;top:522px;white-space:nowrap;width:31px;text-align:center;font-size:16px;color:#111;">L<sub style="font-size:9px">eq</sub></div>
<div style="position:absolute;left:1110px;top:515px;width:42px;height:31px;background:linear-gradient(#bcbcbc 0%,#a6a6a6 60%,#8a8a8a 92%,#555 100%);border:1px solid #6a6a6a;border-radius:0 4px 4px 0;"></div>
<div style="position:absolute;left:1110px;top:522px;white-space:nowrap;width:42px;text-align:center;font-size:16px;color:#111;">SEL</div>
<div style="position:absolute;left:1179px;top:515px;width:23px;height:31px;background:linear-gradient(#bcbcbc 0%,#a6a6a6 60%,#8a8a8a 92%,#555 100%);border:1px solid #6a6a6a;border-radius:4px 0 0 4px;"></div>
<div style="position:absolute;left:1179px;top:522px;white-space:nowrap;width:23px;text-align:center;font-size:16px;color:#111;">A</div>
<div style="position:absolute;left:1201px;top:515px;width:25px;height:31px;background:linear-gradient(#bcbcbc 0%,#a6a6a6 60%,#8a8a8a 92%,#555 100%);border:1px solid #6a6a6a;"></div>
<div style="position:absolute;left:1201px;top:522px;white-space:nowrap;width:25px;text-align:center;font-size:16px;color:#111;">C</div>
<div style="position:absolute;left:1225px;top:515px;width:21px;height:31px;background:linear-gradient(#9a9a9a 0px,#c8c8c8 3px,#d6d6d6 60%,#f4f4f4 100%);border:1px solid #6a6a6a;border-radius:0 4px 4px 0;"></div>
<div style="position:absolute;left:1225px;top:522px;white-space:nowrap;width:21px;text-align:center;font-size:16px;color:#111;">Z</div>
<div style="position:absolute;left:1271px;top:515px;width:22px;height:31px;background:linear-gradient(#9a9a9a 0px,#c8c8c8 3px,#d6d6d6 60%,#f4f4f4 100%);border:1px solid #6a6a6a;border-radius:4px 0 0 4px;"></div>
<div style="position:absolute;left:1271px;top:522px;white-space:nowrap;width:22px;text-align:center;font-size:16px;color:#111;">F</div>
<div style="position:absolute;left:1292px;top:515px;width:23px;height:31px;background:linear-gradient(#bcbcbc 0%,#a6a6a6 60%,#8a8a8a 92%,#555 100%);border:1px solid #6a6a6a;border-radius:0 4px 4px 0;"></div>
<div style="position:absolute;left:1292px;top:522px;white-space:nowrap;width:23px;text-align:center;font-size:16px;color:#111;">S</div>
<div style="position:absolute;left:1341px;top:515px;width:33px;height:31px;background:linear-gradient(#bcbcbc 0%,#a6a6a6 60%,#8a8a8a 92%,#555 100%);border:1px solid #6a6a6a;border-radius:4px;"></div>
<div style="position:absolute;left:1341px;top:522px;white-space:nowrap;width:33px;text-align:center;font-size:16px;color:#111;">HP</div>
<div style="position:absolute;left:1039px;top:553px;width:336px;height:127px;background:linear-gradient(#ffffff,#c8c8c8 30%,#b8b8b8 80%,#e0e0e0);border-radius:4px;border:1px solid #8a8a8a;"></div>
<div style="position:absolute;left:1044px;top:558px;width:325px;height:116px;background:#404040;border-top:1px solid #000;border-left:1px solid #222;border-radius:3px;box-shadow:inset 0 5px 5px -3px #000;"></div>
<div style="position:absolute;left:1072px;top:582px;white-space:nowrap;font-size:13px;color:#c8c8c8;">dBFS</div>
<div style="position:absolute;left:1167px;top:571px;width:78px;height:28px;background:#000;border-radius:4px;"></div>
<div style="position:absolute;left:1167px;top:570px;white-space:nowrap;width:78px;text-align:center;font-size:25px;font-weight:bold;color:#fff;letter-spacing:-0.5px;">-26,2</div>
<div style="position:absolute;left:1337px;top:581px;white-space:nowrap;font-size:16px;color:#d8d8d8;font-weight:bold;">In</div>
<div style="position:absolute;left:1071px;top:607px;width:282px;height:14px;background:#000;"></div>
<div style="position:absolute;left:1071px;top:607px;width:207px;height:14px;background:linear-gradient(90deg,#0000ff 0%,#0030c0 30%,#008080 60%,#00ff00 100%);"></div>
<div style="position:absolute;left:1299px;top:609px;width:3px;height:10px;background:#f00;"></div>
<div style="position:absolute;left:1072px;top:623px;width:1px;height:10px;background:#fff;"></div>
<div style="position:absolute;left:1086px;top:623px;width:1px;height:7px;background:#fff;"></div>
<div style="position:absolute;left:1100px;top:623px;width:1px;height:10px;background:#fff;"></div>
<div style="position:absolute;left:1114px;top:623px;width:1px;height:7px;background:#fff;"></div>
<div style="position:absolute;left:1128px;top:623px;width:1px;height:10px;background:#fff;"></div>
<div style="position:absolute;left:1142px;top:623px;width:1px;height:7px;background:#fff;"></div>
<div style="position:absolute;left:1156px;top:623px;width:1px;height:10px;background:#fff;"></div>
<div style="position:absolute;left:1170px;top:623px;width:1px;height:7px;background:#fff;"></div>
<div style="position:absolute;left:1184px;top:623px;width:1px;height:10px;background:#fff;"></div>
<div style="position:absolute;left:1198px;top:623px;width:1px;height:7px;background:#fff;"></div>
<div style="position:absolute;left:1212px;top:623px;width:1px;height:10px;background:#fff;"></div>
<div style="position:absolute;left:1226px;top:623px;width:1px;height:7px;background:#fff;"></div>
<div style="position:absolute;left:1240px;top:623px;width:1px;height:10px;background:#fff;"></div>
<div style="position:absolute;left:1254px;top:623px;width:1px;height:7px;background:#fff;"></div>
<div style="position:absolute;left:1268px;top:623px;width:1px;height:10px;background:#fff;"></div>
<div style="position:absolute;left:1282px;top:623px;width:1px;height:7px;background:#fff;"></div>
<div style="position:absolute;left:1296px;top:623px;width:1px;height:10px;background:#fff;"></div>
<div style="position:absolute;left:1310px;top:623px;width:1px;height:7px;background:#fff;"></div>
<div style="position:absolute;left:1324px;top:623px;width:1px;height:10px;background:#fff;"></div>
<div style="position:absolute;left:1338px;top:623px;width:1px;height:7px;background:#fff;"></div>
<div style="position:absolute;left:1352px;top:623px;width:1px;height:10px;background:#fff;"></div>
<div style="position:absolute;left:1045px;top:636px;white-space:nowrap;width:50px;text-align:center;font-size:13px;color:#c8c8c8;letter-spacing:1.2px;">-100</div>
<div style="position:absolute;left:1101px;top:636px;white-space:nowrap;width:50px;text-align:center;font-size:13px;color:#c8c8c8;letter-spacing:1.2px;">-80</div>
<div style="position:absolute;left:1157px;top:636px;white-space:nowrap;width:50px;text-align:center;font-size:13px;color:#c8c8c8;letter-spacing:1.2px;">-60</div>
<div style="position:absolute;left:1213px;top:636px;white-space:nowrap;width:50px;text-align:center;font-size:13px;color:#c8c8c8;letter-spacing:1.2px;">-40</div>
<div style="position:absolute;left:1269px;top:636px;white-space:nowrap;width:50px;text-align:center;font-size:13px;color:#c8c8c8;letter-spacing:1.2px;">-20</div>
<div style="position:absolute;left:1325px;top:636px;white-space:nowrap;width:50px;text-align:center;font-size:13px;color:#c8c8c8;letter-spacing:1.2px;">0</div>
<div style="position:absolute;left:1039px;top:686px;width:73px;height:22px;background:linear-gradient(#d4d4d4 0%,#b8b8b8 40%,#9c9c9c 100%);border:1px solid #5a5a5a;border-radius:4px;"></div>
<div style="position:absolute;left:1039px;top:689px;white-space:nowrap;width:73px;text-align:center;font-size:16px;color:#111;">MinMax</div>
<div style="position:absolute;left:1039px;top:712px;width:73px;height:22px;background:linear-gradient(#d4d4d4 0%,#b8b8b8 40%,#9c9c9c 100%);border:1px solid #5a5a5a;border-radius:4px;"></div>
<div style="position:absolute;left:1039px;top:715px;white-space:nowrap;width:73px;text-align:center;font-size:16px;color:#111;">Reset All</div>
<div style="position:absolute;left:1243px;top:686px;width:76px;height:22px;background:linear-gradient(#d4d4d4 0%,#b8b8b8 40%,#9c9c9c 100%);border:1px solid #5a5a5a;border-radius:4px;"></div>
<div style="position:absolute;left:1243px;top:689px;white-space:nowrap;width:76px;text-align:center;font-size:16px;color:#111;">Calibrate</div>
<div style="position:absolute;left:1243px;top:712px;width:76px;height:22px;background:linear-gradient(#d4d4d4 0%,#b8b8b8 40%,#9c9c9c 100%);border:1px solid #5a5a5a;border-radius:4px;"></div>
<div style="position:absolute;left:1243px;top:715px;white-space:nowrap;width:76px;text-align:center;font-size:16px;color:#111;">Logger</div>
<div style="position:absolute;left:1120px;top:686px;width:115px;height:48px;background:linear-gradient(#ffffff,#c8c8c8 30%,#b8b8b8 80%,#e0e0e0);border-radius:4px;border:1px solid #8a8a8a;"></div>
<div style="position:absolute;left:1124px;top:690px;width:107px;height:40px;background:#3c3c3c;border-radius:4px;border-top:1px solid #000;box-shadow:inset 0 4px 4px -2px #000;"></div>
<div style="position:absolute;left:1144px;top:694px;white-space:nowrap;font-size:10px;font-weight:bold;color:#d8d0c0;">Elapsed Time</div>
<svg style="left:0;top:0" width="1894" height="944"><line x1="1138.5" y1="708.9" x2="1146.3" y2="708.9" stroke="#fff" stroke-width="2.0" stroke-linecap="round"/><line x1="1146.8" y1="709.6" x2="1145.6" y2="716.7" stroke="#fff" stroke-width="2.0" stroke-linecap="round"/><line x1="1145.4" y1="718.3" x2="1144.3" y2="725.4" stroke="#fff" stroke-width="2.0" stroke-linecap="round"/><line x1="1135.7" y1="726.1" x2="1143.5" y2="726.1" stroke="#fff" stroke-width="2.0" stroke-linecap="round"/><line x1="1136.4" y1="718.3" x2="1135.3" y2="725.4" stroke="#fff" stroke-width="2.0" stroke-linecap="round"/><line x1="1137.8" y1="709.6" x2="1136.6" y2="716.7" stroke="#fff" stroke-width="2.0" stroke-linecap="round"/><line x1="1162.5" y1="708.9" x2="1170.3" y2="708.9" stroke="#fff" stroke-width="2.0" stroke-linecap="round"/><line x1="1170.8" y1="709.6" x2="1169.6" y2="716.7" stroke="#fff" stroke-width="2.0" stroke-linecap="round"/><line x1="1169.4" y1="718.3" x2="1168.3" y2="725.4" stroke="#fff" stroke-width="2.0" stroke-linecap="round"/><line x1="1159.7" y1="726.1" x2="1167.5" y2="726.1" stroke="#fff" stroke-width="2.0" stroke-linecap="round"/><line x1="1160.4" y1="718.3" x2="1159.3" y2="725.4" stroke="#fff" stroke-width="2.0" stroke-linecap="round"/><line x1="1161.8" y1="709.6" x2="1160.6" y2="716.7" stroke="#fff" stroke-width="2.0" stroke-linecap="round"/><line x1="1174.5" y1="708.9" x2="1182.3" y2="708.9" stroke="#fff" stroke-width="2.0" stroke-linecap="round"/><line x1="1182.8" y1="709.6" x2="1181.6" y2="716.7" stroke="#fff" stroke-width="2.0" stroke-linecap="round"/><line x1="1181.4" y1="718.3" x2="1180.3" y2="725.4" stroke="#fff" stroke-width="2.0" stroke-linecap="round"/><line x1="1171.7" y1="726.1" x2="1179.5" y2="726.1" stroke="#fff" stroke-width="2.0" stroke-linecap="round"/><line x1="1173.1" y1="717.5" x2="1180.9" y2="717.5" stroke="#fff" stroke-width="2.0" stroke-linecap="round"/><line x1="1198.5" y1="708.9" x2="1206.3" y2="708.9" stroke="#fff" stroke-width="2.0" stroke-linecap="round"/><line x1="1197.8" y1="709.6" x2="1196.6" y2="716.7" stroke="#fff" stroke-width="2.0" stroke-linecap="round"/><line x1="1197.1" y1="717.5" x2="1204.9" y2="717.5" stroke="#fff" stroke-width="2.0" stroke-linecap="round"/><line x1="1205.4" y1="718.3" x2="1204.3" y2="725.4" stroke="#fff" stroke-width="2.0" stroke-linecap="round"/><line x1="1195.7" y1="726.1" x2="1203.5" y2="726.1" stroke="#fff" stroke-width="2.0" stroke-linecap="round"/><line x1="1209.5" y1="708.9" x2="1217.3" y2="708.9" stroke="#fff" stroke-width="2.0" stroke-linecap="round"/><line x1="1208.8" y1="709.6" x2="1207.6" y2="716.7" stroke="#fff" stroke-width="2.0" stroke-linecap="round"/><line x1="1208.1" y1="717.5" x2="1215.9" y2="717.5" stroke="#fff" stroke-width="2.0" stroke-linecap="round"/><line x1="1216.4" y1="718.3" x2="1215.3" y2="725.4" stroke="#fff" stroke-width="2.0" stroke-linecap="round"/><line x1="1206.7" y1="726.1" x2="1214.5" y2="726.1" stroke="#fff" stroke-width="2.0" stroke-linecap="round"/><circle cx="1154.8" cy="719" r="1.3" fill="#fff"/><circle cx="1154" cy="725.5" r="1.3" fill="#fff"/><circle cx="1190.8" cy="719" r="1.3" fill="#fff"/><circle cx="1190" cy="725.5" r="1.3" fill="#fff"/></svg>
<div style="position:absolute;left:1327px;top:686px;width:48px;height:48px;background:linear-gradient(#a0a0a0 0%,#c6c6c6 10%,#cfcfcf 80%,#f8f8f8 100%);border:1px solid #6a6a6a;border-radius:3px;"></div>
<svg style="left:1341px;top:700px" width="20" height="20"><defs><radialGradient id="rd" cx="0.4" cy="0.35" r="0.7"><stop offset="0" stop-color="#ffb090"/><stop offset="0.4" stop-color="#f03010"/><stop offset="1" stop-color="#a01000"/></radialGradient></defs><circle cx="10" cy="10" r="8" fill="url(#rd)"/></svg>
</body></html>
